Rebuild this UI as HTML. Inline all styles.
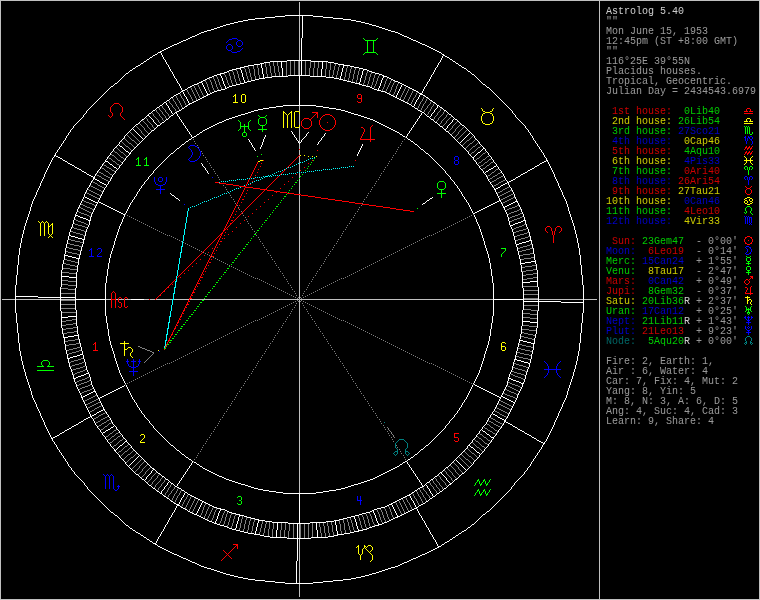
<!DOCTYPE html><html><head><meta charset="utf-8"><style>
html,body{margin:0;padding:0;background:#000;width:760px;height:600px;overflow:hidden}
svg{position:absolute;left:0;top:0}
.ln{position:absolute;left:606px;height:10px;line-height:10px;font-family:"Liberation Mono",monospace;font-size:10px;white-space:pre}
#side{position:absolute;left:0;top:0;width:760px;height:600px;opacity:0.8;will-change:transform}
</style></head><body>
<svg width="760" height="600" viewBox="0 0 760 600" shape-rendering="crispEdges">
<path fill="#c0c0c0" d="M0 0h760v1h-760zM0 1h1v1h-1zM599 1h1v1h-1zM759 1h1v1h-1zM0 2h1v1h-1zM299 2h1v1h-1zM599 2h1v1h-1zM759 2h1v1h-1zM0 3h1v1h-1zM299 3h1v1h-1zM599 3h1v1h-1zM759 3h1v1h-1zM0 4h1v1h-1zM299 4h1v1h-1zM599 4h1v1h-1zM759 4h1v1h-1zM0 5h1v1h-1zM299 5h1v1h-1zM599 5h1v1h-1zM759 5h1v1h-1zM0 6h1v1h-1zM299 6h1v1h-1zM599 6h1v1h-1zM759 6h1v1h-1zM0 7h1v1h-1zM299 7h1v1h-1zM599 7h1v1h-1zM759 7h1v1h-1zM0 8h1v1h-1zM299 8h1v1h-1zM599 8h1v1h-1zM759 8h1v1h-1zM0 9h1v1h-1zM299 9h1v1h-1zM599 9h1v1h-1zM759 9h1v1h-1zM0 10h1v1h-1zM299 10h1v1h-1zM599 10h1v1h-1zM759 10h1v1h-1zM0 11h1v1h-1zM299 11h1v1h-1zM599 11h1v1h-1zM759 11h1v1h-1zM0 12h1v1h-1zM299 12h1v1h-1zM599 12h1v1h-1zM759 12h1v1h-1zM0 13h1v1h-1zM299 13h1v1h-1zM599 13h1v1h-1zM759 13h1v1h-1zM0 14h1v1h-1zM299 14h1v1h-1zM599 14h1v1h-1zM759 14h1v1h-1zM0 15h1v1h-1zM599 15h1v1h-1zM759 15h1v1h-1zM0 16h1v1h-1zM299 16h1v1h-1zM599 16h1v1h-1zM759 16h1v1h-1zM0 17h1v1h-1zM299 17h1v1h-1zM599 17h1v1h-1zM759 17h1v1h-1zM0 18h1v1h-1zM299 18h1v1h-1zM599 18h1v1h-1zM759 18h1v1h-1zM0 19h1v1h-1zM299 19h1v1h-1zM599 19h1v1h-1zM759 19h1v1h-1zM0 20h1v1h-1zM299 20h1v1h-1zM599 20h1v1h-1zM759 20h1v1h-1zM0 21h1v1h-1zM299 21h1v1h-1zM599 21h1v1h-1zM759 21h1v1h-1zM0 22h1v1h-1zM299 22h1v1h-1zM599 22h1v1h-1zM759 22h1v1h-1zM0 23h1v1h-1zM299 23h1v1h-1zM599 23h1v1h-1zM759 23h1v1h-1zM0 24h1v1h-1zM299 24h1v1h-1zM599 24h1v1h-1zM759 24h1v1h-1zM0 25h1v1h-1zM299 25h1v1h-1zM599 25h1v1h-1zM759 25h1v1h-1zM0 26h1v1h-1zM299 26h1v1h-1zM599 26h1v1h-1zM759 26h1v1h-1zM0 27h1v1h-1zM299 27h1v1h-1zM599 27h1v1h-1zM759 27h1v1h-1zM0 28h1v1h-1zM299 28h1v1h-1zM599 28h1v1h-1zM759 28h1v1h-1zM0 29h1v1h-1zM299 29h1v1h-1zM599 29h1v1h-1zM759 29h1v1h-1zM0 30h1v1h-1zM299 30h1v1h-1zM599 30h1v1h-1zM759 30h1v1h-1zM0 31h1v1h-1zM299 31h1v1h-1zM599 31h1v1h-1zM759 31h1v1h-1zM0 32h1v1h-1zM299 32h1v1h-1zM599 32h1v1h-1zM759 32h1v1h-1zM0 33h1v1h-1zM299 33h1v1h-1zM599 33h1v1h-1zM759 33h1v1h-1zM0 34h1v1h-1zM299 34h1v1h-1zM599 34h1v1h-1zM759 34h1v1h-1zM0 35h1v1h-1zM299 35h1v1h-1zM599 35h1v1h-1zM759 35h1v1h-1zM0 36h1v1h-1zM299 36h1v1h-1zM599 36h1v1h-1zM759 36h1v1h-1zM0 37h1v1h-1zM299 37h1v1h-1zM599 37h1v1h-1zM759 37h1v1h-1zM0 38h1v1h-1zM299 38h1v1h-1zM599 38h1v1h-1zM759 38h1v1h-1zM0 39h1v1h-1zM299 39h1v1h-1zM599 39h1v1h-1zM759 39h1v1h-1zM0 40h1v1h-1zM299 40h1v1h-1zM599 40h1v1h-1zM759 40h1v1h-1zM0 41h1v1h-1zM299 41h1v1h-1zM599 41h1v1h-1zM759 41h1v1h-1zM0 42h1v1h-1zM299 42h1v1h-1zM599 42h1v1h-1zM759 42h1v1h-1zM0 43h1v1h-1zM299 43h1v1h-1zM599 43h1v1h-1zM759 43h1v1h-1zM0 44h1v1h-1zM299 44h1v1h-1zM599 44h1v1h-1zM759 44h1v1h-1zM0 45h1v1h-1zM299 45h1v1h-1zM599 45h1v1h-1zM759 45h1v1h-1zM0 46h1v1h-1zM299 46h1v1h-1zM599 46h1v1h-1zM759 46h1v1h-1zM0 47h1v1h-1zM299 47h1v1h-1zM599 47h1v1h-1zM759 47h1v1h-1zM0 48h1v1h-1zM299 48h1v1h-1zM599 48h1v1h-1zM759 48h1v1h-1zM0 49h1v1h-1zM299 49h1v1h-1zM599 49h1v1h-1zM759 49h1v1h-1zM0 50h1v1h-1zM299 50h1v1h-1zM599 50h1v1h-1zM759 50h1v1h-1zM0 51h1v1h-1zM299 51h1v1h-1zM599 51h1v1h-1zM759 51h1v1h-1zM0 52h1v1h-1zM299 52h1v1h-1zM599 52h1v1h-1zM759 52h1v1h-1zM0 53h1v1h-1zM299 53h1v1h-1zM599 53h1v1h-1zM759 53h1v1h-1zM0 54h1v1h-1zM299 54h1v1h-1zM599 54h1v1h-1zM759 54h1v1h-1zM0 55h1v1h-1zM299 55h1v1h-1zM599 55h1v1h-1zM759 55h1v1h-1zM0 56h1v1h-1zM299 56h1v1h-1zM599 56h1v1h-1zM759 56h1v1h-1zM0 57h1v1h-1zM299 57h1v1h-1zM599 57h1v1h-1zM759 57h1v1h-1zM0 58h1v1h-1zM299 58h1v1h-1zM599 58h1v1h-1zM759 58h1v1h-1zM0 59h1v1h-1zM299 59h1v1h-1zM599 59h1v1h-1zM759 59h1v1h-1zM0 60h1v1h-1zM599 60h1v1h-1zM759 60h1v1h-1zM0 61h1v1h-1zM299 61h1v1h-1zM599 61h1v1h-1zM759 61h1v1h-1zM0 62h1v1h-1zM299 62h1v1h-1zM599 62h1v1h-1zM759 62h1v1h-1zM0 63h1v1h-1zM299 63h1v1h-1zM599 63h1v1h-1zM759 63h1v1h-1zM0 64h1v1h-1zM299 64h1v1h-1zM599 64h1v1h-1zM759 64h1v1h-1zM0 65h1v1h-1zM299 65h1v1h-1zM599 65h1v1h-1zM759 65h1v1h-1zM0 66h1v1h-1zM299 66h1v1h-1zM599 66h1v1h-1zM759 66h1v1h-1zM0 67h1v1h-1zM299 67h1v1h-1zM599 67h1v1h-1zM759 67h1v1h-1zM0 68h1v1h-1zM299 68h1v1h-1zM599 68h1v1h-1zM759 68h1v1h-1zM0 69h1v1h-1zM299 69h1v1h-1zM599 69h1v1h-1zM759 69h1v1h-1zM0 70h1v1h-1zM299 70h1v1h-1zM599 70h1v1h-1zM759 70h1v1h-1zM0 71h1v1h-1zM299 71h1v1h-1zM599 71h1v1h-1zM759 71h1v1h-1zM0 72h1v1h-1zM299 72h1v1h-1zM599 72h1v1h-1zM759 72h1v1h-1zM0 73h1v1h-1zM299 73h1v1h-1zM599 73h1v1h-1zM759 73h1v1h-1zM0 74h1v1h-1zM299 74h1v1h-1zM599 74h1v1h-1zM759 74h1v1h-1zM0 75h1v1h-1zM599 75h1v1h-1zM759 75h1v1h-1zM0 76h1v1h-1zM599 76h1v1h-1zM759 76h1v1h-1zM0 77h1v1h-1zM599 77h1v1h-1zM759 77h1v1h-1zM0 78h1v1h-1zM599 78h1v1h-1zM759 78h1v1h-1zM0 79h1v1h-1zM599 79h1v1h-1zM759 79h1v1h-1zM0 80h1v1h-1zM599 80h1v1h-1zM759 80h1v1h-1zM0 81h1v1h-1zM599 81h1v1h-1zM759 81h1v1h-1zM0 82h1v1h-1zM599 82h1v1h-1zM759 82h1v1h-1zM0 83h1v1h-1zM599 83h1v1h-1zM759 83h1v1h-1zM0 84h1v1h-1zM599 84h1v1h-1zM759 84h1v1h-1zM0 85h1v1h-1zM599 85h1v1h-1zM759 85h1v1h-1zM0 86h1v1h-1zM599 86h1v1h-1zM759 86h1v1h-1zM0 87h1v1h-1zM599 87h1v1h-1zM759 87h1v1h-1zM0 88h1v1h-1zM599 88h1v1h-1zM759 88h1v1h-1zM0 89h1v1h-1zM599 89h1v1h-1zM759 89h1v1h-1zM0 90h1v1h-1zM599 90h1v1h-1zM759 90h1v1h-1zM0 91h1v1h-1zM599 91h1v1h-1zM759 91h1v1h-1zM0 92h1v1h-1zM599 92h1v1h-1zM759 92h1v1h-1zM0 93h1v1h-1zM599 93h1v1h-1zM759 93h1v1h-1zM0 94h1v1h-1zM599 94h1v1h-1zM759 94h1v1h-1zM0 95h1v1h-1zM599 95h1v1h-1zM759 95h1v1h-1zM0 96h1v1h-1zM599 96h1v1h-1zM759 96h1v1h-1zM0 97h1v1h-1zM599 97h1v1h-1zM759 97h1v1h-1zM0 98h1v1h-1zM599 98h1v1h-1zM759 98h1v1h-1zM0 99h1v1h-1zM599 99h1v1h-1zM759 99h1v1h-1zM0 100h1v1h-1zM599 100h1v1h-1zM759 100h1v1h-1zM0 101h1v1h-1zM599 101h1v1h-1zM759 101h1v1h-1zM0 102h1v1h-1zM599 102h1v1h-1zM759 102h1v1h-1zM0 103h1v1h-1zM599 103h1v1h-1zM759 103h1v1h-1zM0 104h1v1h-1zM599 104h1v1h-1zM759 104h1v1h-1zM0 105h1v1h-1zM599 105h1v1h-1zM759 105h1v1h-1zM0 106h1v1h-1zM299 106h1v1h-1zM599 106h1v1h-1zM759 106h1v1h-1zM0 107h1v1h-1zM299 107h1v1h-1zM599 107h1v1h-1zM759 107h1v1h-1zM0 108h1v1h-1zM299 108h1v1h-1zM599 108h1v1h-1zM759 108h1v1h-1zM0 109h1v1h-1zM299 109h1v1h-1zM599 109h1v1h-1zM759 109h1v1h-1zM0 110h1v1h-1zM299 110h1v1h-1zM599 110h1v1h-1zM759 110h1v1h-1zM0 111h1v1h-1zM299 111h1v1h-1zM599 111h1v1h-1zM759 111h1v1h-1zM0 112h1v1h-1zM599 112h1v1h-1zM759 112h1v1h-1zM0 113h1v1h-1zM599 113h1v1h-1zM759 113h1v1h-1zM0 114h1v1h-1zM299 114h1v1h-1zM599 114h1v1h-1zM759 114h1v1h-1zM0 115h1v1h-1zM299 115h1v1h-1zM599 115h1v1h-1zM759 115h1v1h-1zM0 116h1v1h-1zM299 116h1v1h-1zM599 116h1v1h-1zM759 116h1v1h-1zM0 117h1v1h-1zM299 117h1v1h-1zM599 117h1v1h-1zM759 117h1v1h-1zM0 118h1v1h-1zM299 118h1v1h-1zM599 118h1v1h-1zM759 118h1v1h-1zM0 119h1v1h-1zM299 119h1v1h-1zM599 119h1v1h-1zM759 119h1v1h-1zM0 120h1v1h-1zM299 120h1v1h-1zM599 120h1v1h-1zM759 120h1v1h-1zM0 121h1v1h-1zM299 121h1v1h-1zM599 121h1v1h-1zM759 121h1v1h-1zM0 122h1v1h-1zM299 122h1v1h-1zM599 122h1v1h-1zM759 122h1v1h-1zM0 123h1v1h-1zM299 123h1v1h-1zM599 123h1v1h-1zM759 123h1v1h-1zM0 124h1v1h-1zM299 124h1v1h-1zM599 124h1v1h-1zM759 124h1v1h-1zM0 125h1v1h-1zM599 125h1v1h-1zM759 125h1v1h-1zM0 126h1v1h-1zM599 126h1v1h-1zM759 126h1v1h-1zM0 127h1v1h-1zM299 127h1v1h-1zM599 127h1v1h-1zM759 127h1v1h-1zM0 128h1v1h-1zM299 128h1v1h-1zM599 128h1v1h-1zM759 128h1v1h-1zM0 129h1v1h-1zM299 129h1v1h-1zM599 129h1v1h-1zM759 129h1v1h-1zM0 130h1v1h-1zM299 130h1v1h-1zM599 130h1v1h-1zM759 130h1v1h-1zM0 131h1v1h-1zM299 131h1v1h-1zM599 131h1v1h-1zM759 131h1v1h-1zM0 132h1v1h-1zM299 132h1v1h-1zM599 132h1v1h-1zM759 132h1v1h-1zM0 133h1v1h-1zM299 133h1v1h-1zM599 133h1v1h-1zM759 133h1v1h-1zM0 134h1v1h-1zM299 134h1v1h-1zM599 134h1v1h-1zM759 134h1v1h-1zM0 135h1v1h-1zM299 135h1v1h-1zM599 135h1v1h-1zM759 135h1v1h-1zM0 136h1v1h-1zM299 136h1v1h-1zM599 136h1v1h-1zM759 136h1v1h-1zM0 137h1v1h-1zM299 137h1v1h-1zM599 137h1v1h-1zM759 137h1v1h-1zM0 138h1v1h-1zM299 138h1v1h-1zM599 138h1v1h-1zM759 138h1v1h-1zM0 139h1v1h-1zM299 139h1v1h-1zM599 139h1v1h-1zM759 139h1v1h-1zM0 140h1v1h-1zM299 140h1v1h-1zM599 140h1v1h-1zM759 140h1v1h-1zM0 141h1v1h-1zM299 141h1v1h-1zM599 141h1v1h-1zM759 141h1v1h-1zM0 142h1v1h-1zM299 142h1v1h-1zM599 142h1v1h-1zM759 142h1v1h-1zM0 143h1v1h-1zM599 143h1v1h-1zM759 143h1v1h-1zM0 144h1v1h-1zM299 144h1v1h-1zM599 144h1v1h-1zM759 144h1v1h-1zM0 145h1v1h-1zM299 145h1v1h-1zM599 145h1v1h-1zM759 145h1v1h-1zM0 146h1v1h-1zM299 146h1v1h-1zM599 146h1v1h-1zM759 146h1v1h-1zM0 147h1v1h-1zM299 147h1v1h-1zM599 147h1v1h-1zM759 147h1v1h-1zM0 148h1v1h-1zM299 148h1v1h-1zM599 148h1v1h-1zM759 148h1v1h-1zM0 149h1v1h-1zM599 149h1v1h-1zM759 149h1v1h-1zM0 150h1v1h-1zM299 150h1v1h-1zM599 150h1v1h-1zM759 150h1v1h-1zM0 151h1v1h-1zM299 151h1v1h-1zM599 151h1v1h-1zM759 151h1v1h-1zM0 152h1v1h-1zM299 152h1v1h-1zM599 152h1v1h-1zM759 152h1v1h-1zM0 153h1v1h-1zM299 153h1v1h-1zM599 153h1v1h-1zM759 153h1v1h-1zM0 154h1v1h-1zM299 154h1v1h-1zM599 154h1v1h-1zM759 154h1v1h-1zM0 155h1v1h-1zM599 155h1v1h-1zM759 155h1v1h-1zM0 156h1v1h-1zM299 156h1v1h-1zM599 156h1v1h-1zM759 156h1v1h-1zM0 157h1v1h-1zM299 157h1v1h-1zM599 157h1v1h-1zM759 157h1v1h-1zM0 158h1v1h-1zM299 158h1v1h-1zM599 158h1v1h-1zM759 158h1v1h-1zM0 159h1v1h-1zM299 159h1v1h-1zM599 159h1v1h-1zM759 159h1v1h-1zM0 160h1v1h-1zM299 160h1v1h-1zM599 160h1v1h-1zM759 160h1v1h-1zM0 161h1v1h-1zM299 161h1v1h-1zM599 161h1v1h-1zM759 161h1v1h-1zM0 162h1v1h-1zM299 162h1v1h-1zM599 162h1v1h-1zM759 162h1v1h-1zM0 163h1v1h-1zM299 163h1v1h-1zM599 163h1v1h-1zM759 163h1v1h-1zM0 164h1v1h-1zM299 164h1v1h-1zM599 164h1v1h-1zM759 164h1v1h-1zM0 165h1v1h-1zM299 165h1v1h-1zM599 165h1v1h-1zM759 165h1v1h-1zM0 166h1v1h-1zM299 166h1v1h-1zM599 166h1v1h-1zM759 166h1v1h-1zM0 167h1v1h-1zM299 167h1v1h-1zM599 167h1v1h-1zM759 167h1v1h-1zM0 168h1v1h-1zM299 168h1v1h-1zM599 168h1v1h-1zM759 168h1v1h-1zM0 169h1v1h-1zM299 169h1v1h-1zM599 169h1v1h-1zM759 169h1v1h-1zM0 170h1v1h-1zM299 170h1v1h-1zM599 170h1v1h-1zM759 170h1v1h-1zM0 171h1v1h-1zM299 171h1v1h-1zM599 171h1v1h-1zM759 171h1v1h-1zM0 172h1v1h-1zM599 172h1v1h-1zM759 172h1v1h-1zM0 173h1v1h-1zM299 173h1v1h-1zM599 173h1v1h-1zM759 173h1v1h-1zM0 174h1v1h-1zM299 174h1v1h-1zM599 174h1v1h-1zM759 174h1v1h-1zM0 175h1v1h-1zM299 175h1v1h-1zM599 175h1v1h-1zM759 175h1v1h-1zM0 176h1v1h-1zM299 176h1v1h-1zM599 176h1v1h-1zM759 176h1v1h-1zM0 177h1v1h-1zM299 177h1v1h-1zM599 177h1v1h-1zM759 177h1v1h-1zM0 178h1v1h-1zM599 178h1v1h-1zM759 178h1v1h-1zM0 179h1v1h-1zM299 179h1v1h-1zM599 179h1v1h-1zM759 179h1v1h-1zM0 180h1v1h-1zM299 180h1v1h-1zM599 180h1v1h-1zM759 180h1v1h-1zM0 181h1v1h-1zM299 181h1v1h-1zM599 181h1v1h-1zM759 181h1v1h-1zM0 182h1v1h-1zM299 182h1v1h-1zM599 182h1v1h-1zM759 182h1v1h-1zM0 183h1v1h-1zM299 183h1v1h-1zM599 183h1v1h-1zM759 183h1v1h-1zM0 184h1v1h-1zM299 184h1v1h-1zM599 184h1v1h-1zM759 184h1v1h-1zM0 185h1v1h-1zM299 185h1v1h-1zM599 185h1v1h-1zM759 185h1v1h-1zM0 186h1v1h-1zM299 186h1v1h-1zM599 186h1v1h-1zM759 186h1v1h-1zM0 187h1v1h-1zM299 187h1v1h-1zM599 187h1v1h-1zM759 187h1v1h-1zM0 188h1v1h-1zM299 188h1v1h-1zM599 188h1v1h-1zM759 188h1v1h-1zM0 189h1v1h-1zM299 189h1v1h-1zM599 189h1v1h-1zM759 189h1v1h-1zM0 190h1v1h-1zM299 190h1v1h-1zM599 190h1v1h-1zM759 190h1v1h-1zM0 191h1v1h-1zM299 191h1v1h-1zM599 191h1v1h-1zM759 191h1v1h-1zM0 192h1v1h-1zM299 192h1v1h-1zM599 192h1v1h-1zM759 192h1v1h-1zM0 193h1v1h-1zM299 193h1v1h-1zM599 193h1v1h-1zM759 193h1v1h-1zM0 194h1v1h-1zM599 194h1v1h-1zM759 194h1v1h-1zM0 195h1v1h-1zM299 195h1v1h-1zM599 195h1v1h-1zM759 195h1v1h-1zM0 196h1v1h-1zM299 196h1v1h-1zM599 196h1v1h-1zM759 196h1v1h-1zM0 197h1v1h-1zM299 197h1v1h-1zM599 197h1v1h-1zM759 197h1v1h-1zM0 198h1v1h-1zM299 198h1v1h-1zM599 198h1v1h-1zM759 198h1v1h-1zM0 199h1v1h-1zM299 199h1v1h-1zM599 199h1v1h-1zM759 199h1v1h-1zM0 200h1v1h-1zM299 200h1v1h-1zM599 200h1v1h-1zM759 200h1v1h-1zM0 201h1v1h-1zM299 201h1v1h-1zM599 201h1v1h-1zM759 201h1v1h-1zM0 202h1v1h-1zM299 202h1v1h-1zM599 202h1v1h-1zM759 202h1v1h-1zM0 203h1v1h-1zM299 203h1v1h-1zM599 203h1v1h-1zM759 203h1v1h-1zM0 204h1v1h-1zM299 204h1v1h-1zM599 204h1v1h-1zM759 204h1v1h-1zM0 205h1v1h-1zM299 205h1v1h-1zM599 205h1v1h-1zM759 205h1v1h-1zM0 206h1v1h-1zM299 206h1v1h-1zM599 206h1v1h-1zM759 206h1v1h-1zM0 207h1v1h-1zM299 207h1v1h-1zM599 207h1v1h-1zM759 207h1v1h-1zM0 208h1v1h-1zM299 208h1v1h-1zM599 208h1v1h-1zM759 208h1v1h-1zM0 209h1v1h-1zM299 209h1v1h-1zM599 209h1v1h-1zM759 209h1v1h-1zM0 210h1v1h-1zM299 210h1v1h-1zM599 210h1v1h-1zM759 210h1v1h-1zM0 211h1v1h-1zM299 211h1v1h-1zM599 211h1v1h-1zM759 211h1v1h-1zM0 212h1v1h-1zM299 212h1v1h-1zM599 212h1v1h-1zM759 212h1v1h-1zM0 213h1v1h-1zM299 213h1v1h-1zM599 213h1v1h-1zM759 213h1v1h-1zM0 214h1v1h-1zM299 214h1v1h-1zM599 214h1v1h-1zM759 214h1v1h-1zM0 215h1v1h-1zM299 215h1v1h-1zM599 215h1v1h-1zM759 215h1v1h-1zM0 216h1v1h-1zM299 216h1v1h-1zM599 216h1v1h-1zM759 216h1v1h-1zM0 217h1v1h-1zM299 217h1v1h-1zM599 217h1v1h-1zM759 217h1v1h-1zM0 218h1v1h-1zM299 218h1v1h-1zM599 218h1v1h-1zM759 218h1v1h-1zM0 219h1v1h-1zM299 219h1v1h-1zM599 219h1v1h-1zM759 219h1v1h-1zM0 220h1v1h-1zM299 220h1v1h-1zM599 220h1v1h-1zM759 220h1v1h-1zM0 221h1v1h-1zM299 221h1v1h-1zM599 221h1v1h-1zM759 221h1v1h-1zM0 222h1v1h-1zM299 222h1v1h-1zM599 222h1v1h-1zM759 222h1v1h-1zM0 223h1v1h-1zM299 223h1v1h-1zM599 223h1v1h-1zM759 223h1v1h-1zM0 224h1v1h-1zM299 224h1v1h-1zM599 224h1v1h-1zM759 224h1v1h-1zM0 225h1v1h-1zM299 225h1v1h-1zM599 225h1v1h-1zM759 225h1v1h-1zM0 226h1v1h-1zM299 226h1v1h-1zM599 226h1v1h-1zM759 226h1v1h-1zM0 227h1v1h-1zM299 227h1v1h-1zM599 227h1v1h-1zM759 227h1v1h-1zM0 228h1v1h-1zM299 228h1v1h-1zM599 228h1v1h-1zM759 228h1v1h-1zM0 229h1v1h-1zM299 229h1v1h-1zM599 229h1v1h-1zM759 229h1v1h-1zM0 230h1v1h-1zM299 230h1v1h-1zM599 230h1v1h-1zM759 230h1v1h-1zM0 231h1v1h-1zM299 231h1v1h-1zM599 231h1v1h-1zM759 231h1v1h-1zM0 232h1v1h-1zM299 232h1v1h-1zM599 232h1v1h-1zM759 232h1v1h-1zM0 233h1v1h-1zM299 233h1v1h-1zM599 233h1v1h-1zM759 233h1v1h-1zM0 234h1v1h-1zM299 234h1v1h-1zM599 234h1v1h-1zM759 234h1v1h-1zM0 235h1v1h-1zM299 235h1v1h-1zM599 235h1v1h-1zM759 235h1v1h-1zM0 236h1v1h-1zM299 236h1v1h-1zM599 236h1v1h-1zM759 236h1v1h-1zM0 237h1v1h-1zM299 237h1v1h-1zM599 237h1v1h-1zM759 237h1v1h-1zM0 238h1v1h-1zM299 238h1v1h-1zM599 238h1v1h-1zM759 238h1v1h-1zM0 239h1v1h-1zM299 239h1v1h-1zM599 239h1v1h-1zM759 239h1v1h-1zM0 240h1v1h-1zM299 240h1v1h-1zM599 240h1v1h-1zM759 240h1v1h-1zM0 241h1v1h-1zM299 241h1v1h-1zM599 241h1v1h-1zM759 241h1v1h-1zM0 242h1v1h-1zM299 242h1v1h-1zM599 242h1v1h-1zM759 242h1v1h-1zM0 243h1v1h-1zM299 243h1v1h-1zM599 243h1v1h-1zM759 243h1v1h-1zM0 244h1v1h-1zM299 244h1v1h-1zM599 244h1v1h-1zM759 244h1v1h-1zM0 245h1v1h-1zM299 245h1v1h-1zM599 245h1v1h-1zM759 245h1v1h-1zM0 246h1v1h-1zM299 246h1v1h-1zM599 246h1v1h-1zM759 246h1v1h-1zM0 247h1v1h-1zM299 247h1v1h-1zM599 247h1v1h-1zM759 247h1v1h-1zM0 248h1v1h-1zM299 248h1v1h-1zM599 248h1v1h-1zM759 248h1v1h-1zM0 249h1v1h-1zM299 249h1v1h-1zM599 249h1v1h-1zM759 249h1v1h-1zM0 250h1v1h-1zM299 250h1v1h-1zM599 250h1v1h-1zM759 250h1v1h-1zM0 251h1v1h-1zM299 251h1v1h-1zM599 251h1v1h-1zM759 251h1v1h-1zM0 252h1v1h-1zM299 252h1v1h-1zM599 252h1v1h-1zM759 252h1v1h-1zM0 253h1v1h-1zM299 253h1v1h-1zM599 253h1v1h-1zM759 253h1v1h-1zM0 254h1v1h-1zM299 254h1v1h-1zM599 254h1v1h-1zM759 254h1v1h-1zM0 255h1v1h-1zM299 255h1v1h-1zM599 255h1v1h-1zM759 255h1v1h-1zM0 256h1v1h-1zM299 256h1v1h-1zM599 256h1v1h-1zM759 256h1v1h-1zM0 257h1v1h-1zM299 257h1v1h-1zM599 257h1v1h-1zM759 257h1v1h-1zM0 258h1v1h-1zM299 258h1v1h-1zM599 258h1v1h-1zM759 258h1v1h-1zM0 259h1v1h-1zM299 259h1v1h-1zM599 259h1v1h-1zM759 259h1v1h-1zM0 260h1v1h-1zM299 260h1v1h-1zM599 260h1v1h-1zM759 260h1v1h-1zM0 261h1v1h-1zM299 261h1v1h-1zM599 261h1v1h-1zM759 261h1v1h-1zM0 262h1v1h-1zM299 262h1v1h-1zM599 262h1v1h-1zM759 262h1v1h-1zM0 263h1v1h-1zM299 263h1v1h-1zM599 263h1v1h-1zM759 263h1v1h-1zM0 264h1v1h-1zM299 264h1v1h-1zM599 264h1v1h-1zM759 264h1v1h-1zM0 265h1v1h-1zM299 265h1v1h-1zM599 265h1v1h-1zM759 265h1v1h-1zM0 266h1v1h-1zM299 266h1v1h-1zM599 266h1v1h-1zM759 266h1v1h-1zM0 267h1v1h-1zM299 267h1v1h-1zM599 267h1v1h-1zM759 267h1v1h-1zM0 268h1v1h-1zM299 268h1v1h-1zM599 268h1v1h-1zM759 268h1v1h-1zM0 269h1v1h-1zM299 269h1v1h-1zM599 269h1v1h-1zM759 269h1v1h-1zM0 270h1v1h-1zM299 270h1v1h-1zM599 270h1v1h-1zM759 270h1v1h-1zM0 271h1v1h-1zM299 271h1v1h-1zM599 271h1v1h-1zM759 271h1v1h-1zM0 272h1v1h-1zM299 272h1v1h-1zM599 272h1v1h-1zM759 272h1v1h-1zM0 273h1v1h-1zM299 273h1v1h-1zM599 273h1v1h-1zM759 273h1v1h-1zM0 274h1v1h-1zM299 274h1v1h-1zM599 274h1v1h-1zM759 274h1v1h-1zM0 275h1v1h-1zM299 275h1v1h-1zM599 275h1v1h-1zM759 275h1v1h-1zM0 276h1v1h-1zM299 276h1v1h-1zM599 276h1v1h-1zM759 276h1v1h-1zM0 277h1v1h-1zM299 277h1v1h-1zM599 277h1v1h-1zM759 277h1v1h-1zM0 278h1v1h-1zM299 278h1v1h-1zM599 278h1v1h-1zM759 278h1v1h-1zM0 279h1v1h-1zM299 279h1v1h-1zM599 279h1v1h-1zM759 279h1v1h-1zM0 280h1v1h-1zM299 280h1v1h-1zM599 280h1v1h-1zM759 280h1v1h-1zM0 281h1v1h-1zM299 281h1v1h-1zM599 281h1v1h-1zM759 281h1v1h-1zM0 282h1v1h-1zM299 282h1v1h-1zM599 282h1v1h-1zM759 282h1v1h-1zM0 283h1v1h-1zM299 283h1v1h-1zM599 283h1v1h-1zM759 283h1v1h-1zM0 284h1v1h-1zM299 284h1v1h-1zM599 284h1v1h-1zM759 284h1v1h-1zM0 285h1v1h-1zM299 285h1v1h-1zM599 285h1v1h-1zM759 285h1v1h-1zM0 286h1v1h-1zM299 286h1v1h-1zM599 286h1v1h-1zM759 286h1v1h-1zM0 287h1v1h-1zM299 287h1v1h-1zM599 287h1v1h-1zM759 287h1v1h-1zM0 288h1v1h-1zM299 288h1v1h-1zM599 288h1v1h-1zM759 288h1v1h-1zM0 289h1v1h-1zM299 289h1v1h-1zM599 289h1v1h-1zM759 289h1v1h-1zM0 290h1v1h-1zM299 290h1v1h-1zM599 290h1v1h-1zM759 290h1v1h-1zM0 291h1v1h-1zM299 291h1v1h-1zM599 291h1v1h-1zM759 291h1v1h-1zM0 292h1v1h-1zM299 292h1v1h-1zM599 292h1v1h-1zM759 292h1v1h-1zM0 293h1v1h-1zM299 293h1v1h-1zM599 293h1v1h-1zM759 293h1v1h-1zM0 294h1v1h-1zM299 294h1v1h-1zM599 294h1v1h-1zM759 294h1v1h-1zM0 295h1v1h-1zM299 295h1v1h-1zM599 295h1v1h-1zM759 295h1v1h-1zM0 296h1v1h-1zM299 296h1v1h-1zM599 296h1v1h-1zM759 296h1v1h-1zM0 297h1v1h-1zM299 297h1v1h-1zM599 297h1v1h-1zM759 297h1v1h-1zM0 298h1v1h-1zM299 298h1v1h-1zM599 298h1v1h-1zM759 298h1v1h-1zM0 299h1v1h-1zM2 299h13v1h-13zM16 299h44v1h-44zM61 299h14v1h-14zM106 299h5v1h-5zM116 299h2v1h-2zM119 299h5v1h-5zM125 299h6v1h-6zM144 299h5v1h-5zM150 299h5v1h-5zM156 299h16v1h-16zM174 299h15v1h-15zM190 299h109v1h-109zM300 299h193v1h-193zM524 299h14v1h-14zM539 299h44v1h-44zM584 299h13v1h-13zM599 299h1v1h-1zM759 299h1v1h-1zM0 300h1v1h-1zM299 300h1v1h-1zM599 300h1v1h-1zM759 300h1v1h-1zM0 301h1v1h-1zM299 301h1v1h-1zM599 301h1v1h-1zM759 301h1v1h-1zM0 302h1v1h-1zM299 302h1v1h-1zM599 302h1v1h-1zM759 302h1v1h-1zM0 303h1v1h-1zM299 303h1v1h-1zM599 303h1v1h-1zM759 303h1v1h-1zM0 304h1v1h-1zM299 304h1v1h-1zM599 304h1v1h-1zM759 304h1v1h-1zM0 305h1v1h-1zM299 305h1v1h-1zM599 305h1v1h-1zM759 305h1v1h-1zM0 306h1v1h-1zM299 306h1v1h-1zM599 306h1v1h-1zM759 306h1v1h-1zM0 307h1v1h-1zM299 307h1v1h-1zM599 307h1v1h-1zM759 307h1v1h-1zM0 308h1v1h-1zM299 308h1v1h-1zM599 308h1v1h-1zM759 308h1v1h-1zM0 309h1v1h-1zM299 309h1v1h-1zM599 309h1v1h-1zM759 309h1v1h-1zM0 310h1v1h-1zM299 310h1v1h-1zM599 310h1v1h-1zM759 310h1v1h-1zM0 311h1v1h-1zM299 311h1v1h-1zM599 311h1v1h-1zM759 311h1v1h-1zM0 312h1v1h-1zM299 312h1v1h-1zM599 312h1v1h-1zM759 312h1v1h-1zM0 313h1v1h-1zM299 313h1v1h-1zM599 313h1v1h-1zM759 313h1v1h-1zM0 314h1v1h-1zM299 314h1v1h-1zM599 314h1v1h-1zM759 314h1v1h-1zM0 315h1v1h-1zM299 315h1v1h-1zM599 315h1v1h-1zM759 315h1v1h-1zM0 316h1v1h-1zM299 316h1v1h-1zM599 316h1v1h-1zM759 316h1v1h-1zM0 317h1v1h-1zM299 317h1v1h-1zM599 317h1v1h-1zM759 317h1v1h-1zM0 318h1v1h-1zM299 318h1v1h-1zM599 318h1v1h-1zM759 318h1v1h-1zM0 319h1v1h-1zM299 319h1v1h-1zM599 319h1v1h-1zM759 319h1v1h-1zM0 320h1v1h-1zM299 320h1v1h-1zM599 320h1v1h-1zM759 320h1v1h-1zM0 321h1v1h-1zM299 321h1v1h-1zM599 321h1v1h-1zM759 321h1v1h-1zM0 322h1v1h-1zM299 322h1v1h-1zM599 322h1v1h-1zM759 322h1v1h-1zM0 323h1v1h-1zM299 323h1v1h-1zM599 323h1v1h-1zM759 323h1v1h-1zM0 324h1v1h-1zM299 324h1v1h-1zM599 324h1v1h-1zM759 324h1v1h-1zM0 325h1v1h-1zM299 325h1v1h-1zM599 325h1v1h-1zM759 325h1v1h-1zM0 326h1v1h-1zM299 326h1v1h-1zM599 326h1v1h-1zM759 326h1v1h-1zM0 327h1v1h-1zM299 327h1v1h-1zM599 327h1v1h-1zM759 327h1v1h-1zM0 328h1v1h-1zM299 328h1v1h-1zM599 328h1v1h-1zM759 328h1v1h-1zM0 329h1v1h-1zM299 329h1v1h-1zM599 329h1v1h-1zM759 329h1v1h-1zM0 330h1v1h-1zM299 330h1v1h-1zM599 330h1v1h-1zM759 330h1v1h-1zM0 331h1v1h-1zM299 331h1v1h-1zM599 331h1v1h-1zM759 331h1v1h-1zM0 332h1v1h-1zM299 332h1v1h-1zM599 332h1v1h-1zM759 332h1v1h-1zM0 333h1v1h-1zM299 333h1v1h-1zM599 333h1v1h-1zM759 333h1v1h-1zM0 334h1v1h-1zM299 334h1v1h-1zM599 334h1v1h-1zM759 334h1v1h-1zM0 335h1v1h-1zM299 335h1v1h-1zM599 335h1v1h-1zM759 335h1v1h-1zM0 336h1v1h-1zM299 336h1v1h-1zM599 336h1v1h-1zM759 336h1v1h-1zM0 337h1v1h-1zM299 337h1v1h-1zM599 337h1v1h-1zM759 337h1v1h-1zM0 338h1v1h-1zM299 338h1v1h-1zM599 338h1v1h-1zM759 338h1v1h-1zM0 339h1v1h-1zM299 339h1v1h-1zM599 339h1v1h-1zM759 339h1v1h-1zM0 340h1v1h-1zM299 340h1v1h-1zM599 340h1v1h-1zM759 340h1v1h-1zM0 341h1v1h-1zM299 341h1v1h-1zM599 341h1v1h-1zM759 341h1v1h-1zM0 342h1v1h-1zM299 342h1v1h-1zM599 342h1v1h-1zM759 342h1v1h-1zM0 343h1v1h-1zM299 343h1v1h-1zM599 343h1v1h-1zM759 343h1v1h-1zM0 344h1v1h-1zM299 344h1v1h-1zM599 344h1v1h-1zM759 344h1v1h-1zM0 345h1v1h-1zM299 345h1v1h-1zM599 345h1v1h-1zM759 345h1v1h-1zM0 346h1v1h-1zM299 346h1v1h-1zM599 346h1v1h-1zM759 346h1v1h-1zM0 347h1v1h-1zM299 347h1v1h-1zM599 347h1v1h-1zM759 347h1v1h-1zM0 348h1v1h-1zM299 348h1v1h-1zM599 348h1v1h-1zM759 348h1v1h-1zM0 349h1v1h-1zM299 349h1v1h-1zM599 349h1v1h-1zM759 349h1v1h-1zM0 350h1v1h-1zM299 350h1v1h-1zM599 350h1v1h-1zM759 350h1v1h-1zM0 351h1v1h-1zM299 351h1v1h-1zM599 351h1v1h-1zM759 351h1v1h-1zM0 352h1v1h-1zM299 352h1v1h-1zM599 352h1v1h-1zM759 352h1v1h-1zM0 353h1v1h-1zM299 353h1v1h-1zM599 353h1v1h-1zM759 353h1v1h-1zM0 354h1v1h-1zM299 354h1v1h-1zM599 354h1v1h-1zM759 354h1v1h-1zM0 355h1v1h-1zM299 355h1v1h-1zM599 355h1v1h-1zM759 355h1v1h-1zM0 356h1v1h-1zM299 356h1v1h-1zM599 356h1v1h-1zM759 356h1v1h-1zM0 357h1v1h-1zM299 357h1v1h-1zM599 357h1v1h-1zM759 357h1v1h-1zM0 358h1v1h-1zM299 358h1v1h-1zM599 358h1v1h-1zM759 358h1v1h-1zM0 359h1v1h-1zM299 359h1v1h-1zM599 359h1v1h-1zM759 359h1v1h-1zM0 360h1v1h-1zM299 360h1v1h-1zM599 360h1v1h-1zM759 360h1v1h-1zM0 361h1v1h-1zM299 361h1v1h-1zM599 361h1v1h-1zM759 361h1v1h-1zM0 362h1v1h-1zM299 362h1v1h-1zM599 362h1v1h-1zM759 362h1v1h-1zM0 363h1v1h-1zM299 363h1v1h-1zM599 363h1v1h-1zM759 363h1v1h-1zM0 364h1v1h-1zM299 364h1v1h-1zM599 364h1v1h-1zM759 364h1v1h-1zM0 365h1v1h-1zM299 365h1v1h-1zM599 365h1v1h-1zM759 365h1v1h-1zM0 366h1v1h-1zM299 366h1v1h-1zM599 366h1v1h-1zM759 366h1v1h-1zM0 367h1v1h-1zM299 367h1v1h-1zM599 367h1v1h-1zM759 367h1v1h-1zM0 368h1v1h-1zM299 368h1v1h-1zM599 368h1v1h-1zM759 368h1v1h-1zM0 369h1v1h-1zM299 369h1v1h-1zM599 369h1v1h-1zM759 369h1v1h-1zM0 370h1v1h-1zM299 370h1v1h-1zM599 370h1v1h-1zM759 370h1v1h-1zM0 371h1v1h-1zM299 371h1v1h-1zM599 371h1v1h-1zM759 371h1v1h-1zM0 372h1v1h-1zM299 372h1v1h-1zM599 372h1v1h-1zM759 372h1v1h-1zM0 373h1v1h-1zM299 373h1v1h-1zM599 373h1v1h-1zM759 373h1v1h-1zM0 374h1v1h-1zM299 374h1v1h-1zM599 374h1v1h-1zM759 374h1v1h-1zM0 375h1v1h-1zM299 375h1v1h-1zM599 375h1v1h-1zM759 375h1v1h-1zM0 376h1v1h-1zM299 376h1v1h-1zM599 376h1v1h-1zM759 376h1v1h-1zM0 377h1v1h-1zM299 377h1v1h-1zM599 377h1v1h-1zM759 377h1v1h-1zM0 378h1v1h-1zM299 378h1v1h-1zM599 378h1v1h-1zM759 378h1v1h-1zM0 379h1v1h-1zM299 379h1v1h-1zM599 379h1v1h-1zM759 379h1v1h-1zM0 380h1v1h-1zM299 380h1v1h-1zM599 380h1v1h-1zM759 380h1v1h-1zM0 381h1v1h-1zM299 381h1v1h-1zM599 381h1v1h-1zM759 381h1v1h-1zM0 382h1v1h-1zM299 382h1v1h-1zM599 382h1v1h-1zM759 382h1v1h-1zM0 383h1v1h-1zM299 383h1v1h-1zM599 383h1v1h-1zM759 383h1v1h-1zM0 384h1v1h-1zM299 384h1v1h-1zM599 384h1v1h-1zM759 384h1v1h-1zM0 385h1v1h-1zM299 385h1v1h-1zM599 385h1v1h-1zM759 385h1v1h-1zM0 386h1v1h-1zM299 386h1v1h-1zM599 386h1v1h-1zM759 386h1v1h-1zM0 387h1v1h-1zM299 387h1v1h-1zM599 387h1v1h-1zM759 387h1v1h-1zM0 388h1v1h-1zM299 388h1v1h-1zM599 388h1v1h-1zM759 388h1v1h-1zM0 389h1v1h-1zM299 389h1v1h-1zM599 389h1v1h-1zM759 389h1v1h-1zM0 390h1v1h-1zM299 390h1v1h-1zM599 390h1v1h-1zM759 390h1v1h-1zM0 391h1v1h-1zM299 391h1v1h-1zM599 391h1v1h-1zM759 391h1v1h-1zM0 392h1v1h-1zM299 392h1v1h-1zM599 392h1v1h-1zM759 392h1v1h-1zM0 393h1v1h-1zM299 393h1v1h-1zM599 393h1v1h-1zM759 393h1v1h-1zM0 394h1v1h-1zM299 394h1v1h-1zM599 394h1v1h-1zM759 394h1v1h-1zM0 395h1v1h-1zM299 395h1v1h-1zM599 395h1v1h-1zM759 395h1v1h-1zM0 396h1v1h-1zM299 396h1v1h-1zM599 396h1v1h-1zM759 396h1v1h-1zM0 397h1v1h-1zM299 397h1v1h-1zM599 397h1v1h-1zM759 397h1v1h-1zM0 398h1v1h-1zM299 398h1v1h-1zM599 398h1v1h-1zM759 398h1v1h-1zM0 399h1v1h-1zM299 399h1v1h-1zM599 399h1v1h-1zM759 399h1v1h-1zM0 400h1v1h-1zM299 400h1v1h-1zM599 400h1v1h-1zM759 400h1v1h-1zM0 401h1v1h-1zM299 401h1v1h-1zM599 401h1v1h-1zM759 401h1v1h-1zM0 402h1v1h-1zM299 402h1v1h-1zM599 402h1v1h-1zM759 402h1v1h-1zM0 403h1v1h-1zM299 403h1v1h-1zM599 403h1v1h-1zM759 403h1v1h-1zM0 404h1v1h-1zM299 404h1v1h-1zM599 404h1v1h-1zM759 404h1v1h-1zM0 405h1v1h-1zM299 405h1v1h-1zM599 405h1v1h-1zM759 405h1v1h-1zM0 406h1v1h-1zM299 406h1v1h-1zM599 406h1v1h-1zM759 406h1v1h-1zM0 407h1v1h-1zM299 407h1v1h-1zM599 407h1v1h-1zM759 407h1v1h-1zM0 408h1v1h-1zM299 408h1v1h-1zM599 408h1v1h-1zM759 408h1v1h-1zM0 409h1v1h-1zM299 409h1v1h-1zM599 409h1v1h-1zM759 409h1v1h-1zM0 410h1v1h-1zM299 410h1v1h-1zM599 410h1v1h-1zM759 410h1v1h-1zM0 411h1v1h-1zM299 411h1v1h-1zM599 411h1v1h-1zM759 411h1v1h-1zM0 412h1v1h-1zM299 412h1v1h-1zM599 412h1v1h-1zM759 412h1v1h-1zM0 413h1v1h-1zM299 413h1v1h-1zM599 413h1v1h-1zM759 413h1v1h-1zM0 414h1v1h-1zM299 414h1v1h-1zM599 414h1v1h-1zM759 414h1v1h-1zM0 415h1v1h-1zM299 415h1v1h-1zM599 415h1v1h-1zM759 415h1v1h-1zM0 416h1v1h-1zM299 416h1v1h-1zM599 416h1v1h-1zM759 416h1v1h-1zM0 417h1v1h-1zM299 417h1v1h-1zM599 417h1v1h-1zM759 417h1v1h-1zM0 418h1v1h-1zM299 418h1v1h-1zM599 418h1v1h-1zM759 418h1v1h-1zM0 419h1v1h-1zM299 419h1v1h-1zM599 419h1v1h-1zM759 419h1v1h-1zM0 420h1v1h-1zM299 420h1v1h-1zM599 420h1v1h-1zM759 420h1v1h-1zM0 421h1v1h-1zM299 421h1v1h-1zM599 421h1v1h-1zM759 421h1v1h-1zM0 422h1v1h-1zM299 422h1v1h-1zM599 422h1v1h-1zM759 422h1v1h-1zM0 423h1v1h-1zM299 423h1v1h-1zM599 423h1v1h-1zM759 423h1v1h-1zM0 424h1v1h-1zM299 424h1v1h-1zM599 424h1v1h-1zM759 424h1v1h-1zM0 425h1v1h-1zM299 425h1v1h-1zM599 425h1v1h-1zM759 425h1v1h-1zM0 426h1v1h-1zM299 426h1v1h-1zM599 426h1v1h-1zM759 426h1v1h-1zM0 427h1v1h-1zM299 427h1v1h-1zM599 427h1v1h-1zM759 427h1v1h-1zM0 428h1v1h-1zM299 428h1v1h-1zM599 428h1v1h-1zM759 428h1v1h-1zM0 429h1v1h-1zM299 429h1v1h-1zM599 429h1v1h-1zM759 429h1v1h-1zM0 430h1v1h-1zM299 430h1v1h-1zM599 430h1v1h-1zM759 430h1v1h-1zM0 431h1v1h-1zM299 431h1v1h-1zM599 431h1v1h-1zM759 431h1v1h-1zM0 432h1v1h-1zM299 432h1v1h-1zM599 432h1v1h-1zM759 432h1v1h-1zM0 433h1v1h-1zM299 433h1v1h-1zM599 433h1v1h-1zM759 433h1v1h-1zM0 434h1v1h-1zM299 434h1v1h-1zM599 434h1v1h-1zM759 434h1v1h-1zM0 435h1v1h-1zM299 435h1v1h-1zM599 435h1v1h-1zM759 435h1v1h-1zM0 436h1v1h-1zM299 436h1v1h-1zM599 436h1v1h-1zM759 436h1v1h-1zM0 437h1v1h-1zM299 437h1v1h-1zM599 437h1v1h-1zM759 437h1v1h-1zM0 438h1v1h-1zM299 438h1v1h-1zM599 438h1v1h-1zM759 438h1v1h-1zM0 439h1v1h-1zM299 439h1v1h-1zM599 439h1v1h-1zM759 439h1v1h-1zM0 440h1v1h-1zM299 440h1v1h-1zM599 440h1v1h-1zM759 440h1v1h-1zM0 441h1v1h-1zM299 441h1v1h-1zM599 441h1v1h-1zM759 441h1v1h-1zM0 442h1v1h-1zM299 442h1v1h-1zM599 442h1v1h-1zM759 442h1v1h-1zM0 443h1v1h-1zM299 443h1v1h-1zM599 443h1v1h-1zM759 443h1v1h-1zM0 444h1v1h-1zM299 444h1v1h-1zM599 444h1v1h-1zM759 444h1v1h-1zM0 445h1v1h-1zM299 445h1v1h-1zM599 445h1v1h-1zM759 445h1v1h-1zM0 446h1v1h-1zM299 446h1v1h-1zM599 446h1v1h-1zM759 446h1v1h-1zM0 447h1v1h-1zM299 447h1v1h-1zM599 447h1v1h-1zM759 447h1v1h-1zM0 448h1v1h-1zM299 448h1v1h-1zM599 448h1v1h-1zM759 448h1v1h-1zM0 449h1v1h-1zM299 449h1v1h-1zM599 449h1v1h-1zM759 449h1v1h-1zM0 450h1v1h-1zM299 450h1v1h-1zM599 450h1v1h-1zM759 450h1v1h-1zM0 451h1v1h-1zM299 451h1v1h-1zM599 451h1v1h-1zM759 451h1v1h-1zM0 452h1v1h-1zM299 452h1v1h-1zM599 452h1v1h-1zM759 452h1v1h-1zM0 453h1v1h-1zM299 453h1v1h-1zM599 453h1v1h-1zM759 453h1v1h-1zM0 454h1v1h-1zM299 454h1v1h-1zM599 454h1v1h-1zM759 454h1v1h-1zM0 455h1v1h-1zM299 455h1v1h-1zM599 455h1v1h-1zM759 455h1v1h-1zM0 456h1v1h-1zM299 456h1v1h-1zM599 456h1v1h-1zM759 456h1v1h-1zM0 457h1v1h-1zM299 457h1v1h-1zM599 457h1v1h-1zM759 457h1v1h-1zM0 458h1v1h-1zM299 458h1v1h-1zM599 458h1v1h-1zM759 458h1v1h-1zM0 459h1v1h-1zM299 459h1v1h-1zM599 459h1v1h-1zM759 459h1v1h-1zM0 460h1v1h-1zM299 460h1v1h-1zM599 460h1v1h-1zM759 460h1v1h-1zM0 461h1v1h-1zM299 461h1v1h-1zM599 461h1v1h-1zM759 461h1v1h-1zM0 462h1v1h-1zM299 462h1v1h-1zM599 462h1v1h-1zM759 462h1v1h-1zM0 463h1v1h-1zM299 463h1v1h-1zM599 463h1v1h-1zM759 463h1v1h-1zM0 464h1v1h-1zM299 464h1v1h-1zM599 464h1v1h-1zM759 464h1v1h-1zM0 465h1v1h-1zM299 465h1v1h-1zM599 465h1v1h-1zM759 465h1v1h-1zM0 466h1v1h-1zM299 466h1v1h-1zM599 466h1v1h-1zM759 466h1v1h-1zM0 467h1v1h-1zM299 467h1v1h-1zM599 467h1v1h-1zM759 467h1v1h-1zM0 468h1v1h-1zM299 468h1v1h-1zM599 468h1v1h-1zM759 468h1v1h-1zM0 469h1v1h-1zM299 469h1v1h-1zM599 469h1v1h-1zM759 469h1v1h-1zM0 470h1v1h-1zM299 470h1v1h-1zM599 470h1v1h-1zM759 470h1v1h-1zM0 471h1v1h-1zM299 471h1v1h-1zM599 471h1v1h-1zM759 471h1v1h-1zM0 472h1v1h-1zM299 472h1v1h-1zM599 472h1v1h-1zM759 472h1v1h-1zM0 473h1v1h-1zM299 473h1v1h-1zM599 473h1v1h-1zM759 473h1v1h-1zM0 474h1v1h-1zM299 474h1v1h-1zM599 474h1v1h-1zM759 474h1v1h-1zM0 475h1v1h-1zM299 475h1v1h-1zM599 475h1v1h-1zM759 475h1v1h-1zM0 476h1v1h-1zM299 476h1v1h-1zM599 476h1v1h-1zM759 476h1v1h-1zM0 477h1v1h-1zM299 477h1v1h-1zM599 477h1v1h-1zM759 477h1v1h-1zM0 478h1v1h-1zM299 478h1v1h-1zM599 478h1v1h-1zM759 478h1v1h-1zM0 479h1v1h-1zM299 479h1v1h-1zM599 479h1v1h-1zM759 479h1v1h-1zM0 480h1v1h-1zM299 480h1v1h-1zM599 480h1v1h-1zM759 480h1v1h-1zM0 481h1v1h-1zM299 481h1v1h-1zM599 481h1v1h-1zM759 481h1v1h-1zM0 482h1v1h-1zM299 482h1v1h-1zM599 482h1v1h-1zM759 482h1v1h-1zM0 483h1v1h-1zM299 483h1v1h-1zM599 483h1v1h-1zM759 483h1v1h-1zM0 484h1v1h-1zM299 484h1v1h-1zM599 484h1v1h-1zM759 484h1v1h-1zM0 485h1v1h-1zM299 485h1v1h-1zM599 485h1v1h-1zM759 485h1v1h-1zM0 486h1v1h-1zM299 486h1v1h-1zM599 486h1v1h-1zM759 486h1v1h-1zM0 487h1v1h-1zM299 487h1v1h-1zM599 487h1v1h-1zM759 487h1v1h-1zM0 488h1v1h-1zM299 488h1v1h-1zM599 488h1v1h-1zM759 488h1v1h-1zM0 489h1v1h-1zM299 489h1v1h-1zM599 489h1v1h-1zM759 489h1v1h-1zM0 490h1v1h-1zM299 490h1v1h-1zM599 490h1v1h-1zM759 490h1v1h-1zM0 491h1v1h-1zM299 491h1v1h-1zM599 491h1v1h-1zM759 491h1v1h-1zM0 492h1v1h-1zM299 492h1v1h-1zM599 492h1v1h-1zM759 492h1v1h-1zM0 493h1v1h-1zM599 493h1v1h-1zM759 493h1v1h-1zM0 494h1v1h-1zM599 494h1v1h-1zM759 494h1v1h-1zM0 495h1v1h-1zM599 495h1v1h-1zM759 495h1v1h-1zM0 496h1v1h-1zM599 496h1v1h-1zM759 496h1v1h-1zM0 497h1v1h-1zM599 497h1v1h-1zM759 497h1v1h-1zM0 498h1v1h-1zM599 498h1v1h-1zM759 498h1v1h-1zM0 499h1v1h-1zM599 499h1v1h-1zM759 499h1v1h-1zM0 500h1v1h-1zM599 500h1v1h-1zM759 500h1v1h-1zM0 501h1v1h-1zM599 501h1v1h-1zM759 501h1v1h-1zM0 502h1v1h-1zM599 502h1v1h-1zM759 502h1v1h-1zM0 503h1v1h-1zM599 503h1v1h-1zM759 503h1v1h-1zM0 504h1v1h-1zM599 504h1v1h-1zM759 504h1v1h-1zM0 505h1v1h-1zM599 505h1v1h-1zM759 505h1v1h-1zM0 506h1v1h-1zM599 506h1v1h-1zM759 506h1v1h-1zM0 507h1v1h-1zM599 507h1v1h-1zM759 507h1v1h-1zM0 508h1v1h-1zM599 508h1v1h-1zM759 508h1v1h-1zM0 509h1v1h-1zM599 509h1v1h-1zM759 509h1v1h-1zM0 510h1v1h-1zM599 510h1v1h-1zM759 510h1v1h-1zM0 511h1v1h-1zM599 511h1v1h-1zM759 511h1v1h-1zM0 512h1v1h-1zM599 512h1v1h-1zM759 512h1v1h-1zM0 513h1v1h-1zM599 513h1v1h-1zM759 513h1v1h-1zM0 514h1v1h-1zM599 514h1v1h-1zM759 514h1v1h-1zM0 515h1v1h-1zM599 515h1v1h-1zM759 515h1v1h-1zM0 516h1v1h-1zM599 516h1v1h-1zM759 516h1v1h-1zM0 517h1v1h-1zM599 517h1v1h-1zM759 517h1v1h-1zM0 518h1v1h-1zM599 518h1v1h-1zM759 518h1v1h-1zM0 519h1v1h-1zM599 519h1v1h-1zM759 519h1v1h-1zM0 520h1v1h-1zM599 520h1v1h-1zM759 520h1v1h-1zM0 521h1v1h-1zM599 521h1v1h-1zM759 521h1v1h-1zM0 522h1v1h-1zM599 522h1v1h-1zM759 522h1v1h-1zM0 523h1v1h-1zM599 523h1v1h-1zM759 523h1v1h-1zM0 524h1v1h-1zM299 524h1v1h-1zM599 524h1v1h-1zM759 524h1v1h-1zM0 525h1v1h-1zM299 525h1v1h-1zM599 525h1v1h-1zM759 525h1v1h-1zM0 526h1v1h-1zM299 526h1v1h-1zM599 526h1v1h-1zM759 526h1v1h-1zM0 527h1v1h-1zM299 527h1v1h-1zM599 527h1v1h-1zM759 527h1v1h-1zM0 528h1v1h-1zM299 528h1v1h-1zM599 528h1v1h-1zM759 528h1v1h-1zM0 529h1v1h-1zM299 529h1v1h-1zM599 529h1v1h-1zM759 529h1v1h-1zM0 530h1v1h-1zM299 530h1v1h-1zM599 530h1v1h-1zM759 530h1v1h-1zM0 531h1v1h-1zM299 531h1v1h-1zM599 531h1v1h-1zM759 531h1v1h-1zM0 532h1v1h-1zM299 532h1v1h-1zM599 532h1v1h-1zM759 532h1v1h-1zM0 533h1v1h-1zM299 533h1v1h-1zM599 533h1v1h-1zM759 533h1v1h-1zM0 534h1v1h-1zM299 534h1v1h-1zM599 534h1v1h-1zM759 534h1v1h-1zM0 535h1v1h-1zM299 535h1v1h-1zM599 535h1v1h-1zM759 535h1v1h-1zM0 536h1v1h-1zM299 536h1v1h-1zM599 536h1v1h-1zM759 536h1v1h-1zM0 537h1v1h-1zM299 537h1v1h-1zM599 537h1v1h-1zM759 537h1v1h-1zM0 538h1v1h-1zM599 538h1v1h-1zM759 538h1v1h-1zM0 539h1v1h-1zM299 539h1v1h-1zM599 539h1v1h-1zM759 539h1v1h-1zM0 540h1v1h-1zM299 540h1v1h-1zM599 540h1v1h-1zM759 540h1v1h-1zM0 541h1v1h-1zM299 541h1v1h-1zM599 541h1v1h-1zM759 541h1v1h-1zM0 542h1v1h-1zM299 542h1v1h-1zM599 542h1v1h-1zM759 542h1v1h-1zM0 543h1v1h-1zM299 543h1v1h-1zM599 543h1v1h-1zM759 543h1v1h-1zM0 544h1v1h-1zM299 544h1v1h-1zM599 544h1v1h-1zM759 544h1v1h-1zM0 545h1v1h-1zM299 545h1v1h-1zM599 545h1v1h-1zM759 545h1v1h-1zM0 546h1v1h-1zM299 546h1v1h-1zM599 546h1v1h-1zM759 546h1v1h-1zM0 547h1v1h-1zM299 547h1v1h-1zM599 547h1v1h-1zM759 547h1v1h-1zM0 548h1v1h-1zM299 548h1v1h-1zM599 548h1v1h-1zM759 548h1v1h-1zM0 549h1v1h-1zM299 549h1v1h-1zM599 549h1v1h-1zM759 549h1v1h-1zM0 550h1v1h-1zM299 550h1v1h-1zM599 550h1v1h-1zM759 550h1v1h-1zM0 551h1v1h-1zM299 551h1v1h-1zM599 551h1v1h-1zM759 551h1v1h-1zM0 552h1v1h-1zM299 552h1v1h-1zM599 552h1v1h-1zM759 552h1v1h-1zM0 553h1v1h-1zM299 553h1v1h-1zM599 553h1v1h-1zM759 553h1v1h-1zM0 554h1v1h-1zM299 554h1v1h-1zM599 554h1v1h-1zM759 554h1v1h-1zM0 555h1v1h-1zM299 555h1v1h-1zM599 555h1v1h-1zM759 555h1v1h-1zM0 556h1v1h-1zM299 556h1v1h-1zM599 556h1v1h-1zM759 556h1v1h-1zM0 557h1v1h-1zM299 557h1v1h-1zM599 557h1v1h-1zM759 557h1v1h-1zM0 558h1v1h-1zM299 558h1v1h-1zM599 558h1v1h-1zM759 558h1v1h-1zM0 559h1v1h-1zM299 559h1v1h-1zM599 559h1v1h-1zM759 559h1v1h-1zM0 560h1v1h-1zM299 560h1v1h-1zM599 560h1v1h-1zM759 560h1v1h-1zM0 561h1v1h-1zM299 561h1v1h-1zM599 561h1v1h-1zM759 561h1v1h-1zM0 562h1v1h-1zM299 562h1v1h-1zM599 562h1v1h-1zM759 562h1v1h-1zM0 563h1v1h-1zM299 563h1v1h-1zM599 563h1v1h-1zM759 563h1v1h-1zM0 564h1v1h-1zM299 564h1v1h-1zM599 564h1v1h-1zM759 564h1v1h-1zM0 565h1v1h-1zM299 565h1v1h-1zM599 565h1v1h-1zM759 565h1v1h-1zM0 566h1v1h-1zM299 566h1v1h-1zM599 566h1v1h-1zM759 566h1v1h-1zM0 567h1v1h-1zM299 567h1v1h-1zM599 567h1v1h-1zM759 567h1v1h-1zM0 568h1v1h-1zM299 568h1v1h-1zM599 568h1v1h-1zM759 568h1v1h-1zM0 569h1v1h-1zM299 569h1v1h-1zM599 569h1v1h-1zM759 569h1v1h-1zM0 570h1v1h-1zM299 570h1v1h-1zM599 570h1v1h-1zM759 570h1v1h-1zM0 571h1v1h-1zM299 571h1v1h-1zM599 571h1v1h-1zM759 571h1v1h-1zM0 572h1v1h-1zM299 572h1v1h-1zM599 572h1v1h-1zM759 572h1v1h-1zM0 573h1v1h-1zM299 573h1v1h-1zM599 573h1v1h-1zM759 573h1v1h-1zM0 574h1v1h-1zM299 574h1v1h-1zM599 574h1v1h-1zM759 574h1v1h-1zM0 575h1v1h-1zM299 575h1v1h-1zM599 575h1v1h-1zM759 575h1v1h-1zM0 576h1v1h-1zM299 576h1v1h-1zM599 576h1v1h-1zM759 576h1v1h-1zM0 577h1v1h-1zM299 577h1v1h-1zM599 577h1v1h-1zM759 577h1v1h-1zM0 578h1v1h-1zM299 578h1v1h-1zM599 578h1v1h-1zM759 578h1v1h-1zM0 579h1v1h-1zM299 579h1v1h-1zM599 579h1v1h-1zM759 579h1v1h-1zM0 580h1v1h-1zM299 580h1v1h-1zM599 580h1v1h-1zM759 580h1v1h-1zM0 581h1v1h-1zM299 581h1v1h-1zM599 581h1v1h-1zM759 581h1v1h-1zM0 582h1v1h-1zM299 582h1v1h-1zM599 582h1v1h-1zM759 582h1v1h-1zM0 583h1v1h-1zM599 583h1v1h-1zM759 583h1v1h-1zM0 584h1v1h-1zM299 584h1v1h-1zM599 584h1v1h-1zM759 584h1v1h-1zM0 585h1v1h-1zM299 585h1v1h-1zM599 585h1v1h-1zM759 585h1v1h-1zM0 586h1v1h-1zM299 586h1v1h-1zM599 586h1v1h-1zM759 586h1v1h-1zM0 587h1v1h-1zM299 587h1v1h-1zM599 587h1v1h-1zM759 587h1v1h-1zM0 588h1v1h-1zM299 588h1v1h-1zM599 588h1v1h-1zM759 588h1v1h-1zM0 589h1v1h-1zM299 589h1v1h-1zM599 589h1v1h-1zM759 589h1v1h-1zM0 590h1v1h-1zM299 590h1v1h-1zM599 590h1v1h-1zM759 590h1v1h-1zM0 591h1v1h-1zM299 591h1v1h-1zM599 591h1v1h-1zM759 591h1v1h-1zM0 592h1v1h-1zM299 592h1v1h-1zM599 592h1v1h-1zM759 592h1v1h-1zM0 593h1v1h-1zM299 593h1v1h-1zM599 593h1v1h-1zM759 593h1v1h-1zM0 594h1v1h-1zM299 594h1v1h-1zM599 594h1v1h-1zM759 594h1v1h-1zM0 595h1v1h-1zM299 595h1v1h-1zM599 595h1v1h-1zM759 595h1v1h-1zM0 596h1v1h-1zM299 596h1v1h-1zM599 596h1v1h-1zM759 596h1v1h-1zM0 597h1v1h-1zM599 597h1v1h-1zM759 597h1v1h-1zM0 598h1v1h-1zM599 598h1v1h-1zM759 598h1v1h-1zM0 599h760v1h-760z"/>
<path fill="#ffffff" d="M285 15h28v1h-28zM275 16h10v1h-10zM302 16h1v1h-1zM313 16h10v1h-10zM265 17h10v1h-10zM302 17h1v1h-1zM323 17h10v1h-10zM255 18h10v1h-10zM302 18h1v1h-1zM333 18h10v1h-10zM248 19h7v1h-7zM302 19h1v1h-1zM343 19h8v1h-8zM243 20h5v1h-5zM302 20h1v1h-1zM351 20h5v1h-5zM238 21h5v1h-5zM302 21h1v1h-1zM356 21h5v1h-5zM234 22h4v1h-4zM302 22h1v1h-1zM361 22h4v1h-4zM230 23h4v1h-4zM302 23h1v1h-1zM365 23h4v1h-4zM226 24h4v1h-4zM302 24h1v1h-1zM369 24h3v1h-3zM223 25h3v1h-3zM302 25h1v1h-1zM372 25h4v1h-4zM220 26h3v1h-3zM302 26h1v1h-1zM376 26h3v1h-3zM217 27h3v1h-3zM302 27h1v1h-1zM379 27h3v1h-3zM214 28h3v1h-3zM302 28h1v1h-1zM382 28h3v1h-3zM211 29h3v1h-3zM302 29h1v1h-1zM385 29h3v1h-3zM207 30h4v1h-4zM302 30h1v1h-1zM388 30h3v1h-3zM204 31h3v1h-3zM302 31h1v1h-1zM391 31h4v1h-4zM201 32h3v1h-3zM302 32h1v1h-1zM395 32h3v1h-3zM199 33h2v1h-2zM302 33h1v1h-1zM398 33h2v1h-2zM197 34h2v1h-2zM302 34h1v1h-1zM400 34h2v1h-2zM195 35h2v1h-2zM302 35h1v1h-1zM402 35h2v1h-2zM192 36h3v1h-3zM302 36h1v1h-1zM404 36h3v1h-3zM190 37h2v1h-2zM302 37h1v1h-1zM407 37h2v1h-2zM188 38h2v1h-2zM301 38h1v1h-1zM409 38h2v1h-2zM186 39h2v1h-2zM301 39h1v1h-1zM411 39h2v1h-2zM183 40h3v1h-3zM301 40h1v1h-1zM413 40h3v1h-3zM181 41h2v1h-2zM301 41h1v1h-1zM416 41h2v1h-2zM179 42h2v1h-2zM301 42h1v1h-1zM418 42h2v1h-2zM177 43h2v1h-2zM301 43h1v1h-1zM420 43h2v1h-2zM174 44h3v1h-3zM301 44h1v1h-1zM422 44h3v1h-3zM172 45h2v1h-2zM301 45h1v1h-1zM425 45h2v1h-2zM170 46h2v1h-2zM301 46h1v1h-1zM427 46h2v1h-2zM168 47h2v1h-2zM301 47h1v1h-1zM429 47h2v1h-2zM166 48h2v1h-2zM301 48h1v1h-1zM431 48h2v1h-2zM164 49h2v1h-2zM301 49h1v1h-1zM433 49h2v1h-2zM162 50h2v1h-2zM301 50h1v1h-1zM435 50h2v1h-2zM160 51h2v1h-2zM301 51h1v1h-1zM437 51h2v1h-2zM158 52h3v1h-3zM301 52h1v1h-1zM439 52h2v1h-2zM157 53h1v1h-1zM161 53h1v1h-1zM301 53h1v1h-1zM441 53h1v1h-1zM155 54h2v1h-2zM161 54h1v1h-1zM301 54h1v1h-1zM442 54h2v1h-2zM153 55h2v1h-2zM162 55h1v1h-1zM301 55h1v1h-1zM443 55h2v1h-2zM152 56h1v1h-1zM162 56h1v1h-1zM301 56h1v1h-1zM442 56h1v1h-1zM445 56h2v1h-2zM150 57h2v1h-2zM163 57h1v1h-1zM301 57h1v1h-1zM442 57h1v1h-1zM447 57h2v1h-2zM149 58h1v1h-1zM163 58h1v1h-1zM301 58h1v1h-1zM441 58h1v1h-1zM449 58h1v1h-1zM147 59h2v1h-2zM164 59h1v1h-1zM301 59h1v1h-1zM441 59h1v1h-1zM450 59h2v1h-2zM146 60h1v1h-1zM165 60h1v1h-1zM287 60h24v1h-24zM440 60h1v1h-1zM452 60h1v1h-1zM144 61h2v1h-2zM165 61h1v1h-1zM270 61h17v1h-17zM301 61h1v1h-1zM311 61h17v1h-17zM440 61h1v1h-1zM453 61h2v1h-2zM143 62h1v1h-1zM166 62h1v1h-1zM264 62h6v1h-6zM281 62h1v1h-1zM301 62h1v1h-1zM322 62h1v1h-1zM328 62h6v1h-6zM439 62h1v1h-1zM455 62h1v1h-1zM141 63h2v1h-2zM166 63h1v1h-1zM260 63h4v1h-4zM281 63h1v1h-1zM301 63h1v1h-1zM322 63h1v1h-1zM334 63h4v1h-4zM438 63h1v1h-1zM456 63h2v1h-2zM140 64h1v1h-1zM167 64h1v1h-1zM254 64h6v1h-6zM261 64h1v1h-1zM281 64h1v1h-1zM301 64h1v1h-1zM322 64h1v1h-1zM338 64h6v1h-6zM438 64h1v1h-1zM458 64h1v1h-1zM138 65h2v1h-2zM168 65h1v1h-1zM248 65h6v1h-6zM261 65h1v1h-1zM281 65h1v1h-1zM301 65h1v1h-1zM322 65h1v1h-1zM343 65h7v1h-7zM437 65h1v1h-1zM459 65h2v1h-2zM136 66h2v1h-2zM168 66h1v1h-1zM244 66h4v1h-4zM261 66h1v1h-1zM281 66h1v1h-1zM301 66h1v1h-1zM322 66h1v1h-1zM343 66h1v1h-1zM350 66h4v1h-4zM437 66h1v1h-1zM461 66h1v1h-1zM135 67h1v1h-1zM169 67h1v1h-1zM240 67h4v1h-4zM261 67h1v1h-1zM281 67h1v1h-1zM301 67h1v1h-1zM322 67h1v1h-1zM343 67h1v1h-1zM354 67h5v1h-5zM436 67h1v1h-1zM462 67h2v1h-2zM133 68h2v1h-2zM169 68h1v1h-1zM236 68h5v1h-5zM262 68h1v1h-1zM282 68h1v1h-1zM301 68h1v1h-1zM322 68h1v1h-1zM342 68h1v1h-1zM359 68h4v1h-4zM435 68h1v1h-1zM464 68h2v1h-2zM132 69h1v1h-1zM170 69h1v1h-1zM232 69h4v1h-4zM240 69h1v1h-1zM262 69h1v1h-1zM282 69h1v1h-1zM301 69h1v1h-1zM321 69h1v1h-1zM342 69h1v1h-1zM363 69h4v1h-4zM435 69h1v1h-1zM466 69h1v1h-1zM130 70h2v1h-2zM170 70h1v1h-1zM229 70h3v1h-3zM241 70h1v1h-1zM262 70h1v1h-1zM282 70h1v1h-1zM301 70h1v1h-1zM321 70h1v1h-1zM342 70h1v1h-1zM363 70h1v1h-1zM367 70h2v1h-2zM434 70h1v1h-1zM467 70h1v1h-1zM129 71h1v1h-1zM171 71h1v1h-1zM227 71h2v1h-2zM241 71h1v1h-1zM262 71h1v1h-1zM282 71h1v1h-1zM301 71h1v1h-1zM321 71h1v1h-1zM342 71h1v1h-1zM362 71h1v1h-1zM369 71h3v1h-3zM434 71h1v1h-1zM468 71h2v1h-2zM128 72h1v1h-1zM172 72h1v1h-1zM224 72h3v1h-3zM241 72h1v1h-1zM262 72h1v1h-1zM282 72h1v1h-1zM301 72h1v1h-1zM321 72h1v1h-1zM341 72h1v1h-1zM362 72h1v1h-1zM372 72h3v1h-3zM433 72h1v1h-1zM470 72h1v1h-1zM126 73h2v1h-2zM172 73h1v1h-1zM220 73h4v1h-4zM242 73h1v1h-1zM262 73h1v1h-1zM282 73h1v1h-1zM301 73h1v1h-1zM321 73h1v1h-1zM341 73h1v1h-1zM362 73h1v1h-1zM375 73h4v1h-4zM433 73h1v1h-1zM471 73h1v1h-1zM125 74h1v1h-1zM173 74h1v1h-1zM217 74h4v1h-4zM242 74h1v1h-1zM263 74h1v1h-1zM282 74h1v1h-1zM301 74h1v1h-1zM321 74h1v1h-1zM341 74h1v1h-1zM362 74h1v1h-1zM379 74h3v1h-3zM432 74h1v1h-1zM472 74h2v1h-2zM124 75h1v1h-1zM173 75h1v1h-1zM214 75h3v1h-3zM220 75h1v1h-1zM242 75h1v1h-1zM263 75h1v1h-1zM282 75h1v1h-1zM288 75h22v1h-22zM321 75h1v1h-1zM341 75h1v1h-1zM361 75h1v1h-1zM382 75h2v1h-2zM431 75h1v1h-1zM474 75h1v1h-1zM123 76h1v1h-1zM174 76h1v1h-1zM212 76h2v1h-2zM221 76h1v1h-1zM242 76h1v1h-1zM263 76h1v1h-1zM272 76h16v1h-16zM299 76h1v1h-1zM310 76h16v1h-16zM340 76h1v1h-1zM361 76h1v1h-1zM383 76h4v1h-4zM431 76h1v1h-1zM475 76h1v1h-1zM122 77h1v1h-1zM174 77h1v1h-1zM209 77h3v1h-3zM221 77h1v1h-1zM243 77h1v1h-1zM263 77h1v1h-1zM265 77h7v1h-7zM299 77h1v1h-1zM326 77h8v1h-8zM340 77h1v1h-1zM361 77h1v1h-1zM383 77h1v1h-1zM387 77h2v1h-2zM430 77h1v1h-1zM476 77h1v1h-1zM121 78h1v1h-1zM175 78h1v1h-1zM207 78h2v1h-2zM222 78h1v1h-1zM243 78h1v1h-1zM259 78h6v1h-6zM299 78h1v1h-1zM334 78h5v1h-5zM340 78h1v1h-1zM360 78h1v1h-1zM382 78h1v1h-1zM389 78h2v1h-2zM430 78h1v1h-1zM477 78h1v1h-1zM120 79h1v1h-1zM176 79h1v1h-1zM205 79h2v1h-2zM222 79h1v1h-1zM243 79h1v1h-1zM255 79h4v1h-4zM299 79h1v1h-1zM339 79h4v1h-4zM360 79h1v1h-1zM382 79h1v1h-1zM391 79h2v1h-2zM429 79h1v1h-1zM478 79h1v1h-1zM119 80h1v1h-1zM176 80h1v1h-1zM203 80h2v1h-2zM222 80h1v1h-1zM244 80h1v1h-1zM251 80h4v1h-4zM299 80h1v1h-1zM343 80h4v1h-4zM360 80h1v1h-1zM381 80h1v1h-1zM393 80h2v1h-2zM429 80h1v1h-1zM479 80h1v1h-1zM118 81h1v1h-1zM177 81h1v1h-1zM201 81h2v1h-2zM223 81h1v1h-1zM244 81h1v1h-1zM247 81h4v1h-4zM299 81h1v1h-1zM347 81h4v1h-4zM360 81h1v1h-1zM381 81h1v1h-1zM395 81h3v1h-3zM428 81h1v1h-1zM480 81h1v1h-1zM117 82h1v1h-1zM177 82h1v1h-1zM199 82h3v1h-3zM223 82h1v1h-1zM244 82h3v1h-3zM299 82h1v1h-1zM351 82h4v1h-4zM359 82h1v1h-1zM381 82h1v1h-1zM398 82h2v1h-2zM427 82h1v1h-1zM481 82h1v1h-1zM115 83h2v1h-2zM178 83h1v1h-1zM197 83h2v1h-2zM202 83h1v1h-1zM223 83h1v1h-1zM240 83h4v1h-4zM299 83h1v1h-1zM355 83h5v1h-5zM380 83h1v1h-1zM400 83h2v1h-2zM427 83h1v1h-1zM482 83h1v1h-1zM114 84h1v1h-1zM179 84h1v1h-1zM194 84h3v1h-3zM202 84h1v1h-1zM224 84h1v1h-1zM236 84h4v1h-4zM299 84h1v1h-1zM359 84h3v1h-3zM380 84h1v1h-1zM402 84h2v1h-2zM426 84h1v1h-1zM483 84h2v1h-2zM113 85h1v1h-1zM179 85h1v1h-1zM192 85h2v1h-2zM203 85h1v1h-1zM224 85h1v1h-1zM232 85h4v1h-4zM299 85h1v1h-1zM362 85h4v1h-4zM380 85h1v1h-1zM401 85h1v1h-1zM404 85h2v1h-2zM426 85h1v1h-1zM485 85h1v1h-1zM111 86h2v1h-2zM180 86h1v1h-1zM190 86h2v1h-2zM203 86h1v1h-1zM225 86h1v1h-1zM229 86h3v1h-3zM299 86h1v1h-1zM366 86h4v1h-4zM379 86h1v1h-1zM401 86h1v1h-1zM406 86h2v1h-2zM425 86h1v1h-1zM486 86h1v1h-1zM110 87h1v1h-1zM180 87h1v1h-1zM188 87h2v1h-2zM204 87h1v1h-1zM225 87h1v1h-1zM227 87h2v1h-2zM299 87h1v1h-1zM370 87h2v1h-2zM379 87h1v1h-1zM400 87h1v1h-1zM408 87h2v1h-2zM424 87h1v1h-1zM487 87h2v1h-2zM109 88h1v1h-1zM181 88h1v1h-1zM187 88h1v1h-1zM204 88h1v1h-1zM225 88h2v1h-2zM299 88h1v1h-1zM372 88h2v1h-2zM378 88h1v1h-1zM400 88h1v1h-1zM410 88h2v1h-2zM424 88h1v1h-1zM489 88h1v1h-1zM108 89h1v1h-1zM181 89h1v1h-1zM185 89h2v1h-2zM205 89h1v1h-1zM221 89h4v1h-4zM299 89h1v1h-1zM374 89h3v1h-3zM378 89h1v1h-1zM399 89h1v1h-1zM412 89h2v1h-2zM423 89h1v1h-1zM490 89h1v1h-1zM107 90h1v1h-1zM182 90h3v1h-3zM205 90h1v1h-1zM217 90h4v1h-4zM299 90h1v1h-1zM377 90h4v1h-4zM399 90h1v1h-1zM414 90h2v1h-2zM423 90h1v1h-1zM491 90h1v1h-1zM106 91h1v1h-1zM181 91h2v1h-2zM206 91h1v1h-1zM214 91h3v1h-3zM299 91h1v1h-1zM381 91h4v1h-4zM398 91h1v1h-1zM416 91h2v1h-2zM422 91h1v1h-1zM492 91h1v1h-1zM105 92h1v1h-1zM180 92h1v1h-1zM183 92h1v1h-1zM206 92h1v1h-1zM212 92h2v1h-2zM299 92h1v1h-1zM385 92h2v1h-2zM398 92h1v1h-1zM418 92h1v1h-1zM422 92h1v1h-1zM493 92h1v1h-1zM104 93h1v1h-1zM178 93h2v1h-2zM183 93h1v1h-1zM207 93h1v1h-1zM210 93h2v1h-2zM299 93h1v1h-1zM387 93h2v1h-2zM397 93h1v1h-1zM419 93h3v1h-3zM494 93h1v1h-1zM103 94h1v1h-1zM176 94h2v1h-2zM184 94h1v1h-1zM207 94h3v1h-3zM299 94h1v1h-1zM389 94h2v1h-2zM397 94h1v1h-1zM420 94h3v1h-3zM495 94h1v1h-1zM102 95h1v1h-1zM174 95h2v1h-2zM184 95h1v1h-1zM206 95h2v1h-2zM299 95h1v1h-1zM391 95h2v1h-2zM396 95h1v1h-1zM419 95h1v1h-1zM423 95h2v1h-2zM496 95h1v1h-1zM101 96h1v1h-1zM173 96h1v1h-1zM185 96h1v1h-1zM204 96h2v1h-2zM299 96h1v1h-1zM393 96h2v1h-2zM396 96h1v1h-1zM419 96h1v1h-1zM425 96h1v1h-1zM497 96h1v1h-1zM100 97h1v1h-1zM171 97h2v1h-2zM186 97h1v1h-1zM202 97h2v1h-2zM299 97h1v1h-1zM395 97h2v1h-2zM418 97h1v1h-1zM426 97h2v1h-2zM498 97h1v1h-1zM99 98h1v1h-1zM170 98h1v1h-1zM186 98h1v1h-1zM200 98h2v1h-2zM299 98h1v1h-1zM397 98h2v1h-2zM418 98h1v1h-1zM428 98h1v1h-1zM499 98h1v1h-1zM98 99h1v1h-1zM169 99h1v1h-1zM187 99h1v1h-1zM198 99h2v1h-2zM299 99h1v1h-1zM399 99h2v1h-2zM417 99h1v1h-1zM429 99h1v1h-1zM500 99h1v1h-1zM97 100h1v1h-1zM167 100h2v1h-2zM187 100h1v1h-1zM196 100h2v1h-2zM299 100h1v1h-1zM401 100h2v1h-2zM416 100h1v1h-1zM430 100h2v1h-2zM501 100h1v1h-1zM96 101h1v1h-1zM166 101h1v1h-1zM188 101h1v1h-1zM194 101h2v1h-2zM299 101h1v1h-1zM403 101h2v1h-2zM416 101h1v1h-1zM432 101h1v1h-1zM502 101h1v1h-1zM95 102h1v1h-1zM164 102h2v1h-2zM188 102h1v1h-1zM192 102h2v1h-2zM299 102h1v1h-1zM405 102h2v1h-2zM415 102h1v1h-1zM433 102h2v1h-2zM503 102h1v1h-1zM94 103h1v1h-1zM163 103h1v1h-1zM166 103h1v1h-1zM189 103h3v1h-3zM299 103h1v1h-1zM407 103h2v1h-2zM415 103h1v1h-1zM435 103h1v1h-1zM504 103h1v1h-1zM93 104h1v1h-1zM162 104h1v1h-1zM166 104h1v1h-1zM188 104h2v1h-2zM299 104h1v1h-1zM409 104h2v1h-2zM414 104h1v1h-1zM436 104h1v1h-1zM505 104h1v1h-1zM92 105h1v1h-1zM160 105h2v1h-2zM167 105h1v1h-1zM187 105h1v1h-1zM283 105h33v1h-33zM411 105h1v1h-1zM414 105h1v1h-1zM437 105h2v1h-2zM506 105h1v1h-1zM91 106h1v1h-1zM159 106h1v1h-1zM168 106h1v1h-1zM185 106h2v1h-2zM276 106h7v1h-7zM316 106h7v1h-7zM412 106h2v1h-2zM437 106h1v1h-1zM439 106h1v1h-1zM507 106h1v1h-1zM90 107h1v1h-1zM157 107h2v1h-2zM168 107h1v1h-1zM184 107h1v1h-1zM269 107h7v1h-7zM323 107h6v1h-6zM414 107h1v1h-1zM437 107h1v1h-1zM440 107h2v1h-2zM508 107h1v1h-1zM89 108h1v1h-1zM156 108h1v1h-1zM169 108h1v1h-1zM182 108h2v1h-2zM263 108h6v1h-6zM329 108h7v1h-7zM415 108h2v1h-2zM436 108h1v1h-1zM442 108h1v1h-1zM509 108h1v1h-1zM88 109h1v1h-1zM155 109h1v1h-1zM169 109h1v1h-1zM181 109h1v1h-1zM258 109h5v1h-5zM336 109h5v1h-5zM417 109h1v1h-1zM435 109h1v1h-1zM443 109h1v1h-1zM510 109h1v1h-1zM87 110h1v1h-1zM153 110h2v1h-2zM170 110h1v1h-1zM179 110h2v1h-2zM254 110h4v1h-4zM341 110h4v1h-4zM418 110h2v1h-2zM434 110h1v1h-1zM444 110h2v1h-2zM511 110h1v1h-1zM86 111h1v1h-1zM152 111h1v1h-1zM171 111h1v1h-1zM177 111h2v1h-2zM251 111h3v1h-3zM345 111h3v1h-3zM420 111h2v1h-2zM434 111h1v1h-1zM446 111h1v1h-1zM512 111h1v1h-1zM86 112h1v1h-1zM151 112h1v1h-1zM171 112h1v1h-1zM175 112h2v1h-2zM248 112h3v1h-3zM348 112h3v1h-3zM422 112h2v1h-2zM433 112h1v1h-1zM447 112h1v1h-1zM512 112h1v1h-1zM85 113h1v1h-1zM149 113h2v1h-2zM172 113h1v1h-1zM174 113h1v1h-1zM176 113h1v1h-1zM245 113h3v1h-3zM351 113h3v1h-3zM421 113h1v1h-1zM424 113h1v1h-1zM432 113h1v1h-1zM448 113h1v1h-1zM513 113h1v1h-1zM84 114h1v1h-1zM148 114h1v1h-1zM173 114h1v1h-1zM177 114h1v1h-1zM241 114h4v1h-4zM354 114h4v1h-4zM421 114h1v1h-1zM425 114h1v1h-1zM431 114h1v1h-1zM449 114h2v1h-2zM514 114h1v1h-1zM83 115h1v1h-1zM147 115h2v1h-2zM171 115h2v1h-2zM177 115h1v1h-1zM238 115h3v1h-3zM358 115h3v1h-3zM420 115h1v1h-1zM426 115h1v1h-1zM431 115h1v1h-1zM451 115h1v1h-1zM515 115h1v1h-1zM83 116h1v1h-1zM146 116h1v1h-1zM149 116h1v1h-1zM170 116h1v1h-1zM178 116h1v1h-1zM235 116h3v1h-3zM361 116h3v1h-3zM419 116h1v1h-1zM427 116h2v1h-2zM430 116h1v1h-1zM452 116h1v1h-1zM515 116h1v1h-1zM82 117h1v1h-1zM145 117h1v1h-1zM150 117h1v1h-1zM169 117h1v1h-1zM179 117h1v1h-1zM232 117h3v1h-3zM364 117h3v1h-3zM419 117h1v1h-1zM429 117h1v1h-1zM453 117h1v1h-1zM516 117h1v1h-1zM81 118h1v1h-1zM144 118h1v1h-1zM151 118h1v1h-1zM168 118h1v1h-1zM179 118h1v1h-1zM229 118h3v1h-3zM367 118h3v1h-3zM418 118h1v1h-1zM430 118h1v1h-1zM454 118h1v1h-1zM517 118h1v1h-1zM80 119h1v1h-1zM142 119h2v1h-2zM152 119h1v1h-1zM166 119h2v1h-2zM180 119h1v1h-1zM226 119h3v1h-3zM370 119h3v1h-3zM417 119h1v1h-1zM431 119h2v1h-2zM453 119h1v1h-1zM455 119h2v1h-2zM518 119h1v1h-1zM79 120h1v1h-1zM141 120h1v1h-1zM153 120h1v1h-1zM165 120h1v1h-1zM181 120h1v1h-1zM224 120h2v1h-2zM373 120h2v1h-2zM417 120h1v1h-1zM433 120h1v1h-1zM452 120h1v1h-1zM457 120h1v1h-1zM519 120h1v1h-1zM78 121h1v1h-1zM140 121h1v1h-1zM153 121h1v1h-1zM164 121h1v1h-1zM181 121h1v1h-1zM222 121h2v1h-2zM375 121h2v1h-2zM416 121h1v1h-1zM434 121h1v1h-1zM452 121h1v1h-1zM458 121h1v1h-1zM520 121h1v1h-1zM77 122h1v1h-1zM139 122h1v1h-1zM154 122h1v1h-1zM162 122h2v1h-2zM182 122h1v1h-1zM219 122h3v1h-3zM377 122h2v1h-2zM415 122h1v1h-1zM435 122h2v1h-2zM451 122h1v1h-1zM459 122h1v1h-1zM521 122h1v1h-1zM76 123h1v1h-1zM138 123h1v1h-1zM155 123h1v1h-1zM161 123h1v1h-1zM183 123h1v1h-1zM217 123h2v1h-2zM379 123h2v1h-2zM415 123h1v1h-1zM437 123h1v1h-1zM450 123h1v1h-1zM460 123h1v1h-1zM522 123h1v1h-1zM75 124h1v1h-1zM136 124h2v1h-2zM156 124h1v1h-1zM160 124h1v1h-1zM183 124h1v1h-1zM215 124h2v1h-2zM381 124h2v1h-2zM414 124h1v1h-1zM438 124h1v1h-1zM449 124h1v1h-1zM461 124h1v1h-1zM523 124h1v1h-1zM74 125h1v1h-1zM135 125h1v1h-1zM157 125h3v1h-3zM184 125h1v1h-1zM213 125h2v1h-2zM383 125h2v1h-2zM413 125h1v1h-1zM439 125h1v1h-1zM448 125h1v1h-1zM462 125h2v1h-2zM524 125h1v1h-1zM73 126h1v1h-1zM134 126h1v1h-1zM157 126h1v1h-1zM185 126h1v1h-1zM211 126h2v1h-2zM385 126h2v1h-2zM413 126h1v1h-1zM440 126h2v1h-2zM447 126h1v1h-1zM464 126h1v1h-1zM525 126h1v1h-1zM73 127h1v1h-1zM133 127h1v1h-1zM156 127h1v1h-1zM185 127h1v1h-1zM209 127h2v1h-2zM387 127h2v1h-2zM412 127h1v1h-1zM442 127h1v1h-1zM447 127h1v1h-1zM465 127h1v1h-1zM525 127h1v1h-1zM72 128h1v1h-1zM132 128h1v1h-1zM155 128h1v1h-1zM186 128h1v1h-1zM207 128h2v1h-2zM389 128h2v1h-2zM411 128h1v1h-1zM443 128h1v1h-1zM446 128h1v1h-1zM466 128h1v1h-1zM526 128h1v1h-1zM71 129h1v1h-1zM131 129h1v1h-1zM133 129h1v1h-1zM154 129h1v1h-1zM187 129h1v1h-1zM205 129h2v1h-2zM391 129h2v1h-2zM411 129h1v1h-1zM444 129h2v1h-2zM467 129h1v1h-1zM527 129h1v1h-1zM70 130h1v1h-1zM130 130h1v1h-1zM134 130h1v1h-1zM152 130h2v1h-2zM187 130h1v1h-1zM203 130h2v1h-2zM393 130h2v1h-2zM410 130h1v1h-1zM445 130h1v1h-1zM468 130h1v1h-1zM528 130h1v1h-1zM70 131h1v1h-1zM129 131h1v1h-1zM135 131h1v1h-1zM151 131h1v1h-1zM188 131h1v1h-1zM202 131h1v1h-1zM291 131h1v1h-1zM395 131h2v1h-2zM409 131h1v1h-1zM446 131h2v1h-2zM469 131h1v1h-1zM528 131h1v1h-1zM69 132h1v1h-1zM128 132h1v1h-1zM136 132h1v1h-1zM150 132h1v1h-1zM189 132h1v1h-1zM200 132h2v1h-2zM292 132h1v1h-1zM308 132h1v1h-1zM397 132h2v1h-2zM409 132h1v1h-1zM448 132h1v1h-1zM470 132h1v1h-1zM529 132h1v1h-1zM68 133h1v1h-1zM127 133h1v1h-1zM137 133h1v1h-1zM149 133h1v1h-1zM189 133h1v1h-1zM199 133h1v1h-1zM292 133h1v1h-1zM307 133h1v1h-1zM325 133h1v1h-1zM399 133h1v1h-1zM408 133h1v1h-1zM449 133h1v1h-1zM469 133h1v1h-1zM471 133h1v1h-1zM530 133h1v1h-1zM68 134h1v1h-1zM126 134h1v1h-1zM138 134h1v1h-1zM148 134h1v1h-1zM190 134h1v1h-1zM197 134h2v1h-2zM293 134h1v1h-1zM306 134h1v1h-1zM324 134h1v1h-1zM400 134h2v1h-2zM407 134h1v1h-1zM450 134h1v1h-1zM468 134h1v1h-1zM472 134h1v1h-1zM530 134h1v1h-1zM67 135h1v1h-1zM125 135h1v1h-1zM139 135h1v1h-1zM147 135h1v1h-1zM191 135h1v1h-1zM196 135h1v1h-1zM265 135h1v1h-1zM294 135h1v1h-1zM306 135h1v1h-1zM324 135h1v1h-1zM402 135h1v1h-1zM407 135h1v1h-1zM451 135h1v1h-1zM467 135h1v1h-1zM473 135h1v1h-1zM531 135h1v1h-1zM66 136h1v1h-1zM124 136h1v1h-1zM140 136h1v1h-1zM146 136h1v1h-1zM191 136h1v1h-1zM194 136h2v1h-2zM265 136h1v1h-1zM294 136h1v1h-1zM305 136h1v1h-1zM323 136h1v1h-1zM403 136h2v1h-2zM406 136h1v1h-1zM452 136h1v1h-1zM466 136h1v1h-1zM474 136h1v1h-1zM532 136h1v1h-1zM66 137h1v1h-1zM124 137h1v1h-1zM141 137h1v1h-1zM145 137h1v1h-1zM192 137h2v1h-2zM264 137h1v1h-1zM295 137h1v1h-1zM304 137h1v1h-1zM322 137h1v1h-1zM406 137h1v1h-1zM453 137h1v1h-1zM465 137h1v1h-1zM474 137h1v1h-1zM532 137h1v1h-1zM65 138h1v1h-1zM123 138h1v1h-1zM142 138h1v1h-1zM144 138h1v1h-1zM191 138h1v1h-1zM264 138h1v1h-1zM296 138h1v1h-1zM303 138h1v1h-1zM321 138h1v1h-1zM407 138h1v1h-1zM454 138h1v1h-1zM464 138h1v1h-1zM475 138h1v1h-1zM533 138h1v1h-1zM65 139h1v1h-1zM122 139h1v1h-1zM143 139h1v1h-1zM189 139h2v1h-2zM248 139h1v1h-1zM263 139h1v1h-1zM296 139h1v1h-1zM302 139h1v1h-1zM321 139h1v1h-1zM408 139h2v1h-2zM455 139h1v1h-1zM463 139h1v1h-1zM476 139h1v1h-1zM533 139h1v1h-1zM64 140h1v1h-1zM121 140h1v1h-1zM142 140h1v1h-1zM188 140h1v1h-1zM249 140h1v1h-1zM263 140h1v1h-1zM297 140h1v1h-1zM301 140h1v1h-1zM320 140h1v1h-1zM410 140h1v1h-1zM456 140h1v1h-1zM462 140h1v1h-1zM477 140h1v1h-1zM534 140h1v1h-1zM63 141h1v1h-1zM120 141h1v1h-1zM141 141h1v1h-1zM186 141h2v1h-2zM249 141h1v1h-1zM263 141h1v1h-1zM298 141h1v1h-1zM301 141h1v1h-1zM319 141h1v1h-1zM411 141h2v1h-2zM457 141h1v1h-1zM461 141h1v1h-1zM478 141h1v1h-1zM535 141h1v1h-1zM63 142h1v1h-1zM119 142h1v1h-1zM140 142h1v1h-1zM185 142h1v1h-1zM250 142h1v1h-1zM262 142h1v1h-1zM298 142h1v1h-1zM300 142h1v1h-1zM318 142h1v1h-1zM413 142h1v1h-1zM458 142h1v1h-1zM460 142h1v1h-1zM479 142h1v1h-1zM535 142h1v1h-1zM62 143h1v1h-1zM119 143h1v1h-1zM139 143h1v1h-1zM184 143h1v1h-1zM251 143h1v1h-1zM262 143h1v1h-1zM299 143h1v1h-1zM318 143h1v1h-1zM414 143h1v1h-1zM459 143h1v1h-1zM479 143h1v1h-1zM536 143h1v1h-1zM61 144h1v1h-1zM118 144h1v1h-1zM138 144h1v1h-1zM182 144h2v1h-2zM251 144h1v1h-1zM262 144h1v1h-1zM317 144h1v1h-1zM362 144h1v1h-1zM415 144h2v1h-2zM460 144h1v1h-1zM480 144h1v1h-1zM537 144h1v1h-1zM61 145h1v1h-1zM117 145h1v1h-1zM119 145h1v1h-1zM137 145h1v1h-1zM181 145h1v1h-1zM252 145h1v1h-1zM261 145h1v1h-1zM362 145h1v1h-1zM417 145h1v1h-1zM461 145h1v1h-1zM481 145h1v1h-1zM537 145h1v1h-1zM60 146h1v1h-1zM116 146h1v1h-1zM120 146h2v1h-2zM136 146h1v1h-1zM180 146h1v1h-1zM252 146h1v1h-1zM261 146h1v1h-1zM361 146h1v1h-1zM418 146h1v1h-1zM462 146h1v1h-1zM482 146h1v1h-1zM538 146h1v1h-1zM59 147h1v1h-1zM115 147h1v1h-1zM122 147h1v1h-1zM135 147h1v1h-1zM179 147h1v1h-1zM253 147h1v1h-1zM260 147h1v1h-1zM361 147h1v1h-1zM419 147h1v1h-1zM463 147h1v1h-1zM483 147h1v1h-1zM539 147h1v1h-1zM59 148h1v1h-1zM114 148h1v1h-1zM123 148h1v1h-1zM134 148h1v1h-1zM177 148h2v1h-2zM254 148h1v1h-1zM260 148h1v1h-1zM360 148h1v1h-1zM420 148h1v1h-1zM464 148h1v1h-1zM483 148h2v1h-2zM539 148h1v1h-1zM58 149h1v1h-1zM113 149h1v1h-1zM124 149h1v1h-1zM133 149h1v1h-1zM176 149h1v1h-1zM254 149h1v1h-1zM360 149h1v1h-1zM421 149h2v1h-2zM465 149h1v1h-1zM482 149h1v1h-1zM485 149h1v1h-1zM540 149h1v1h-1zM57 150h1v1h-1zM113 150h1v1h-1zM125 150h1v1h-1zM132 150h1v1h-1zM175 150h1v1h-1zM255 150h1v1h-1zM359 150h1v1h-1zM423 150h1v1h-1zM466 150h1v1h-1zM481 150h1v1h-1zM485 150h1v1h-1zM541 150h1v1h-1zM57 151h1v1h-1zM112 151h1v1h-1zM126 151h2v1h-2zM131 151h1v1h-1zM174 151h1v1h-1zM359 151h1v1h-1zM424 151h1v1h-1zM467 151h1v1h-1zM480 151h1v1h-1zM486 151h1v1h-1zM541 151h1v1h-1zM56 152h1v1h-1zM111 152h1v1h-1zM128 152h1v1h-1zM130 152h1v1h-1zM173 152h1v1h-1zM358 152h1v1h-1zM425 152h1v1h-1zM468 152h1v1h-1zM478 152h2v1h-2zM487 152h1v1h-1zM542 152h1v1h-1zM55 153h1v1h-1zM110 153h1v1h-1zM129 153h2v1h-2zM171 153h2v1h-2zM358 153h1v1h-1zM426 153h2v1h-2zM468 153h1v1h-1zM477 153h1v1h-1zM488 153h1v1h-1zM543 153h1v1h-1zM55 154h1v1h-1zM110 154h1v1h-1zM129 154h1v1h-1zM170 154h1v1h-1zM357 154h1v1h-1zM428 154h1v1h-1zM469 154h1v1h-1zM476 154h1v1h-1zM488 154h1v1h-1zM543 154h1v1h-1zM54 155h2v1h-2zM109 155h1v1h-1zM128 155h1v1h-1zM169 155h1v1h-1zM357 155h1v1h-1zM429 155h1v1h-1zM470 155h1v1h-1zM475 155h1v1h-1zM489 155h1v1h-1zM544 155h1v1h-1zM54 156h1v1h-1zM56 156h2v1h-2zM108 156h1v1h-1zM127 156h1v1h-1zM168 156h1v1h-1zM430 156h1v1h-1zM471 156h1v1h-1zM474 156h1v1h-1zM490 156h1v1h-1zM544 156h1v1h-1zM53 157h1v1h-1zM58 157h2v1h-2zM107 157h1v1h-1zM126 157h1v1h-1zM167 157h1v1h-1zM431 157h1v1h-1zM472 157h2v1h-2zM491 157h1v1h-1zM545 157h1v1h-1zM52 158h1v1h-1zM60 158h2v1h-2zM107 158h1v1h-1zM125 158h1v1h-1zM166 158h1v1h-1zM432 158h1v1h-1zM473 158h1v1h-1zM491 158h1v1h-1zM546 158h1v1h-1zM52 159h1v1h-1zM62 159h1v1h-1zM106 159h1v1h-1zM125 159h1v1h-1zM165 159h1v1h-1zM433 159h1v1h-1zM473 159h1v1h-1zM492 159h1v1h-1zM546 159h1v1h-1zM51 160h1v1h-1zM63 160h2v1h-2zM105 160h1v1h-1zM124 160h1v1h-1zM164 160h1v1h-1zM434 160h1v1h-1zM474 160h1v1h-1zM493 160h1v1h-1zM546 160h2v1h-2zM51 161h1v1h-1zM65 161h2v1h-2zM105 161h3v1h-3zM123 161h1v1h-1zM163 161h1v1h-1zM435 161h1v1h-1zM475 161h1v1h-1zM493 161h1v1h-1zM544 161h2v1h-2zM547 161h1v1h-1zM50 162h1v1h-1zM67 162h1v1h-1zM104 162h1v1h-1zM108 162h1v1h-1zM122 162h1v1h-1zM162 162h1v1h-1zM436 162h1v1h-1zM476 162h1v1h-1zM494 162h1v1h-1zM542 162h2v1h-2zM548 162h1v1h-1zM50 163h1v1h-1zM68 163h2v1h-2zM103 163h1v1h-1zM109 163h1v1h-1zM122 163h1v1h-1zM161 163h1v1h-1zM201 163h1v1h-1zM437 163h1v1h-1zM476 163h1v1h-1zM495 163h1v1h-1zM540 163h2v1h-2zM548 163h1v1h-1zM49 164h1v1h-1zM70 164h2v1h-2zM102 164h1v1h-1zM110 164h2v1h-2zM121 164h1v1h-1zM160 164h1v1h-1zM202 164h1v1h-1zM438 164h1v1h-1zM477 164h1v1h-1zM496 164h1v1h-1zM539 164h1v1h-1zM549 164h1v1h-1zM49 165h1v1h-1zM72 165h2v1h-2zM102 165h1v1h-1zM112 165h1v1h-1zM120 165h1v1h-1zM159 165h1v1h-1zM202 165h1v1h-1zM439 165h1v1h-1zM478 165h1v1h-1zM496 165h1v1h-1zM537 165h2v1h-2zM549 165h1v1h-1zM48 166h1v1h-1zM74 166h1v1h-1zM101 166h1v1h-1zM113 166h1v1h-1zM119 166h1v1h-1zM158 166h1v1h-1zM203 166h1v1h-1zM440 166h1v1h-1zM479 166h1v1h-1zM494 166h2v1h-2zM497 166h1v1h-1zM535 166h2v1h-2zM550 166h1v1h-1zM48 167h1v1h-1zM75 167h2v1h-2zM100 167h1v1h-1zM114 167h2v1h-2zM119 167h1v1h-1zM157 167h1v1h-1zM204 167h1v1h-1zM441 167h1v1h-1zM479 167h1v1h-1zM493 167h1v1h-1zM498 167h1v1h-1zM534 167h1v1h-1zM550 167h1v1h-1zM47 168h1v1h-1zM77 168h2v1h-2zM100 168h1v1h-1zM116 168h1v1h-1zM118 168h1v1h-1zM156 168h1v1h-1zM205 168h1v1h-1zM442 168h1v1h-1zM480 168h1v1h-1zM491 168h2v1h-2zM498 168h1v1h-1zM532 168h2v1h-2zM551 168h1v1h-1zM47 169h1v1h-1zM79 169h2v1h-2zM99 169h1v1h-1zM117 169h1v1h-1zM155 169h1v1h-1zM205 169h1v1h-1zM443 169h1v1h-1zM481 169h1v1h-1zM489 169h2v1h-2zM499 169h1v1h-1zM530 169h2v1h-2zM551 169h1v1h-1zM46 170h1v1h-1zM81 170h1v1h-1zM98 170h1v1h-1zM116 170h1v1h-1zM154 170h1v1h-1zM206 170h1v1h-1zM444 170h1v1h-1zM482 170h1v1h-1zM488 170h1v1h-1zM500 170h1v1h-1zM528 170h2v1h-2zM552 170h1v1h-1zM46 171h1v1h-1zM82 171h2v1h-2zM97 171h1v1h-1zM115 171h1v1h-1zM153 171h1v1h-1zM207 171h1v1h-1zM445 171h1v1h-1zM483 171h1v1h-1zM486 171h2v1h-2zM501 171h1v1h-1zM527 171h1v1h-1zM552 171h1v1h-1zM45 172h1v1h-1zM84 172h2v1h-2zM97 172h1v1h-1zM115 172h1v1h-1zM153 172h1v1h-1zM207 172h1v1h-1zM445 172h1v1h-1zM483 172h1v1h-1zM485 172h1v1h-1zM501 172h1v1h-1zM525 172h2v1h-2zM553 172h1v1h-1zM45 173h1v1h-1zM86 173h1v1h-1zM96 173h1v1h-1zM114 173h1v1h-1zM152 173h1v1h-1zM208 173h1v1h-1zM446 173h1v1h-1zM484 173h1v1h-1zM502 173h1v1h-1zM523 173h2v1h-2zM553 173h1v1h-1zM44 174h1v1h-1zM87 174h2v1h-2zM95 174h1v1h-1zM113 174h1v1h-1zM151 174h1v1h-1zM447 174h1v1h-1zM485 174h1v1h-1zM503 174h1v1h-1zM521 174h2v1h-2zM554 174h1v1h-1zM44 175h1v1h-1zM89 175h2v1h-2zM95 175h1v1h-1zM112 175h1v1h-1zM150 175h1v1h-1zM448 175h1v1h-1zM486 175h1v1h-1zM503 175h1v1h-1zM520 175h1v1h-1zM554 175h1v1h-1zM44 176h1v1h-1zM91 176h2v1h-2zM94 176h1v1h-1zM112 176h1v1h-1zM149 176h1v1h-1zM449 176h1v1h-1zM486 176h1v1h-1zM504 176h1v1h-1zM518 176h2v1h-2zM554 176h1v1h-1zM43 177h1v1h-1zM93 177h2v1h-2zM111 177h1v1h-1zM148 177h1v1h-1zM450 177h1v1h-1zM487 177h1v1h-1zM504 177h1v1h-1zM516 177h2v1h-2zM555 177h1v1h-1zM43 178h1v1h-1zM93 178h2v1h-2zM111 178h1v1h-1zM148 178h1v1h-1zM450 178h1v1h-1zM487 178h1v1h-1zM505 178h1v1h-1zM515 178h1v1h-1zM555 178h1v1h-1zM42 179h1v1h-1zM93 179h1v1h-1zM95 179h2v1h-2zM110 179h1v1h-1zM147 179h1v1h-1zM451 179h1v1h-1zM488 179h1v1h-1zM505 179h1v1h-1zM513 179h2v1h-2zM556 179h1v1h-1zM42 180h1v1h-1zM92 180h1v1h-1zM97 180h2v1h-2zM110 180h1v1h-1zM146 180h1v1h-1zM452 180h1v1h-1zM488 180h1v1h-1zM506 180h1v1h-1zM511 180h2v1h-2zM556 180h1v1h-1zM41 181h1v1h-1zM91 181h1v1h-1zM99 181h1v1h-1zM109 181h1v1h-1zM145 181h1v1h-1zM453 181h1v1h-1zM489 181h1v1h-1zM507 181h1v1h-1zM509 181h2v1h-2zM557 181h1v1h-1zM41 182h1v1h-1zM91 182h1v1h-1zM100 182h2v1h-2zM108 182h1v1h-1zM144 182h1v1h-1zM454 182h1v1h-1zM490 182h1v1h-1zM507 182h2v1h-2zM557 182h1v1h-1zM40 183h1v1h-1zM90 183h1v1h-1zM102 183h2v1h-2zM108 183h1v1h-1zM144 183h1v1h-1zM454 183h1v1h-1zM490 183h1v1h-1zM505 183h2v1h-2zM508 183h1v1h-1zM558 183h1v1h-1zM40 184h1v1h-1zM90 184h1v1h-1zM104 184h2v1h-2zM107 184h1v1h-1zM143 184h1v1h-1zM455 184h1v1h-1zM491 184h1v1h-1zM503 184h2v1h-2zM508 184h1v1h-1zM558 184h1v1h-1zM40 185h1v1h-1zM89 185h1v1h-1zM106 185h1v1h-1zM142 185h1v1h-1zM456 185h1v1h-1zM492 185h1v1h-1zM501 185h2v1h-2zM509 185h1v1h-1zM558 185h1v1h-1zM39 186h1v1h-1zM89 186h1v1h-1zM106 186h1v1h-1zM141 186h1v1h-1zM457 186h1v1h-1zM492 186h1v1h-1zM500 186h1v1h-1zM509 186h1v1h-1zM559 186h1v1h-1zM39 187h1v1h-1zM88 187h1v1h-1zM105 187h1v1h-1zM141 187h1v1h-1zM457 187h1v1h-1zM493 187h1v1h-1zM498 187h2v1h-2zM510 187h1v1h-1zM559 187h1v1h-1zM38 188h1v1h-1zM87 188h1v1h-1zM104 188h1v1h-1zM140 188h1v1h-1zM458 188h1v1h-1zM494 188h1v1h-1zM496 188h2v1h-2zM511 188h1v1h-1zM560 188h1v1h-1zM38 189h1v1h-1zM87 189h1v1h-1zM104 189h1v1h-1zM139 189h1v1h-1zM459 189h1v1h-1zM494 189h2v1h-2zM511 189h1v1h-1zM560 189h1v1h-1zM37 190h1v1h-1zM86 190h1v1h-1zM103 190h1v1h-1zM139 190h1v1h-1zM459 190h1v1h-1zM495 190h1v1h-1zM512 190h1v1h-1zM561 190h1v1h-1zM37 191h1v1h-1zM86 191h1v1h-1zM103 191h1v1h-1zM138 191h1v1h-1zM460 191h1v1h-1zM495 191h1v1h-1zM512 191h1v1h-1zM561 191h1v1h-1zM36 192h1v1h-1zM85 192h1v1h-1zM102 192h1v1h-1zM137 192h1v1h-1zM461 192h1v1h-1zM496 192h1v1h-1zM513 192h1v1h-1zM562 192h1v1h-1zM36 193h1v1h-1zM85 193h1v1h-1zM102 193h1v1h-1zM137 193h1v1h-1zM170 193h1v1h-1zM461 193h1v1h-1zM496 193h1v1h-1zM513 193h1v1h-1zM562 193h1v1h-1zM36 194h1v1h-1zM84 194h1v1h-1zM101 194h1v1h-1zM136 194h1v1h-1zM171 194h1v1h-1zM462 194h1v1h-1zM497 194h1v1h-1zM514 194h1v1h-1zM562 194h1v1h-1zM35 195h1v1h-1zM84 195h1v1h-1zM101 195h1v1h-1zM136 195h1v1h-1zM172 195h2v1h-2zM462 195h1v1h-1zM497 195h1v1h-1zM514 195h1v1h-1zM563 195h1v1h-1zM35 196h1v1h-1zM84 196h1v1h-1zM100 196h1v1h-1zM135 196h1v1h-1zM174 196h1v1h-1zM463 196h1v1h-1zM498 196h1v1h-1zM514 196h1v1h-1zM563 196h1v1h-1zM34 197h1v1h-1zM83 197h1v1h-1zM85 197h2v1h-2zM100 197h1v1h-1zM134 197h1v1h-1zM175 197h1v1h-1zM432 197h1v1h-1zM464 197h1v1h-1zM498 197h1v1h-1zM515 197h1v1h-1zM564 197h1v1h-1zM34 198h1v1h-1zM83 198h1v1h-1zM87 198h2v1h-2zM99 198h1v1h-1zM134 198h1v1h-1zM176 198h2v1h-2zM430 198h2v1h-2zM464 198h1v1h-1zM499 198h1v1h-1zM515 198h1v1h-1zM564 198h1v1h-1zM33 199h1v1h-1zM82 199h1v1h-1zM89 199h2v1h-2zM99 199h1v1h-1zM133 199h1v1h-1zM178 199h1v1h-1zM429 199h1v1h-1zM465 199h1v1h-1zM499 199h1v1h-1zM516 199h1v1h-1zM565 199h1v1h-1zM33 200h1v1h-1zM82 200h1v1h-1zM91 200h2v1h-2zM98 200h1v1h-1zM132 200h1v1h-1zM179 200h1v1h-1zM427 200h2v1h-2zM466 200h1v1h-1zM499 200h2v1h-2zM516 200h1v1h-1zM565 200h1v1h-1zM32 201h1v1h-1zM81 201h1v1h-1zM93 201h2v1h-2zM98 201h1v1h-1zM132 201h1v1h-1zM426 201h1v1h-1zM466 201h1v1h-1zM497 201h2v1h-2zM500 201h1v1h-1zM515 201h3v1h-3zM566 201h1v1h-1zM32 202h1v1h-1zM81 202h1v1h-1zM95 202h3v1h-3zM99 202h2v1h-2zM131 202h1v1h-1zM425 202h1v1h-1zM467 202h1v1h-1zM495 202h2v1h-2zM501 202h1v1h-1zM513 202h2v1h-2zM517 202h1v1h-1zM566 202h1v1h-1zM32 203h1v1h-1zM80 203h1v1h-1zM97 203h1v1h-1zM101 203h2v1h-2zM130 203h1v1h-1zM423 203h2v1h-2zM468 203h1v1h-1zM493 203h2v1h-2zM501 203h1v1h-1zM511 203h2v1h-2zM518 203h1v1h-1zM566 203h1v1h-1zM31 204h1v1h-1zM80 204h1v1h-1zM96 204h1v1h-1zM103 204h2v1h-2zM130 204h1v1h-1zM422 204h1v1h-1zM468 204h1v1h-1zM491 204h2v1h-2zM502 204h1v1h-1zM509 204h2v1h-2zM518 204h1v1h-1zM567 204h1v1h-1zM31 205h1v1h-1zM79 205h1v1h-1zM96 205h1v1h-1zM105 205h2v1h-2zM129 205h1v1h-1zM469 205h1v1h-1zM489 205h2v1h-2zM502 205h1v1h-1zM507 205h2v1h-2zM519 205h1v1h-1zM567 205h1v1h-1zM31 206h1v1h-1zM79 206h1v1h-1zM95 206h1v1h-1zM107 206h2v1h-2zM129 206h1v1h-1zM469 206h1v1h-1zM487 206h2v1h-2zM503 206h1v1h-1zM505 206h2v1h-2zM519 206h1v1h-1zM567 206h1v1h-1zM30 207h1v1h-1zM78 207h1v1h-1zM95 207h1v1h-1zM109 207h2v1h-2zM128 207h1v1h-1zM470 207h1v1h-1zM485 207h2v1h-2zM503 207h2v1h-2zM520 207h1v1h-1zM568 207h1v1h-1zM30 208h1v1h-1zM78 208h1v1h-1zM94 208h1v1h-1zM111 208h2v1h-2zM128 208h1v1h-1zM470 208h1v1h-1zM483 208h2v1h-2zM504 208h1v1h-1zM520 208h1v1h-1zM568 208h1v1h-1zM30 209h1v1h-1zM77 209h1v1h-1zM94 209h1v1h-1zM113 209h2v1h-2zM127 209h1v1h-1zM471 209h1v1h-1zM481 209h2v1h-2zM504 209h1v1h-1zM521 209h1v1h-1zM568 209h1v1h-1zM30 210h1v1h-1zM77 210h1v1h-1zM93 210h1v1h-1zM115 210h2v1h-2zM127 210h1v1h-1zM471 210h1v1h-1zM479 210h2v1h-2zM505 210h1v1h-1zM521 210h1v1h-1zM568 210h1v1h-1zM29 211h1v1h-1zM77 211h1v1h-1zM93 211h1v1h-1zM117 211h2v1h-2zM126 211h1v1h-1zM472 211h1v1h-1zM477 211h2v1h-2zM505 211h1v1h-1zM521 211h1v1h-1zM569 211h1v1h-1zM29 212h1v1h-1zM76 212h1v1h-1zM92 212h1v1h-1zM119 212h2v1h-2zM126 212h1v1h-1zM472 212h1v1h-1zM475 212h2v1h-2zM506 212h1v1h-1zM522 212h1v1h-1zM569 212h1v1h-1zM29 213h1v1h-1zM76 213h1v1h-1zM92 213h1v1h-1zM121 213h2v1h-2zM125 213h1v1h-1zM473 213h2v1h-2zM506 213h1v1h-1zM522 213h1v1h-1zM569 213h1v1h-1zM28 214h1v1h-1zM75 214h1v1h-1zM91 214h1v1h-1zM123 214h2v1h-2zM507 214h1v1h-1zM523 214h1v1h-1zM570 214h1v1h-1zM28 215h1v1h-1zM75 215h3v1h-3zM91 215h1v1h-1zM124 215h1v1h-1zM474 215h1v1h-1zM507 215h1v1h-1zM523 215h1v1h-1zM570 215h1v1h-1zM28 216h1v1h-1zM75 216h1v1h-1zM78 216h2v1h-2zM91 216h1v1h-1zM124 216h1v1h-1zM474 216h1v1h-1zM507 216h1v1h-1zM523 216h1v1h-1zM570 216h1v1h-1zM27 217h1v1h-1zM74 217h1v1h-1zM80 217h3v1h-3zM90 217h1v1h-1zM123 217h1v1h-1zM475 217h1v1h-1zM508 217h1v1h-1zM524 217h1v1h-1zM571 217h1v1h-1zM27 218h1v1h-1zM74 218h1v1h-1zM83 218h3v1h-3zM90 218h1v1h-1zM123 218h1v1h-1zM475 218h1v1h-1zM508 218h1v1h-1zM524 218h1v1h-1zM571 218h1v1h-1zM27 219h1v1h-1zM74 219h1v1h-1zM86 219h2v1h-2zM90 219h1v1h-1zM122 219h1v1h-1zM476 219h1v1h-1zM508 219h1v1h-1zM524 219h1v1h-1zM571 219h1v1h-1zM26 220h1v1h-1zM73 220h1v1h-1zM88 220h3v1h-3zM122 220h1v1h-1zM476 220h1v1h-1zM508 220h1v1h-1zM523 220h3v1h-3zM572 220h1v1h-1zM26 221h1v1h-1zM73 221h1v1h-1zM89 221h1v1h-1zM122 221h1v1h-1zM476 221h1v1h-1zM509 221h1v1h-1zM521 221h2v1h-2zM525 221h1v1h-1zM572 221h1v1h-1zM26 222h1v1h-1zM73 222h1v1h-1zM89 222h1v1h-1zM121 222h1v1h-1zM477 222h1v1h-1zM509 222h1v1h-1zM518 222h3v1h-3zM525 222h1v1h-1zM572 222h1v1h-1zM25 223h1v1h-1zM73 223h1v1h-1zM89 223h1v1h-1zM121 223h1v1h-1zM477 223h1v1h-1zM509 223h1v1h-1zM515 223h3v1h-3zM525 223h1v1h-1zM573 223h1v1h-1zM25 224h1v1h-1zM72 224h1v1h-1zM89 224h1v1h-1zM120 224h1v1h-1zM478 224h1v1h-1zM509 224h1v1h-1zM513 224h2v1h-2zM526 224h1v1h-1zM573 224h1v1h-1zM25 225h1v1h-1zM72 225h1v1h-1zM88 225h1v1h-1zM120 225h1v1h-1zM478 225h1v1h-1zM510 225h3v1h-3zM526 225h1v1h-1zM573 225h1v1h-1zM24 226h1v1h-1zM72 226h1v1h-1zM88 226h1v1h-1zM119 226h1v1h-1zM479 226h1v1h-1zM510 226h1v1h-1zM526 226h1v1h-1zM574 226h1v1h-1zM24 227h1v1h-1zM71 227h1v1h-1zM87 227h1v1h-1zM119 227h1v1h-1zM479 227h1v1h-1zM511 227h1v1h-1zM527 227h1v1h-1zM574 227h1v1h-1zM24 228h1v1h-1zM71 228h1v1h-1zM87 228h1v1h-1zM119 228h1v1h-1zM479 228h1v1h-1zM511 228h1v1h-1zM527 228h1v1h-1zM574 228h1v1h-1zM24 229h1v1h-1zM70 229h1v1h-1zM86 229h1v1h-1zM118 229h1v1h-1zM480 229h1v1h-1zM512 229h1v1h-1zM528 229h1v1h-1zM574 229h1v1h-1zM23 230h1v1h-1zM70 230h1v1h-1zM86 230h1v1h-1zM118 230h1v1h-1zM480 230h1v1h-1zM512 230h1v1h-1zM528 230h1v1h-1zM575 230h1v1h-1zM23 231h1v1h-1zM70 231h1v1h-1zM86 231h1v1h-1zM118 231h1v1h-1zM480 231h1v1h-1zM512 231h1v1h-1zM528 231h1v1h-1zM575 231h1v1h-1zM23 232h1v1h-1zM69 232h1v1h-1zM85 232h1v1h-1zM117 232h1v1h-1zM481 232h1v1h-1zM513 232h1v1h-1zM529 232h1v1h-1zM575 232h1v1h-1zM23 233h1v1h-1zM69 233h1v1h-1zM85 233h1v1h-1zM117 233h1v1h-1zM481 233h1v1h-1zM513 233h1v1h-1zM529 233h1v1h-1zM575 233h1v1h-1zM22 234h1v1h-1zM69 234h1v1h-1zM85 234h1v1h-1zM117 234h1v1h-1zM481 234h1v1h-1zM513 234h1v1h-1zM529 234h1v1h-1zM576 234h1v1h-1zM22 235h1v1h-1zM69 235h2v1h-2zM85 235h1v1h-1zM116 235h1v1h-1zM482 235h1v1h-1zM513 235h1v1h-1zM529 235h1v1h-1zM576 235h1v1h-1zM22 236h1v1h-1zM68 236h1v1h-1zM71 236h4v1h-4zM84 236h1v1h-1zM116 236h1v1h-1zM482 236h1v1h-1zM514 236h1v1h-1zM530 236h1v1h-1zM576 236h1v1h-1zM22 237h1v1h-1zM68 237h1v1h-1zM75 237h3v1h-3zM84 237h1v1h-1zM116 237h1v1h-1zM482 237h1v1h-1zM514 237h1v1h-1zM530 237h1v1h-1zM576 237h1v1h-1zM21 238h1v1h-1zM68 238h1v1h-1zM78 238h4v1h-4zM84 238h1v1h-1zM115 238h1v1h-1zM483 238h1v1h-1zM514 238h1v1h-1zM530 238h1v1h-1zM577 238h1v1h-1zM21 239h1v1h-1zM68 239h1v1h-1zM82 239h3v1h-3zM115 239h1v1h-1zM483 239h1v1h-1zM514 239h1v1h-1zM530 239h1v1h-1zM577 239h1v1h-1zM21 240h1v1h-1zM67 240h1v1h-1zM83 240h1v1h-1zM115 240h1v1h-1zM483 240h1v1h-1zM515 240h1v1h-1zM529 240h3v1h-3zM577 240h1v1h-1zM21 241h1v1h-1zM67 241h1v1h-1zM83 241h1v1h-1zM114 241h1v1h-1zM484 241h1v1h-1zM515 241h1v1h-1zM526 241h3v1h-3zM531 241h1v1h-1zM577 241h1v1h-1zM21 242h1v1h-1zM67 242h1v1h-1zM83 242h1v1h-1zM114 242h1v1h-1zM484 242h1v1h-1zM515 242h1v1h-1zM522 242h4v1h-4zM531 242h1v1h-1zM577 242h1v1h-1zM20 243h1v1h-1zM67 243h1v1h-1zM83 243h1v1h-1zM114 243h1v1h-1zM484 243h1v1h-1zM515 243h1v1h-1zM519 243h3v1h-3zM531 243h1v1h-1zM578 243h1v1h-1zM20 244h1v1h-1zM66 244h1v1h-1zM82 244h1v1h-1zM114 244h1v1h-1zM484 244h1v1h-1zM516 244h3v1h-3zM532 244h1v1h-1zM578 244h1v1h-1zM20 245h1v1h-1zM66 245h1v1h-1zM82 245h1v1h-1zM113 245h1v1h-1zM485 245h1v1h-1zM516 245h1v1h-1zM532 245h1v1h-1zM578 245h1v1h-1zM20 246h1v1h-1zM66 246h1v1h-1zM82 246h1v1h-1zM113 246h1v1h-1zM485 246h1v1h-1zM516 246h1v1h-1zM532 246h1v1h-1zM578 246h1v1h-1zM20 247h1v1h-1zM66 247h1v1h-1zM81 247h1v1h-1zM113 247h1v1h-1zM485 247h1v1h-1zM517 247h1v1h-1zM532 247h1v1h-1zM578 247h1v1h-1zM19 248h1v1h-1zM65 248h1v1h-1zM81 248h1v1h-1zM112 248h1v1h-1zM486 248h1v1h-1zM517 248h1v1h-1zM533 248h1v1h-1zM579 248h1v1h-1zM19 249h1v1h-1zM65 249h1v1h-1zM81 249h1v1h-1zM112 249h1v1h-1zM486 249h1v1h-1zM517 249h1v1h-1zM533 249h1v1h-1zM579 249h1v1h-1zM19 250h1v1h-1zM65 250h1v1h-1zM81 250h1v1h-1zM112 250h1v1h-1zM486 250h1v1h-1zM517 250h1v1h-1zM533 250h1v1h-1zM579 250h1v1h-1zM19 251h1v1h-1zM65 251h1v1h-1zM80 251h1v1h-1zM111 251h1v1h-1zM487 251h1v1h-1zM518 251h1v1h-1zM533 251h1v1h-1zM579 251h1v1h-1zM19 252h1v1h-1zM65 252h1v1h-1zM80 252h1v1h-1zM111 252h1v1h-1zM487 252h1v1h-1zM518 252h1v1h-1zM533 252h1v1h-1zM579 252h1v1h-1zM19 253h1v1h-1zM65 253h1v1h-1zM80 253h1v1h-1zM111 253h1v1h-1zM487 253h1v1h-1zM518 253h1v1h-1zM533 253h1v1h-1zM579 253h1v1h-1zM19 254h1v1h-1zM64 254h1v1h-1zM80 254h1v1h-1zM110 254h1v1h-1zM488 254h1v1h-1zM518 254h1v1h-1zM534 254h1v1h-1zM579 254h1v1h-1zM18 255h1v1h-1zM64 255h4v1h-4zM79 255h1v1h-1zM110 255h1v1h-1zM488 255h1v1h-1zM519 255h1v1h-1zM534 255h1v1h-1zM580 255h1v1h-1zM18 256h1v1h-1zM64 256h1v1h-1zM68 256h4v1h-4zM79 256h1v1h-1zM110 256h1v1h-1zM488 256h1v1h-1zM519 256h1v1h-1zM534 256h1v1h-1zM580 256h1v1h-1zM18 257h1v1h-1zM64 257h1v1h-1zM72 257h4v1h-4zM79 257h1v1h-1zM110 257h1v1h-1zM488 257h1v1h-1zM519 257h1v1h-1zM534 257h1v1h-1zM580 257h1v1h-1zM18 258h1v1h-1zM64 258h1v1h-1zM76 258h4v1h-4zM109 258h1v1h-1zM489 258h1v1h-1zM519 258h1v1h-1zM534 258h1v1h-1zM580 258h1v1h-1zM18 259h1v1h-1zM64 259h1v1h-1zM78 259h1v1h-1zM109 259h1v1h-1zM489 259h1v1h-1zM520 259h1v1h-1zM534 259h1v1h-1zM580 259h1v1h-1zM18 260h1v1h-1zM63 260h1v1h-1zM78 260h1v1h-1zM109 260h1v1h-1zM489 260h1v1h-1zM520 260h1v1h-1zM535 260h1v1h-1zM580 260h1v1h-1zM18 261h1v1h-1zM63 261h1v1h-1zM78 261h1v1h-1zM109 261h1v1h-1zM489 261h1v1h-1zM520 261h1v1h-1zM531 261h5v1h-5zM580 261h1v1h-1zM18 262h1v1h-1zM63 262h1v1h-1zM78 262h1v1h-1zM109 262h1v1h-1zM489 262h1v1h-1zM520 262h1v1h-1zM525 262h6v1h-6zM535 262h1v1h-1zM580 262h1v1h-1zM18 263h1v1h-1zM63 263h1v1h-1zM78 263h1v1h-1zM108 263h1v1h-1zM490 263h1v1h-1zM520 263h5v1h-5zM535 263h1v1h-1zM580 263h1v1h-1zM18 264h1v1h-1zM62 264h1v1h-1zM78 264h1v1h-1zM108 264h1v1h-1zM490 264h1v1h-1zM520 264h1v1h-1zM536 264h1v1h-1zM580 264h1v1h-1zM17 265h1v1h-1zM62 265h1v1h-1zM77 265h1v1h-1zM108 265h1v1h-1zM490 265h1v1h-1zM521 265h1v1h-1zM536 265h1v1h-1zM581 265h1v1h-1zM17 266h1v1h-1zM62 266h1v1h-1zM77 266h1v1h-1zM108 266h1v1h-1zM490 266h1v1h-1zM521 266h1v1h-1zM536 266h1v1h-1zM581 266h1v1h-1zM17 267h1v1h-1zM62 267h1v1h-1zM77 267h1v1h-1zM108 267h1v1h-1zM490 267h1v1h-1zM521 267h1v1h-1zM536 267h1v1h-1zM581 267h1v1h-1zM17 268h1v1h-1zM62 268h1v1h-1zM77 268h1v1h-1zM108 268h1v1h-1zM490 268h1v1h-1zM521 268h1v1h-1zM536 268h1v1h-1zM581 268h1v1h-1zM17 269h1v1h-1zM62 269h1v1h-1zM77 269h1v1h-1zM107 269h1v1h-1zM491 269h1v1h-1zM521 269h1v1h-1zM536 269h1v1h-1zM581 269h1v1h-1zM17 270h1v1h-1zM61 270h1v1h-1zM77 270h1v1h-1zM107 270h1v1h-1zM491 270h1v1h-1zM521 270h1v1h-1zM537 270h1v1h-1zM581 270h1v1h-1zM17 271h1v1h-1zM61 271h1v1h-1zM77 271h1v1h-1zM107 271h1v1h-1zM491 271h1v1h-1zM521 271h1v1h-1zM537 271h1v1h-1zM581 271h1v1h-1zM17 272h1v1h-1zM61 272h1v1h-1zM76 272h1v1h-1zM107 272h1v1h-1zM491 272h1v1h-1zM522 272h1v1h-1zM537 272h1v1h-1zM581 272h1v1h-1zM17 273h1v1h-1zM61 273h1v1h-1zM76 273h1v1h-1zM107 273h1v1h-1zM491 273h1v1h-1zM522 273h1v1h-1zM537 273h1v1h-1zM581 273h1v1h-1zM17 274h1v1h-1zM61 274h1v1h-1zM76 274h1v1h-1zM107 274h1v1h-1zM491 274h1v1h-1zM522 274h1v1h-1zM537 274h1v1h-1zM581 274h1v1h-1zM16 275h1v1h-1zM61 275h1v1h-1zM76 275h1v1h-1zM107 275h1v1h-1zM491 275h1v1h-1zM522 275h1v1h-1zM537 275h1v1h-1zM582 275h1v1h-1zM16 276h1v1h-1zM61 276h8v1h-8zM76 276h1v1h-1zM106 276h1v1h-1zM492 276h1v1h-1zM522 276h1v1h-1zM537 276h1v1h-1zM582 276h1v1h-1zM16 277h1v1h-1zM61 277h1v1h-1zM69 277h8v1h-8zM106 277h1v1h-1zM492 277h1v1h-1zM522 277h1v1h-1zM537 277h1v1h-1zM582 277h1v1h-1zM16 278h1v1h-1zM61 278h1v1h-1zM76 278h1v1h-1zM106 278h1v1h-1zM492 278h1v1h-1zM522 278h1v1h-1zM537 278h1v1h-1zM582 278h1v1h-1zM16 279h1v1h-1zM61 279h1v1h-1zM76 279h1v1h-1zM106 279h1v1h-1zM492 279h1v1h-1zM522 279h1v1h-1zM537 279h1v1h-1zM582 279h1v1h-1zM16 280h1v1h-1zM61 280h1v1h-1zM76 280h1v1h-1zM106 280h1v1h-1zM492 280h1v1h-1zM522 280h1v1h-1zM537 280h1v1h-1zM582 280h1v1h-1zM16 281h1v1h-1zM61 281h1v1h-1zM76 281h1v1h-1zM106 281h1v1h-1zM492 281h1v1h-1zM522 281h1v1h-1zM530 281h8v1h-8zM582 281h1v1h-1zM16 282h1v1h-1zM61 282h1v1h-1zM76 282h1v1h-1zM106 282h1v1h-1zM492 282h1v1h-1zM522 282h8v1h-8zM537 282h1v1h-1zM582 282h1v1h-1zM16 283h1v1h-1zM61 283h1v1h-1zM76 283h1v1h-1zM105 283h1v1h-1zM493 283h1v1h-1zM522 283h1v1h-1zM537 283h1v1h-1zM582 283h1v1h-1zM16 284h1v1h-1zM61 284h1v1h-1zM76 284h1v1h-1zM105 284h1v1h-1zM493 284h1v1h-1zM522 284h1v1h-1zM537 284h1v1h-1zM582 284h1v1h-1zM15 285h1v1h-1zM61 285h1v1h-1zM76 285h1v1h-1zM105 285h1v1h-1zM493 285h1v1h-1zM522 285h1v1h-1zM537 285h1v1h-1zM583 285h1v1h-1zM15 286h1v1h-1zM61 286h1v1h-1zM76 286h1v1h-1zM105 286h1v1h-1zM493 286h1v1h-1zM522 286h1v1h-1zM537 286h1v1h-1zM583 286h1v1h-1zM15 287h1v1h-1zM60 287h1v1h-1zM76 287h1v1h-1zM105 287h1v1h-1zM493 287h1v1h-1zM522 287h1v1h-1zM538 287h1v1h-1zM583 287h1v1h-1zM15 288h1v1h-1zM60 288h1v1h-1zM75 288h1v1h-1zM105 288h1v1h-1zM493 288h1v1h-1zM523 288h1v1h-1zM538 288h1v1h-1zM583 288h1v1h-1zM15 289h1v1h-1zM60 289h1v1h-1zM75 289h1v1h-1zM105 289h1v1h-1zM493 289h1v1h-1zM523 289h1v1h-1zM538 289h1v1h-1zM583 289h1v1h-1zM15 290h1v1h-1zM60 290h1v1h-1zM75 290h1v1h-1zM105 290h1v1h-1zM493 290h1v1h-1zM523 290h1v1h-1zM538 290h1v1h-1zM583 290h1v1h-1zM15 291h1v1h-1zM60 291h1v1h-1zM75 291h1v1h-1zM105 291h1v1h-1zM493 291h1v1h-1zM523 291h1v1h-1zM538 291h1v1h-1zM583 291h1v1h-1zM15 292h1v1h-1zM60 292h1v1h-1zM75 292h1v1h-1zM105 292h1v1h-1zM493 292h1v1h-1zM523 292h1v1h-1zM538 292h1v1h-1zM583 292h1v1h-1zM15 293h1v1h-1zM60 293h1v1h-1zM75 293h1v1h-1zM105 293h1v1h-1zM493 293h1v1h-1zM523 293h1v1h-1zM538 293h1v1h-1zM583 293h1v1h-1zM15 294h1v1h-1zM60 294h1v1h-1zM75 294h1v1h-1zM105 294h1v1h-1zM493 294h1v1h-1zM523 294h1v1h-1zM538 294h1v1h-1zM583 294h1v1h-1zM15 295h1v1h-1zM60 295h1v1h-1zM75 295h1v1h-1zM105 295h1v1h-1zM493 295h1v1h-1zM523 295h1v1h-1zM538 295h1v1h-1zM583 295h1v1h-1zM15 296h23v1h-23zM60 296h1v1h-1zM75 296h1v1h-1zM105 296h1v1h-1zM493 296h1v1h-1zM523 296h1v1h-1zM538 296h1v1h-1zM583 296h1v1h-1zM15 297h1v1h-1zM38 297h38v1h-38zM105 297h1v1h-1zM493 297h1v1h-1zM523 297h1v1h-1zM538 297h1v1h-1zM583 297h1v1h-1zM15 298h1v1h-1zM60 298h1v1h-1zM75 298h1v1h-1zM105 298h1v1h-1zM493 298h1v1h-1zM523 298h1v1h-1zM538 298h1v1h-1zM583 298h1v1h-1zM15 299h1v1h-1zM60 299h1v1h-1zM75 299h31v1h-31zM131 299h13v1h-13zM493 299h31v1h-31zM538 299h1v1h-1zM583 299h1v1h-1zM15 300h1v1h-1zM60 300h1v1h-1zM75 300h1v1h-1zM105 300h1v1h-1zM493 300h1v1h-1zM523 300h1v1h-1zM538 300h1v1h-1zM583 300h1v1h-1zM15 301h1v1h-1zM60 301h1v1h-1zM75 301h1v1h-1zM105 301h1v1h-1zM493 301h1v1h-1zM523 301h38v1h-38zM583 301h1v1h-1zM15 302h1v1h-1zM60 302h1v1h-1zM75 302h1v1h-1zM105 302h1v1h-1zM493 302h1v1h-1zM523 302h1v1h-1zM538 302h1v1h-1zM561 302h23v1h-23zM15 303h1v1h-1zM60 303h1v1h-1zM75 303h1v1h-1zM105 303h1v1h-1zM493 303h1v1h-1zM523 303h1v1h-1zM538 303h1v1h-1zM583 303h1v1h-1zM15 304h1v1h-1zM60 304h1v1h-1zM75 304h1v1h-1zM105 304h1v1h-1zM493 304h1v1h-1zM523 304h1v1h-1zM538 304h1v1h-1zM583 304h1v1h-1zM15 305h1v1h-1zM60 305h1v1h-1zM75 305h1v1h-1zM105 305h1v1h-1zM493 305h1v1h-1zM523 305h1v1h-1zM538 305h1v1h-1zM583 305h1v1h-1zM15 306h1v1h-1zM60 306h1v1h-1zM75 306h1v1h-1zM105 306h1v1h-1zM493 306h1v1h-1zM523 306h1v1h-1zM538 306h1v1h-1zM583 306h1v1h-1zM15 307h1v1h-1zM60 307h1v1h-1zM75 307h1v1h-1zM105 307h1v1h-1zM493 307h1v1h-1zM523 307h1v1h-1zM538 307h1v1h-1zM583 307h1v1h-1zM15 308h1v1h-1zM60 308h1v1h-1zM75 308h1v1h-1zM105 308h1v1h-1zM493 308h1v1h-1zM523 308h1v1h-1zM538 308h1v1h-1zM583 308h1v1h-1zM15 309h1v1h-1zM60 309h1v1h-1zM75 309h1v1h-1zM105 309h1v1h-1zM493 309h1v1h-1zM523 309h1v1h-1zM538 309h1v1h-1zM583 309h1v1h-1zM15 310h1v1h-1zM60 310h1v1h-1zM76 310h1v1h-1zM105 310h1v1h-1zM493 310h1v1h-1zM522 310h1v1h-1zM538 310h1v1h-1zM583 310h1v1h-1zM15 311h1v1h-1zM61 311h1v1h-1zM76 311h1v1h-1zM105 311h1v1h-1zM493 311h1v1h-1zM522 311h1v1h-1zM537 311h1v1h-1zM583 311h1v1h-1zM15 312h1v1h-1zM61 312h1v1h-1zM76 312h1v1h-1zM105 312h1v1h-1zM493 312h1v1h-1zM522 312h1v1h-1zM537 312h1v1h-1zM583 312h1v1h-1zM16 313h1v1h-1zM61 313h1v1h-1zM76 313h1v1h-1zM105 313h1v1h-1zM493 313h1v1h-1zM522 313h1v1h-1zM537 313h1v1h-1zM582 313h1v1h-1zM16 314h1v1h-1zM61 314h1v1h-1zM76 314h1v1h-1zM105 314h1v1h-1zM493 314h1v1h-1zM522 314h1v1h-1zM537 314h1v1h-1zM582 314h1v1h-1zM16 315h1v1h-1zM61 315h1v1h-1zM76 315h1v1h-1zM105 315h1v1h-1zM493 315h1v1h-1zM522 315h1v1h-1zM537 315h1v1h-1zM582 315h1v1h-1zM16 316h1v1h-1zM61 316h1v1h-1zM68 316h9v1h-9zM106 316h1v1h-1zM492 316h1v1h-1zM522 316h1v1h-1zM537 316h1v1h-1zM582 316h1v1h-1zM16 317h1v1h-1zM61 317h7v1h-7zM76 317h1v1h-1zM106 317h1v1h-1zM492 317h1v1h-1zM522 317h1v1h-1zM537 317h1v1h-1zM582 317h1v1h-1zM16 318h1v1h-1zM61 318h1v1h-1zM76 318h1v1h-1zM106 318h1v1h-1zM492 318h1v1h-1zM522 318h1v1h-1zM537 318h1v1h-1zM582 318h1v1h-1zM16 319h1v1h-1zM61 319h1v1h-1zM76 319h1v1h-1zM106 319h1v1h-1zM492 319h1v1h-1zM522 319h1v1h-1zM537 319h1v1h-1zM582 319h1v1h-1zM16 320h1v1h-1zM61 320h1v1h-1zM76 320h1v1h-1zM106 320h1v1h-1zM492 320h1v1h-1zM522 320h1v1h-1zM537 320h1v1h-1zM582 320h1v1h-1zM16 321h1v1h-1zM61 321h1v1h-1zM76 321h1v1h-1zM106 321h1v1h-1zM492 321h1v1h-1zM522 321h8v1h-8zM537 321h1v1h-1zM582 321h1v1h-1zM16 322h1v1h-1zM61 322h1v1h-1zM76 322h1v1h-1zM106 322h1v1h-1zM492 322h1v1h-1zM522 322h1v1h-1zM530 322h8v1h-8zM582 322h1v1h-1zM17 323h1v1h-1zM61 323h1v1h-1zM76 323h1v1h-1zM107 323h1v1h-1zM491 323h1v1h-1zM522 323h1v1h-1zM537 323h1v1h-1zM581 323h1v1h-1zM17 324h1v1h-1zM61 324h1v1h-1zM76 324h1v1h-1zM107 324h1v1h-1zM491 324h1v1h-1zM522 324h1v1h-1zM537 324h1v1h-1zM581 324h1v1h-1zM17 325h1v1h-1zM61 325h1v1h-1zM76 325h1v1h-1zM107 325h1v1h-1zM491 325h1v1h-1zM522 325h1v1h-1zM537 325h1v1h-1zM581 325h1v1h-1zM17 326h1v1h-1zM61 326h1v1h-1zM77 326h1v1h-1zM107 326h1v1h-1zM491 326h1v1h-1zM521 326h1v1h-1zM537 326h1v1h-1zM581 326h1v1h-1zM17 327h1v1h-1zM61 327h1v1h-1zM77 327h1v1h-1zM107 327h1v1h-1zM491 327h1v1h-1zM521 327h1v1h-1zM537 327h1v1h-1zM581 327h1v1h-1zM17 328h1v1h-1zM62 328h1v1h-1zM77 328h1v1h-1zM107 328h1v1h-1zM491 328h1v1h-1zM521 328h1v1h-1zM536 328h1v1h-1zM581 328h1v1h-1zM17 329h1v1h-1zM62 329h1v1h-1zM77 329h1v1h-1zM108 329h1v1h-1zM490 329h1v1h-1zM521 329h1v1h-1zM536 329h1v1h-1zM581 329h1v1h-1zM17 330h1v1h-1zM62 330h1v1h-1zM77 330h1v1h-1zM108 330h1v1h-1zM490 330h1v1h-1zM521 330h1v1h-1zM536 330h1v1h-1zM581 330h1v1h-1zM17 331h1v1h-1zM62 331h1v1h-1zM77 331h1v1h-1zM108 331h1v1h-1zM490 331h1v1h-1zM521 331h1v1h-1zM536 331h1v1h-1zM581 331h1v1h-1zM17 332h1v1h-1zM62 332h1v1h-1zM77 332h1v1h-1zM108 332h1v1h-1zM490 332h1v1h-1zM521 332h1v1h-1zM536 332h1v1h-1zM581 332h1v1h-1zM18 333h1v1h-1zM62 333h1v1h-1zM77 333h1v1h-1zM108 333h1v1h-1zM490 333h1v1h-1zM521 333h1v1h-1zM536 333h1v1h-1zM580 333h1v1h-1zM18 334h1v1h-1zM63 334h1v1h-1zM78 334h1v1h-1zM108 334h1v1h-1zM490 334h1v1h-1zM520 334h1v1h-1zM535 334h1v1h-1zM580 334h1v1h-1zM18 335h1v1h-1zM63 335h1v1h-1zM74 335h5v1h-5zM108 335h1v1h-1zM490 335h1v1h-1zM520 335h1v1h-1zM535 335h1v1h-1zM580 335h1v1h-1zM18 336h1v1h-1zM63 336h1v1h-1zM68 336h6v1h-6zM78 336h1v1h-1zM109 336h1v1h-1zM489 336h1v1h-1zM520 336h1v1h-1zM535 336h1v1h-1zM580 336h1v1h-1zM18 337h1v1h-1zM63 337h5v1h-5zM78 337h1v1h-1zM109 337h1v1h-1zM489 337h1v1h-1zM520 337h1v1h-1zM535 337h1v1h-1zM580 337h1v1h-1zM18 338h1v1h-1zM64 338h1v1h-1zM78 338h1v1h-1zM109 338h1v1h-1zM489 338h1v1h-1zM520 338h1v1h-1zM534 338h1v1h-1zM580 338h1v1h-1zM18 339h1v1h-1zM64 339h1v1h-1zM79 339h1v1h-1zM109 339h1v1h-1zM489 339h1v1h-1zM519 339h1v1h-1zM534 339h1v1h-1zM580 339h1v1h-1zM18 340h1v1h-1zM64 340h1v1h-1zM79 340h1v1h-1zM109 340h1v1h-1zM489 340h1v1h-1zM519 340h4v1h-4zM534 340h1v1h-1zM580 340h1v1h-1zM18 341h1v1h-1zM64 341h1v1h-1zM79 341h1v1h-1zM110 341h1v1h-1zM488 341h1v1h-1zM519 341h1v1h-1zM523 341h4v1h-4zM534 341h1v1h-1zM580 341h1v1h-1zM18 342h1v1h-1zM64 342h1v1h-1zM79 342h1v1h-1zM110 342h1v1h-1zM488 342h1v1h-1zM519 342h1v1h-1zM527 342h4v1h-4zM534 342h1v1h-1zM580 342h1v1h-1zM19 343h1v1h-1zM64 343h1v1h-1zM80 343h1v1h-1zM110 343h1v1h-1zM488 343h1v1h-1zM518 343h1v1h-1zM531 343h4v1h-4zM579 343h1v1h-1zM19 344h1v1h-1zM65 344h1v1h-1zM80 344h1v1h-1zM110 344h1v1h-1zM488 344h1v1h-1zM518 344h1v1h-1zM533 344h1v1h-1zM579 344h1v1h-1zM19 345h1v1h-1zM65 345h1v1h-1zM80 345h1v1h-1zM111 345h1v1h-1zM487 345h1v1h-1zM518 345h1v1h-1zM533 345h1v1h-1zM579 345h1v1h-1zM19 346h1v1h-1zM65 346h1v1h-1zM80 346h1v1h-1zM111 346h1v1h-1zM487 346h1v1h-1zM518 346h1v1h-1zM533 346h1v1h-1zM579 346h1v1h-1zM19 347h1v1h-1zM65 347h1v1h-1zM81 347h1v1h-1zM111 347h1v1h-1zM487 347h1v1h-1zM517 347h1v1h-1zM533 347h1v1h-1zM579 347h1v1h-1zM19 348h1v1h-1zM65 348h1v1h-1zM81 348h1v1h-1zM112 348h1v1h-1zM486 348h1v1h-1zM517 348h1v1h-1zM533 348h1v1h-1zM579 348h1v1h-1zM19 349h1v1h-1zM65 349h1v1h-1zM81 349h1v1h-1zM112 349h1v1h-1zM486 349h1v1h-1zM517 349h1v1h-1zM533 349h1v1h-1zM579 349h1v1h-1zM19 350h1v1h-1zM66 350h1v1h-1zM81 350h1v1h-1zM112 350h1v1h-1zM486 350h1v1h-1zM517 350h1v1h-1zM532 350h1v1h-1zM579 350h1v1h-1zM20 351h1v1h-1zM66 351h1v1h-1zM82 351h1v1h-1zM113 351h1v1h-1zM485 351h1v1h-1zM516 351h1v1h-1zM532 351h1v1h-1zM578 351h1v1h-1zM20 352h1v1h-1zM66 352h1v1h-1zM82 352h1v1h-1zM113 352h1v1h-1zM485 352h1v1h-1zM516 352h1v1h-1zM532 352h1v1h-1zM578 352h1v1h-1zM20 353h1v1h-1zM66 353h1v1h-1zM82 353h1v1h-1zM113 353h1v1h-1zM485 353h1v1h-1zM516 353h1v1h-1zM532 353h1v1h-1zM578 353h1v1h-1zM20 354h1v1h-1zM67 354h1v1h-1zM80 354h3v1h-3zM114 354h1v1h-1zM484 354h1v1h-1zM516 354h1v1h-1zM531 354h1v1h-1zM578 354h1v1h-1zM20 355h1v1h-1zM67 355h1v1h-1zM77 355h3v1h-3zM83 355h1v1h-1zM114 355h1v1h-1zM484 355h1v1h-1zM515 355h1v1h-1zM531 355h1v1h-1zM578 355h1v1h-1zM21 356h1v1h-1zM67 356h1v1h-1zM73 356h4v1h-4zM83 356h1v1h-1zM114 356h1v1h-1zM484 356h1v1h-1zM515 356h1v1h-1zM531 356h1v1h-1zM577 356h1v1h-1zM21 357h1v1h-1zM67 357h1v1h-1zM70 357h3v1h-3zM83 357h1v1h-1zM114 357h1v1h-1zM484 357h1v1h-1zM515 357h1v1h-1zM531 357h1v1h-1zM577 357h1v1h-1zM21 358h1v1h-1zM67 358h3v1h-3zM83 358h1v1h-1zM115 358h1v1h-1zM483 358h1v1h-1zM515 358h1v1h-1zM531 358h1v1h-1zM577 358h1v1h-1zM21 359h1v1h-1zM68 359h1v1h-1zM84 359h1v1h-1zM115 359h1v1h-1zM483 359h1v1h-1zM514 359h3v1h-3zM530 359h1v1h-1zM577 359h1v1h-1zM21 360h1v1h-1zM68 360h1v1h-1zM84 360h1v1h-1zM115 360h1v1h-1zM483 360h1v1h-1zM514 360h1v1h-1zM517 360h4v1h-4zM530 360h1v1h-1zM577 360h1v1h-1zM22 361h1v1h-1zM68 361h1v1h-1zM84 361h1v1h-1zM116 361h1v1h-1zM482 361h1v1h-1zM514 361h1v1h-1zM521 361h3v1h-3zM530 361h1v1h-1zM576 361h1v1h-1zM22 362h1v1h-1zM68 362h1v1h-1zM85 362h1v1h-1zM116 362h1v1h-1zM482 362h1v1h-1zM513 362h1v1h-1zM524 362h4v1h-4zM530 362h1v1h-1zM576 362h1v1h-1zM22 363h1v1h-1zM69 363h1v1h-1zM85 363h1v1h-1zM116 363h1v1h-1zM482 363h1v1h-1zM513 363h1v1h-1zM528 363h2v1h-2zM576 363h1v1h-1zM22 364h1v1h-1zM69 364h1v1h-1zM85 364h1v1h-1zM117 364h1v1h-1zM481 364h1v1h-1zM513 364h1v1h-1zM529 364h1v1h-1zM576 364h1v1h-1zM23 365h1v1h-1zM69 365h1v1h-1zM85 365h1v1h-1zM117 365h1v1h-1zM481 365h1v1h-1zM513 365h1v1h-1zM529 365h1v1h-1zM575 365h1v1h-1zM23 366h1v1h-1zM69 366h1v1h-1zM86 366h1v1h-1zM117 366h1v1h-1zM481 366h1v1h-1zM512 366h1v1h-1zM529 366h1v1h-1zM575 366h1v1h-1zM23 367h1v1h-1zM70 367h1v1h-1zM86 367h1v1h-1zM118 367h1v1h-1zM480 367h1v1h-1zM512 367h1v1h-1zM528 367h1v1h-1zM575 367h1v1h-1zM23 368h1v1h-1zM70 368h1v1h-1zM86 368h1v1h-1zM118 368h1v1h-1zM480 368h1v1h-1zM512 368h1v1h-1zM528 368h1v1h-1zM575 368h1v1h-1zM24 369h1v1h-1zM71 369h1v1h-1zM86 369h1v1h-1zM118 369h1v1h-1zM480 369h1v1h-1zM512 369h1v1h-1zM527 369h1v1h-1zM574 369h1v1h-1zM24 370h1v1h-1zM71 370h1v1h-1zM87 370h1v1h-1zM119 370h1v1h-1zM479 370h1v1h-1zM511 370h1v1h-1zM527 370h1v1h-1zM574 370h1v1h-1zM24 371h1v1h-1zM71 371h1v1h-1zM87 371h1v1h-1zM119 371h1v1h-1zM479 371h1v1h-1zM511 371h1v1h-1zM527 371h1v1h-1zM574 371h1v1h-1zM25 372h1v1h-1zM72 372h1v1h-1zM88 372h1v1h-1zM119 372h1v1h-1zM479 372h1v1h-1zM510 372h1v1h-1zM526 372h1v1h-1zM573 372h1v1h-1zM25 373h1v1h-1zM72 373h1v1h-1zM86 373h3v1h-3zM120 373h1v1h-1zM478 373h1v1h-1zM510 373h1v1h-1zM526 373h1v1h-1zM573 373h1v1h-1zM25 374h1v1h-1zM72 374h1v1h-1zM84 374h2v1h-2zM89 374h1v1h-1zM120 374h1v1h-1zM478 374h1v1h-1zM509 374h1v1h-1zM526 374h1v1h-1zM573 374h1v1h-1zM25 375h1v1h-1zM73 375h1v1h-1zM81 375h3v1h-3zM89 375h1v1h-1zM121 375h1v1h-1zM477 375h1v1h-1zM509 375h1v1h-1zM525 375h1v1h-1zM573 375h1v1h-1zM26 376h1v1h-1zM73 376h1v1h-1zM78 376h3v1h-3zM89 376h1v1h-1zM121 376h1v1h-1zM477 376h1v1h-1zM509 376h1v1h-1zM525 376h1v1h-1zM572 376h1v1h-1zM26 377h1v1h-1zM73 377h1v1h-1zM76 377h2v1h-2zM90 377h1v1h-1zM122 377h1v1h-1zM476 377h1v1h-1zM508 377h1v1h-1zM525 377h1v1h-1zM572 377h1v1h-1zM26 378h1v1h-1zM73 378h3v1h-3zM90 378h1v1h-1zM122 378h1v1h-1zM476 378h1v1h-1zM508 378h3v1h-3zM525 378h1v1h-1zM572 378h1v1h-1zM27 379h1v1h-1zM74 379h1v1h-1zM90 379h1v1h-1zM123 379h1v1h-1zM475 379h1v1h-1zM508 379h1v1h-1zM511 379h2v1h-2zM524 379h1v1h-1zM571 379h1v1h-1zM27 380h1v1h-1zM74 380h1v1h-1zM90 380h1v1h-1zM123 380h1v1h-1zM475 380h1v1h-1zM508 380h1v1h-1zM513 380h3v1h-3zM524 380h1v1h-1zM571 380h1v1h-1zM27 381h1v1h-1zM74 381h1v1h-1zM91 381h1v1h-1zM124 381h1v1h-1zM474 381h1v1h-1zM507 381h1v1h-1zM516 381h3v1h-3zM524 381h1v1h-1zM571 381h1v1h-1zM28 382h1v1h-1zM75 382h1v1h-1zM91 382h1v1h-1zM124 382h1v1h-1zM474 382h1v1h-1zM507 382h1v1h-1zM519 382h2v1h-2zM523 382h1v1h-1zM570 382h1v1h-1zM28 383h1v1h-1zM75 383h1v1h-1zM91 383h1v1h-1zM125 383h1v1h-1zM473 383h1v1h-1zM507 383h1v1h-1zM521 383h3v1h-3zM570 383h1v1h-1zM28 384h1v1h-1zM76 384h1v1h-1zM91 384h1v1h-1zM474 384h1v1h-1zM507 384h1v1h-1zM522 384h1v1h-1zM570 384h1v1h-1zM29 385h1v1h-1zM76 385h1v1h-1zM92 385h1v1h-1zM124 385h1v1h-1zM126 385h1v1h-1zM472 385h1v1h-1zM475 385h2v1h-2zM506 385h1v1h-1zM522 385h1v1h-1zM569 385h1v1h-1zM29 386h1v1h-1zM76 386h1v1h-1zM92 386h1v1h-1zM122 386h2v1h-2zM126 386h1v1h-1zM472 386h1v1h-1zM477 386h2v1h-2zM506 386h1v1h-1zM522 386h1v1h-1zM569 386h1v1h-1zM29 387h1v1h-1zM77 387h1v1h-1zM93 387h1v1h-1zM120 387h2v1h-2zM127 387h1v1h-1zM471 387h1v1h-1zM479 387h2v1h-2zM505 387h1v1h-1zM521 387h1v1h-1zM569 387h1v1h-1zM30 388h1v1h-1zM77 388h1v1h-1zM93 388h1v1h-1zM118 388h2v1h-2zM127 388h1v1h-1zM471 388h1v1h-1zM481 388h2v1h-2zM505 388h1v1h-1zM521 388h1v1h-1zM568 388h1v1h-1zM30 389h1v1h-1zM78 389h1v1h-1zM94 389h1v1h-1zM116 389h2v1h-2zM128 389h1v1h-1zM470 389h1v1h-1zM483 389h2v1h-2zM504 389h1v1h-1zM520 389h1v1h-1zM568 389h1v1h-1zM30 390h1v1h-1zM78 390h1v1h-1zM94 390h1v1h-1zM114 390h2v1h-2zM128 390h1v1h-1zM470 390h1v1h-1zM485 390h2v1h-2zM504 390h1v1h-1zM520 390h1v1h-1zM568 390h1v1h-1zM31 391h1v1h-1zM79 391h1v1h-1zM93 391h3v1h-3zM112 391h2v1h-2zM129 391h1v1h-1zM469 391h1v1h-1zM487 391h2v1h-2zM503 391h1v1h-1zM519 391h1v1h-1zM567 391h1v1h-1zM31 392h1v1h-1zM79 392h1v1h-1zM91 392h2v1h-2zM95 392h1v1h-1zM110 392h2v1h-2zM129 392h1v1h-1zM469 392h1v1h-1zM489 392h2v1h-2zM503 392h1v1h-1zM519 392h1v1h-1zM567 392h1v1h-1zM31 393h1v1h-1zM80 393h1v1h-1zM89 393h2v1h-2zM96 393h1v1h-1zM108 393h2v1h-2zM130 393h1v1h-1zM468 393h1v1h-1zM491 393h2v1h-2zM502 393h1v1h-1zM518 393h1v1h-1zM567 393h1v1h-1zM31 394h1v1h-1zM80 394h1v1h-1zM87 394h2v1h-2zM96 394h1v1h-1zM106 394h2v1h-2zM130 394h1v1h-1zM468 394h1v1h-1zM493 394h2v1h-2zM502 394h1v1h-1zM518 394h1v1h-1zM567 394h1v1h-1zM32 395h1v1h-1zM81 395h1v1h-1zM85 395h2v1h-2zM97 395h1v1h-1zM104 395h2v1h-2zM131 395h1v1h-1zM467 395h1v1h-1zM495 395h2v1h-2zM501 395h1v1h-1zM517 395h1v1h-1zM566 395h1v1h-1zM32 396h1v1h-1zM81 396h1v1h-1zM83 396h2v1h-2zM97 396h1v1h-1zM102 396h2v1h-2zM131 396h1v1h-1zM467 396h1v1h-1zM497 396h2v1h-2zM501 396h2v1h-2zM517 396h1v1h-1zM566 396h1v1h-1zM32 397h1v1h-1zM81 397h2v1h-2zM98 397h1v1h-1zM100 397h2v1h-2zM132 397h1v1h-1zM466 397h1v1h-1zM499 397h2v1h-2zM503 397h2v1h-2zM517 397h1v1h-1zM566 397h1v1h-1zM33 398h1v1h-1zM82 398h1v1h-1zM98 398h2v1h-2zM132 398h1v1h-1zM466 398h1v1h-1zM500 398h1v1h-1zM505 398h2v1h-2zM516 398h1v1h-1zM565 398h1v1h-1zM33 399h1v1h-1zM82 399h1v1h-1zM99 399h1v1h-1zM133 399h1v1h-1zM465 399h1v1h-1zM499 399h1v1h-1zM507 399h2v1h-2zM516 399h1v1h-1zM565 399h1v1h-1zM34 400h1v1h-1zM83 400h1v1h-1zM99 400h1v1h-1zM134 400h1v1h-1zM464 400h1v1h-1zM499 400h1v1h-1zM509 400h2v1h-2zM515 400h1v1h-1zM564 400h1v1h-1zM34 401h1v1h-1zM83 401h1v1h-1zM100 401h1v1h-1zM134 401h1v1h-1zM464 401h1v1h-1zM498 401h1v1h-1zM511 401h2v1h-2zM515 401h1v1h-1zM564 401h1v1h-1zM35 402h1v1h-1zM84 402h1v1h-1zM100 402h1v1h-1zM135 402h1v1h-1zM463 402h1v1h-1zM498 402h1v1h-1zM513 402h2v1h-2zM563 402h1v1h-1zM35 403h1v1h-1zM84 403h1v1h-1zM101 403h1v1h-1zM136 403h1v1h-1zM462 403h1v1h-1zM497 403h1v1h-1zM514 403h1v1h-1zM563 403h1v1h-1zM36 404h1v1h-1zM85 404h1v1h-1zM101 404h1v1h-1zM136 404h1v1h-1zM462 404h1v1h-1zM497 404h1v1h-1zM513 404h1v1h-1zM562 404h1v1h-1zM36 405h1v1h-1zM85 405h1v1h-1zM102 405h1v1h-1zM137 405h1v1h-1zM461 405h1v1h-1zM496 405h1v1h-1zM513 405h1v1h-1zM562 405h1v1h-1zM36 406h1v1h-1zM86 406h1v1h-1zM102 406h1v1h-1zM137 406h1v1h-1zM461 406h1v1h-1zM496 406h1v1h-1zM512 406h1v1h-1zM562 406h1v1h-1zM37 407h1v1h-1zM86 407h1v1h-1zM103 407h1v1h-1zM138 407h1v1h-1zM460 407h1v1h-1zM495 407h1v1h-1zM512 407h1v1h-1zM561 407h1v1h-1zM37 408h1v1h-1zM87 408h1v1h-1zM103 408h1v1h-1zM139 408h1v1h-1zM459 408h1v1h-1zM495 408h1v1h-1zM511 408h1v1h-1zM561 408h1v1h-1zM38 409h1v1h-1zM87 409h1v1h-1zM103 409h2v1h-2zM139 409h1v1h-1zM459 409h1v1h-1zM494 409h1v1h-1zM511 409h1v1h-1zM560 409h1v1h-1zM38 410h1v1h-1zM88 410h1v1h-1zM101 410h2v1h-2zM104 410h1v1h-1zM140 410h1v1h-1zM458 410h1v1h-1zM494 410h1v1h-1zM510 410h1v1h-1zM560 410h1v1h-1zM39 411h1v1h-1zM88 411h1v1h-1zM99 411h2v1h-2zM105 411h1v1h-1zM141 411h1v1h-1zM457 411h1v1h-1zM493 411h1v1h-1zM510 411h1v1h-1zM559 411h1v1h-1zM39 412h1v1h-1zM89 412h1v1h-1zM97 412h2v1h-2zM106 412h1v1h-1zM141 412h1v1h-1zM457 412h1v1h-1zM492 412h1v1h-1zM509 412h1v1h-1zM559 412h1v1h-1zM40 413h1v1h-1zM89 413h1v1h-1zM96 413h1v1h-1zM106 413h1v1h-1zM142 413h1v1h-1zM456 413h1v1h-1zM492 413h1v1h-1zM509 413h1v1h-1zM558 413h1v1h-1zM40 414h1v1h-1zM90 414h1v1h-1zM94 414h2v1h-2zM107 414h1v1h-1zM143 414h1v1h-1zM455 414h1v1h-1zM491 414h1v1h-1zM493 414h2v1h-2zM508 414h1v1h-1zM558 414h1v1h-1zM40 415h1v1h-1zM90 415h1v1h-1zM92 415h2v1h-2zM108 415h1v1h-1zM144 415h1v1h-1zM454 415h1v1h-1zM490 415h1v1h-1zM495 415h2v1h-2zM508 415h1v1h-1zM558 415h1v1h-1zM41 416h1v1h-1zM90 416h2v1h-2zM108 416h1v1h-1zM144 416h1v1h-1zM454 416h1v1h-1zM490 416h1v1h-1zM497 416h1v1h-1zM507 416h1v1h-1zM557 416h1v1h-1zM41 417h1v1h-1zM88 417h2v1h-2zM91 417h1v1h-1zM109 417h1v1h-1zM145 417h1v1h-1zM453 417h1v1h-1zM489 417h1v1h-1zM498 417h2v1h-2zM507 417h1v1h-1zM557 417h1v1h-1zM42 418h1v1h-1zM86 418h2v1h-2zM92 418h1v1h-1zM110 418h1v1h-1zM146 418h1v1h-1zM452 418h1v1h-1zM488 418h1v1h-1zM500 418h2v1h-2zM506 418h1v1h-1zM556 418h1v1h-1zM42 419h1v1h-1zM84 419h2v1h-2zM93 419h1v1h-1zM110 419h1v1h-1zM147 419h1v1h-1zM451 419h1v1h-1zM488 419h1v1h-1zM502 419h2v1h-2zM505 419h1v1h-1zM556 419h1v1h-1zM43 420h1v1h-1zM83 420h1v1h-1zM93 420h1v1h-1zM111 420h1v1h-1zM148 420h1v1h-1zM450 420h1v1h-1zM487 420h1v1h-1zM504 420h2v1h-2zM555 420h1v1h-1zM43 421h1v1h-1zM81 421h2v1h-2zM94 421h1v1h-1zM111 421h1v1h-1zM149 421h1v1h-1zM449 421h1v1h-1zM487 421h1v1h-1zM504 421h2v1h-2zM555 421h1v1h-1zM44 422h1v1h-1zM79 422h2v1h-2zM94 422h1v1h-1zM112 422h1v1h-1zM149 422h1v1h-1zM449 422h1v1h-1zM486 422h1v1h-1zM504 422h1v1h-1zM506 422h2v1h-2zM554 422h1v1h-1zM44 423h1v1h-1zM78 423h1v1h-1zM95 423h1v1h-1zM112 423h1v1h-1zM150 423h1v1h-1zM448 423h1v1h-1zM486 423h1v1h-1zM503 423h1v1h-1zM508 423h2v1h-2zM554 423h1v1h-1zM44 424h1v1h-1zM76 424h2v1h-2zM95 424h1v1h-1zM113 424h1v1h-1zM151 424h1v1h-1zM447 424h1v1h-1zM485 424h1v1h-1zM503 424h1v1h-1zM510 424h2v1h-2zM554 424h1v1h-1zM45 425h1v1h-1zM74 425h2v1h-2zM96 425h1v1h-1zM114 425h1v1h-1zM152 425h1v1h-1zM446 425h1v1h-1zM484 425h1v1h-1zM502 425h1v1h-1zM512 425h1v1h-1zM553 425h1v1h-1zM45 426h1v1h-1zM72 426h2v1h-2zM97 426h1v1h-1zM113 426h1v1h-1zM115 426h1v1h-1zM153 426h1v1h-1zM445 426h1v1h-1zM483 426h1v1h-1zM501 426h1v1h-1zM513 426h2v1h-2zM553 426h1v1h-1zM46 427h1v1h-1zM71 427h1v1h-1zM97 427h1v1h-1zM111 427h2v1h-2zM116 427h1v1h-1zM153 427h1v1h-1zM445 427h1v1h-1zM482 427h1v1h-1zM501 427h1v1h-1zM515 427h2v1h-2zM552 427h1v1h-1zM46 428h1v1h-1zM69 428h2v1h-2zM98 428h1v1h-1zM110 428h1v1h-1zM116 428h1v1h-1zM154 428h1v1h-1zM444 428h1v1h-1zM482 428h1v1h-1zM500 428h1v1h-1zM517 428h1v1h-1zM552 428h1v1h-1zM47 429h1v1h-1zM67 429h2v1h-2zM99 429h1v1h-1zM108 429h2v1h-2zM117 429h1v1h-1zM155 429h1v1h-1zM443 429h1v1h-1zM481 429h1v1h-1zM499 429h1v1h-1zM518 429h2v1h-2zM551 429h1v1h-1zM47 430h1v1h-1zM65 430h2v1h-2zM100 430h1v1h-1zM106 430h2v1h-2zM118 430h1v1h-1zM156 430h1v1h-1zM442 430h1v1h-1zM480 430h1v1h-1zM482 430h1v1h-1zM498 430h1v1h-1zM520 430h2v1h-2zM551 430h1v1h-1zM48 431h1v1h-1zM64 431h1v1h-1zM100 431h1v1h-1zM105 431h1v1h-1zM119 431h1v1h-1zM157 431h1v1h-1zM441 431h1v1h-1zM479 431h1v1h-1zM483 431h2v1h-2zM498 431h1v1h-1zM522 431h2v1h-2zM550 431h1v1h-1zM48 432h1v1h-1zM62 432h2v1h-2zM101 432h1v1h-1zM103 432h2v1h-2zM119 432h1v1h-1zM158 432h1v1h-1zM440 432h1v1h-1zM479 432h1v1h-1zM485 432h1v1h-1zM497 432h1v1h-1zM524 432h1v1h-1zM550 432h1v1h-1zM49 433h1v1h-1zM60 433h2v1h-2zM102 433h1v1h-1zM120 433h1v1h-1zM159 433h1v1h-1zM439 433h1v1h-1zM478 433h1v1h-1zM486 433h1v1h-1zM496 433h1v1h-1zM525 433h2v1h-2zM549 433h1v1h-1zM49 434h1v1h-1zM59 434h1v1h-1zM102 434h1v1h-1zM121 434h1v1h-1zM160 434h1v1h-1zM438 434h1v1h-1zM477 434h1v1h-1zM487 434h2v1h-2zM496 434h1v1h-1zM527 434h2v1h-2zM549 434h1v1h-1zM50 435h1v1h-1zM57 435h2v1h-2zM103 435h1v1h-1zM122 435h1v1h-1zM161 435h1v1h-1zM437 435h1v1h-1zM476 435h1v1h-1zM489 435h1v1h-1zM495 435h1v1h-1zM529 435h2v1h-2zM548 435h1v1h-1zM50 436h1v1h-1zM55 436h2v1h-2zM104 436h1v1h-1zM122 436h1v1h-1zM162 436h1v1h-1zM436 436h1v1h-1zM476 436h1v1h-1zM490 436h1v1h-1zM494 436h1v1h-1zM531 436h1v1h-1zM548 436h1v1h-1zM51 437h1v1h-1zM53 437h2v1h-2zM105 437h1v1h-1zM123 437h1v1h-1zM163 437h1v1h-1zM435 437h1v1h-1zM475 437h1v1h-1zM491 437h3v1h-3zM532 437h2v1h-2zM547 437h1v1h-1zM51 438h2v1h-2zM105 438h1v1h-1zM124 438h1v1h-1zM164 438h1v1h-1zM434 438h1v1h-1zM474 438h1v1h-1zM493 438h1v1h-1zM534 438h2v1h-2zM547 438h1v1h-1zM52 439h1v1h-1zM106 439h1v1h-1zM125 439h1v1h-1zM165 439h1v1h-1zM433 439h1v1h-1zM473 439h1v1h-1zM492 439h1v1h-1zM536 439h1v1h-1zM546 439h1v1h-1zM52 440h1v1h-1zM107 440h1v1h-1zM126 440h1v1h-1zM166 440h1v1h-1zM432 440h1v1h-1zM472 440h1v1h-1zM491 440h1v1h-1zM537 440h2v1h-2zM546 440h1v1h-1zM53 441h1v1h-1zM107 441h1v1h-1zM125 441h2v1h-2zM167 441h1v1h-1zM431 441h1v1h-1zM472 441h1v1h-1zM491 441h1v1h-1zM539 441h2v1h-2zM545 441h1v1h-1zM54 442h1v1h-1zM108 442h1v1h-1zM124 442h1v1h-1zM127 442h1v1h-1zM168 442h1v1h-1zM430 442h1v1h-1zM471 442h1v1h-1zM490 442h1v1h-1zM541 442h2v1h-2zM544 442h1v1h-1zM54 443h1v1h-1zM109 443h1v1h-1zM123 443h1v1h-1zM128 443h1v1h-1zM169 443h1v1h-1zM429 443h1v1h-1zM470 443h1v1h-1zM489 443h1v1h-1zM543 443h2v1h-2zM55 444h1v1h-1zM110 444h1v1h-1zM122 444h1v1h-1zM129 444h1v1h-1zM170 444h1v1h-1zM428 444h1v1h-1zM469 444h1v1h-1zM488 444h1v1h-1zM543 444h1v1h-1zM56 445h1v1h-1zM110 445h1v1h-1zM120 445h2v1h-2zM130 445h1v1h-1zM171 445h2v1h-2zM426 445h2v1h-2zM468 445h2v1h-2zM488 445h1v1h-1zM542 445h1v1h-1zM56 446h1v1h-1zM111 446h1v1h-1zM119 446h1v1h-1zM131 446h1v1h-1zM173 446h1v1h-1zM425 446h1v1h-1zM467 446h1v1h-1zM470 446h1v1h-1zM487 446h1v1h-1zM542 446h1v1h-1zM57 447h1v1h-1zM112 447h1v1h-1zM118 447h1v1h-1zM131 447h1v1h-1zM174 447h1v1h-1zM424 447h1v1h-1zM467 447h1v1h-1zM471 447h2v1h-2zM486 447h1v1h-1zM541 447h1v1h-1zM57 448h1v1h-1zM113 448h1v1h-1zM117 448h1v1h-1zM132 448h1v1h-1zM175 448h1v1h-1zM423 448h1v1h-1zM466 448h1v1h-1zM473 448h1v1h-1zM485 448h1v1h-1zM541 448h1v1h-1zM58 449h1v1h-1zM114 449h1v1h-1zM116 449h1v1h-1zM133 449h1v1h-1zM176 449h1v1h-1zM421 449h2v1h-2zM465 449h1v1h-1zM474 449h1v1h-1zM484 449h1v1h-1zM540 449h1v1h-1zM59 450h1v1h-1zM114 450h2v1h-2zM134 450h1v1h-1zM177 450h2v1h-2zM420 450h1v1h-1zM464 450h1v1h-1zM475 450h1v1h-1zM484 450h1v1h-1zM539 450h1v1h-1zM59 451h1v1h-1zM115 451h1v1h-1zM135 451h1v1h-1zM179 451h1v1h-1zM419 451h1v1h-1zM463 451h1v1h-1zM476 451h1v1h-1zM483 451h1v1h-1zM539 451h1v1h-1zM60 452h1v1h-1zM116 452h1v1h-1zM136 452h1v1h-1zM180 452h1v1h-1zM418 452h1v1h-1zM462 452h1v1h-1zM477 452h2v1h-2zM482 452h1v1h-1zM538 452h1v1h-1zM61 453h1v1h-1zM117 453h1v1h-1zM137 453h1v1h-1zM181 453h1v1h-1zM417 453h1v1h-1zM461 453h1v1h-1zM479 453h1v1h-1zM481 453h1v1h-1zM537 453h1v1h-1zM61 454h1v1h-1zM118 454h1v1h-1zM138 454h1v1h-1zM182 454h2v1h-2zM415 454h2v1h-2zM460 454h1v1h-1zM480 454h1v1h-1zM537 454h1v1h-1zM62 455h1v1h-1zM119 455h1v1h-1zM139 455h1v1h-1zM184 455h1v1h-1zM414 455h1v1h-1zM459 455h1v1h-1zM479 455h1v1h-1zM536 455h1v1h-1zM63 456h1v1h-1zM119 456h1v1h-1zM138 456h1v1h-1zM140 456h1v1h-1zM185 456h1v1h-1zM413 456h1v1h-1zM458 456h1v1h-1zM479 456h1v1h-1zM535 456h1v1h-1zM63 457h1v1h-1zM120 457h1v1h-1zM137 457h1v1h-1zM141 457h1v1h-1zM186 457h2v1h-2zM411 457h2v1h-2zM457 457h1v1h-1zM478 457h1v1h-1zM535 457h1v1h-1zM64 458h1v1h-1zM121 458h1v1h-1zM136 458h1v1h-1zM142 458h1v1h-1zM188 458h1v1h-1zM410 458h1v1h-1zM456 458h1v1h-1zM477 458h1v1h-1zM534 458h1v1h-1zM65 459h1v1h-1zM122 459h1v1h-1zM135 459h1v1h-1zM143 459h1v1h-1zM189 459h2v1h-2zM408 459h2v1h-2zM455 459h1v1h-1zM476 459h1v1h-1zM533 459h1v1h-1zM65 460h1v1h-1zM123 460h1v1h-1zM134 460h1v1h-1zM144 460h1v1h-1zM191 460h1v1h-1zM407 460h1v1h-1zM454 460h1v1h-1zM456 460h1v1h-1zM475 460h1v1h-1zM533 460h1v1h-1zM66 461h1v1h-1zM124 461h1v1h-1zM133 461h1v1h-1zM145 461h1v1h-1zM192 461h1v1h-1zM405 461h2v1h-2zM453 461h1v1h-1zM457 461h1v1h-1zM474 461h1v1h-1zM532 461h1v1h-1zM67 462h1v1h-1zM125 462h1v1h-1zM132 462h1v1h-1zM146 462h1v1h-1zM192 462h1v1h-1zM194 462h2v1h-2zM403 462h2v1h-2zM407 462h1v1h-1zM452 462h1v1h-1zM458 462h1v1h-1zM473 462h1v1h-1zM531 462h1v1h-1zM67 463h1v1h-1zM125 463h1v1h-1zM131 463h1v1h-1zM147 463h1v1h-1zM191 463h1v1h-1zM196 463h1v1h-1zM402 463h1v1h-1zM407 463h1v1h-1zM451 463h1v1h-1zM459 463h1v1h-1zM473 463h1v1h-1zM531 463h1v1h-1zM68 464h1v1h-1zM126 464h1v1h-1zM130 464h1v1h-1zM148 464h1v1h-1zM191 464h1v1h-1zM197 464h2v1h-2zM400 464h2v1h-2zM408 464h1v1h-1zM450 464h1v1h-1zM460 464h1v1h-1zM472 464h1v1h-1zM530 464h1v1h-1zM68 465h1v1h-1zM127 465h1v1h-1zM129 465h1v1h-1zM149 465h1v1h-1zM190 465h1v1h-1zM199 465h1v1h-1zM399 465h1v1h-1zM409 465h1v1h-1zM449 465h1v1h-1zM461 465h1v1h-1zM471 465h1v1h-1zM530 465h1v1h-1zM69 466h1v1h-1zM128 466h1v1h-1zM150 466h1v1h-1zM189 466h1v1h-1zM200 466h2v1h-2zM397 466h2v1h-2zM409 466h1v1h-1zM448 466h1v1h-1zM462 466h1v1h-1zM470 466h1v1h-1zM529 466h1v1h-1zM70 467h1v1h-1zM129 467h1v1h-1zM151 467h1v1h-1zM189 467h1v1h-1zM202 467h1v1h-1zM395 467h2v1h-2zM410 467h1v1h-1zM446 467h2v1h-2zM463 467h1v1h-1zM469 467h1v1h-1zM528 467h1v1h-1zM71 468h1v1h-1zM130 468h1v1h-1zM152 468h2v1h-2zM188 468h1v1h-1zM203 468h2v1h-2zM393 468h2v1h-2zM411 468h1v1h-1zM445 468h1v1h-1zM464 468h1v1h-1zM468 468h1v1h-1zM527 468h1v1h-1zM71 469h1v1h-1zM131 469h1v1h-1zM153 469h2v1h-2zM187 469h1v1h-1zM205 469h2v1h-2zM391 469h2v1h-2zM411 469h1v1h-1zM444 469h1v1h-1zM465 469h1v1h-1zM467 469h1v1h-1zM527 469h1v1h-1zM72 470h1v1h-1zM132 470h1v1h-1zM152 470h1v1h-1zM155 470h1v1h-1zM187 470h1v1h-1zM207 470h2v1h-2zM389 470h2v1h-2zM412 470h1v1h-1zM443 470h1v1h-1zM466 470h1v1h-1zM526 470h1v1h-1zM73 471h1v1h-1zM133 471h1v1h-1zM151 471h1v1h-1zM156 471h1v1h-1zM186 471h1v1h-1zM209 471h2v1h-2zM387 471h2v1h-2zM413 471h1v1h-1zM442 471h1v1h-1zM465 471h1v1h-1zM525 471h1v1h-1zM74 472h1v1h-1zM134 472h1v1h-1zM151 472h1v1h-1zM157 472h1v1h-1zM185 472h1v1h-1zM211 472h2v1h-2zM385 472h2v1h-2zM413 472h1v1h-1zM440 472h2v1h-2zM464 472h1v1h-1zM524 472h1v1h-1zM74 473h1v1h-1zM135 473h1v1h-1zM150 473h1v1h-1zM158 473h2v1h-2zM185 473h1v1h-1zM213 473h2v1h-2zM383 473h2v1h-2zM414 473h1v1h-1zM439 473h1v1h-1zM441 473h1v1h-1zM462 473h2v1h-2zM524 473h1v1h-1zM75 474h1v1h-1zM136 474h2v1h-2zM149 474h1v1h-1zM160 474h1v1h-1zM184 474h1v1h-1zM215 474h2v1h-2zM381 474h2v1h-2zM415 474h1v1h-1zM438 474h1v1h-1zM442 474h1v1h-1zM461 474h1v1h-1zM523 474h1v1h-1zM76 475h1v1h-1zM138 475h1v1h-1zM148 475h1v1h-1zM161 475h1v1h-1zM183 475h1v1h-1zM217 475h2v1h-2zM379 475h2v1h-2zM415 475h1v1h-1zM437 475h1v1h-1zM443 475h1v1h-1zM460 475h1v1h-1zM522 475h1v1h-1zM77 476h1v1h-1zM139 476h1v1h-1zM147 476h1v1h-1zM162 476h2v1h-2zM183 476h1v1h-1zM219 476h3v1h-3zM377 476h2v1h-2zM416 476h1v1h-1zM435 476h2v1h-2zM444 476h1v1h-1zM459 476h1v1h-1zM521 476h1v1h-1zM78 477h1v1h-1zM140 477h1v1h-1zM146 477h1v1h-1zM164 477h1v1h-1zM182 477h1v1h-1zM222 477h2v1h-2zM375 477h2v1h-2zM417 477h1v1h-1zM434 477h1v1h-1zM445 477h1v1h-1zM458 477h1v1h-1zM520 477h1v1h-1zM79 478h1v1h-1zM141 478h1v1h-1zM146 478h1v1h-1zM165 478h1v1h-1zM181 478h1v1h-1zM224 478h2v1h-2zM373 478h2v1h-2zM417 478h1v1h-1zM433 478h1v1h-1zM446 478h1v1h-1zM457 478h1v1h-1zM519 478h1v1h-1zM80 479h1v1h-1zM142 479h2v1h-2zM145 479h1v1h-1zM166 479h2v1h-2zM181 479h1v1h-1zM226 479h3v1h-3zM370 479h3v1h-3zM418 479h1v1h-1zM431 479h2v1h-2zM446 479h1v1h-1zM455 479h2v1h-2zM518 479h1v1h-1zM81 480h1v1h-1zM144 480h1v1h-1zM168 480h1v1h-1zM180 480h1v1h-1zM229 480h3v1h-3zM367 480h3v1h-3zM419 480h1v1h-1zM430 480h1v1h-1zM447 480h1v1h-1zM454 480h1v1h-1zM517 480h1v1h-1zM82 481h1v1h-1zM145 481h1v1h-1zM169 481h1v1h-1zM179 481h1v1h-1zM232 481h3v1h-3zM364 481h3v1h-3zM419 481h1v1h-1zM429 481h1v1h-1zM448 481h1v1h-1zM453 481h1v1h-1zM516 481h1v1h-1zM83 482h1v1h-1zM146 482h1v1h-1zM168 482h1v1h-1zM170 482h1v1h-1zM179 482h1v1h-1zM235 482h3v1h-3zM361 482h3v1h-3zM420 482h1v1h-1zM427 482h2v1h-2zM449 482h1v1h-1zM452 482h1v1h-1zM515 482h1v1h-1zM84 483h1v1h-1zM147 483h1v1h-1zM167 483h1v1h-1zM171 483h2v1h-2zM178 483h1v1h-1zM238 483h3v1h-3zM358 483h3v1h-3zM421 483h1v1h-1zM426 483h1v1h-1zM450 483h2v1h-2zM514 483h1v1h-1zM84 484h1v1h-1zM148 484h1v1h-1zM167 484h1v1h-1zM173 484h1v1h-1zM177 484h1v1h-1zM241 484h4v1h-4zM354 484h4v1h-4zM421 484h1v1h-1zM425 484h1v1h-1zM449 484h2v1h-2zM514 484h1v1h-1zM85 485h1v1h-1zM149 485h2v1h-2zM166 485h1v1h-1zM174 485h1v1h-1zM177 485h1v1h-1zM245 485h3v1h-3zM351 485h3v1h-3zM422 485h1v1h-1zM424 485h1v1h-1zM426 485h1v1h-1zM448 485h1v1h-1zM513 485h1v1h-1zM86 486h1v1h-1zM151 486h1v1h-1zM165 486h1v1h-1zM175 486h2v1h-2zM248 486h3v1h-3zM348 486h3v1h-3zM422 486h2v1h-2zM427 486h1v1h-1zM447 486h1v1h-1zM512 486h1v1h-1zM87 487h1v1h-1zM152 487h1v1h-1zM164 487h1v1h-1zM177 487h2v1h-2zM251 487h3v1h-3zM345 487h3v1h-3zM420 487h2v1h-2zM427 487h1v1h-1zM446 487h1v1h-1zM511 487h1v1h-1zM87 488h1v1h-1zM153 488h2v1h-2zM164 488h1v1h-1zM179 488h2v1h-2zM254 488h4v1h-4zM341 488h4v1h-4zM418 488h2v1h-2zM428 488h1v1h-1zM444 488h2v1h-2zM511 488h1v1h-1zM88 489h1v1h-1zM155 489h1v1h-1zM163 489h1v1h-1zM181 489h1v1h-1zM258 489h5v1h-5zM336 489h5v1h-5zM417 489h1v1h-1zM429 489h1v1h-1zM443 489h1v1h-1zM510 489h1v1h-1zM89 490h1v1h-1zM156 490h1v1h-1zM162 490h1v1h-1zM182 490h2v1h-2zM263 490h6v1h-6zM329 490h7v1h-7zM415 490h2v1h-2zM429 490h1v1h-1zM442 490h1v1h-1zM509 490h1v1h-1zM90 491h1v1h-1zM157 491h2v1h-2zM161 491h1v1h-1zM184 491h1v1h-1zM269 491h7v1h-7zM323 491h6v1h-6zM414 491h1v1h-1zM430 491h1v1h-1zM440 491h2v1h-2zM508 491h1v1h-1zM91 492h1v1h-1zM159 492h1v1h-1zM161 492h1v1h-1zM185 492h2v1h-2zM276 492h7v1h-7zM316 492h7v1h-7zM412 492h2v1h-2zM430 492h1v1h-1zM439 492h1v1h-1zM507 492h1v1h-1zM92 493h1v1h-1zM160 493h2v1h-2zM184 493h1v1h-1zM187 493h1v1h-1zM283 493h33v1h-33zM411 493h1v1h-1zM431 493h1v1h-1zM437 493h2v1h-2zM506 493h1v1h-1zM93 494h1v1h-1zM162 494h1v1h-1zM184 494h1v1h-1zM188 494h2v1h-2zM299 494h1v1h-1zM409 494h2v1h-2zM432 494h1v1h-1zM436 494h1v1h-1zM505 494h1v1h-1zM94 495h1v1h-1zM163 495h1v1h-1zM183 495h1v1h-1zM190 495h2v1h-2zM299 495h1v1h-1zM407 495h3v1h-3zM432 495h1v1h-1zM435 495h1v1h-1zM504 495h1v1h-1zM95 496h1v1h-1zM164 496h2v1h-2zM183 496h1v1h-1zM192 496h2v1h-2zM299 496h1v1h-1zM405 496h2v1h-2zM410 496h1v1h-1zM433 496h2v1h-2zM503 496h1v1h-1zM96 497h1v1h-1zM166 497h1v1h-1zM182 497h1v1h-1zM194 497h2v1h-2zM299 497h1v1h-1zM403 497h2v1h-2zM410 497h1v1h-1zM432 497h1v1h-1zM502 497h1v1h-1zM97 498h1v1h-1zM167 498h2v1h-2zM181 498h1v1h-1zM196 498h2v1h-2zM299 498h1v1h-1zM401 498h2v1h-2zM411 498h1v1h-1zM430 498h2v1h-2zM501 498h1v1h-1zM98 499h1v1h-1zM169 499h1v1h-1zM181 499h1v1h-1zM198 499h2v1h-2zM299 499h1v1h-1zM399 499h2v1h-2zM411 499h1v1h-1zM429 499h1v1h-1zM500 499h1v1h-1zM99 500h1v1h-1zM170 500h1v1h-1zM180 500h1v1h-1zM200 500h2v1h-2zM299 500h1v1h-1zM397 500h2v1h-2zM412 500h1v1h-1zM428 500h1v1h-1zM499 500h1v1h-1zM100 501h1v1h-1zM171 501h2v1h-2zM180 501h1v1h-1zM202 501h2v1h-2zM299 501h1v1h-1zM395 501h2v1h-2zM413 501h1v1h-1zM426 501h2v1h-2zM498 501h1v1h-1zM101 502h1v1h-1zM173 502h1v1h-1zM179 502h1v1h-1zM202 502h1v1h-1zM204 502h2v1h-2zM299 502h1v1h-1zM393 502h2v1h-2zM413 502h1v1h-1zM425 502h1v1h-1zM497 502h1v1h-1zM102 503h1v1h-1zM174 503h2v1h-2zM179 503h1v1h-1zM201 503h1v1h-1zM206 503h2v1h-2zM299 503h1v1h-1zM391 503h2v1h-2zM414 503h1v1h-1zM423 503h2v1h-2zM496 503h1v1h-1zM103 504h1v1h-1zM176 504h3v1h-3zM201 504h1v1h-1zM208 504h2v1h-2zM299 504h1v1h-1zM389 504h3v1h-3zM414 504h1v1h-1zM421 504h2v1h-2zM495 504h1v1h-1zM104 505h1v1h-1zM177 505h3v1h-3zM200 505h1v1h-1zM210 505h2v1h-2zM299 505h1v1h-1zM387 505h2v1h-2zM392 505h1v1h-1zM415 505h1v1h-1zM419 505h2v1h-2zM494 505h1v1h-1zM105 506h1v1h-1zM176 506h1v1h-1zM180 506h1v1h-1zM200 506h1v1h-1zM212 506h2v1h-2zM299 506h1v1h-1zM385 506h2v1h-2zM392 506h1v1h-1zM415 506h1v1h-1zM418 506h1v1h-1zM493 506h1v1h-1zM106 507h1v1h-1zM176 507h1v1h-1zM181 507h2v1h-2zM199 507h1v1h-1zM214 507h3v1h-3zM299 507h1v1h-1zM381 507h4v1h-4zM393 507h1v1h-1zM416 507h2v1h-2zM492 507h1v1h-1zM107 508h1v1h-1zM175 508h1v1h-1zM183 508h2v1h-2zM199 508h1v1h-1zM217 508h4v1h-4zM299 508h1v1h-1zM377 508h4v1h-4zM393 508h1v1h-1zM414 508h3v1h-3zM491 508h1v1h-1zM108 509h1v1h-1zM175 509h1v1h-1zM185 509h2v1h-2zM198 509h1v1h-1zM220 509h5v1h-5zM299 509h1v1h-1zM374 509h3v1h-3zM394 509h1v1h-1zM412 509h2v1h-2zM417 509h1v1h-1zM490 509h1v1h-1zM109 510h1v1h-1zM174 510h1v1h-1zM187 510h1v1h-1zM198 510h1v1h-1zM220 510h1v1h-1zM225 510h2v1h-2zM299 510h1v1h-1zM372 510h2v1h-2zM394 510h1v1h-1zM410 510h2v1h-2zM417 510h1v1h-1zM489 510h1v1h-1zM110 511h1v1h-1zM174 511h1v1h-1zM188 511h2v1h-2zM197 511h1v1h-1zM219 511h1v1h-1zM227 511h2v1h-2zM299 511h1v1h-1zM370 511h2v1h-2zM373 511h1v1h-1zM395 511h1v1h-1zM408 511h2v1h-2zM418 511h1v1h-1zM487 511h2v1h-2zM111 512h2v1h-2zM173 512h1v1h-1zM190 512h2v1h-2zM197 512h1v1h-1zM219 512h1v1h-1zM229 512h3v1h-3zM299 512h1v1h-1zM366 512h4v1h-4zM373 512h1v1h-1zM395 512h1v1h-1zM406 512h2v1h-2zM418 512h1v1h-1zM486 512h1v1h-1zM113 513h1v1h-1zM172 513h1v1h-1zM192 513h2v1h-2zM196 513h1v1h-1zM218 513h1v1h-1zM232 513h4v1h-4zM299 513h1v1h-1zM362 513h4v1h-4zM374 513h1v1h-1zM396 513h1v1h-1zM404 513h2v1h-2zM419 513h1v1h-1zM485 513h1v1h-1zM114 514h1v1h-1zM172 514h1v1h-1zM194 514h3v1h-3zM218 514h1v1h-1zM236 514h4v1h-4zM299 514h1v1h-1zM359 514h3v1h-3zM374 514h1v1h-1zM396 514h1v1h-1zM402 514h2v1h-2zM419 514h1v1h-1zM483 514h2v1h-2zM115 515h2v1h-2zM171 515h1v1h-1zM197 515h2v1h-2zM218 515h1v1h-1zM239 515h5v1h-5zM299 515h1v1h-1zM355 515h4v1h-4zM375 515h1v1h-1zM397 515h1v1h-1zM400 515h2v1h-2zM420 515h1v1h-1zM482 515h1v1h-1zM117 516h1v1h-1zM171 516h1v1h-1zM199 516h2v1h-2zM217 516h1v1h-1zM239 516h1v1h-1zM244 516h3v1h-3zM299 516h1v1h-1zM351 516h4v1h-4zM375 516h1v1h-1zM397 516h3v1h-3zM421 516h1v1h-1zM481 516h1v1h-1zM118 517h1v1h-1zM170 517h1v1h-1zM201 517h2v1h-2zM217 517h1v1h-1zM238 517h1v1h-1zM247 517h4v1h-4zM299 517h1v1h-1zM347 517h4v1h-4zM354 517h1v1h-1zM375 517h1v1h-1zM395 517h3v1h-3zM421 517h1v1h-1zM480 517h1v1h-1zM119 518h1v1h-1zM169 518h1v1h-1zM203 518h2v1h-2zM217 518h1v1h-1zM238 518h1v1h-1zM251 518h4v1h-4zM299 518h1v1h-1zM343 518h4v1h-4zM354 518h1v1h-1zM376 518h1v1h-1zM393 518h2v1h-2zM422 518h1v1h-1zM479 518h1v1h-1zM120 519h1v1h-1zM169 519h1v1h-1zM205 519h2v1h-2zM216 519h1v1h-1zM238 519h1v1h-1zM255 519h4v1h-4zM299 519h1v1h-1zM339 519h4v1h-4zM355 519h1v1h-1zM376 519h1v1h-1zM391 519h2v1h-2zM422 519h1v1h-1zM478 519h1v1h-1zM121 520h1v1h-1zM168 520h1v1h-1zM207 520h2v1h-2zM216 520h1v1h-1zM238 520h1v1h-1zM258 520h7v1h-7zM299 520h1v1h-1zM334 520h5v1h-5zM355 520h1v1h-1zM376 520h1v1h-1zM389 520h2v1h-2zM423 520h1v1h-1zM477 520h1v1h-1zM122 521h1v1h-1zM168 521h1v1h-1zM209 521h3v1h-3zM215 521h1v1h-1zM237 521h1v1h-1zM258 521h1v1h-1zM265 521h7v1h-7zM299 521h1v1h-1zM326 521h8v1h-8zM335 521h1v1h-1zM355 521h1v1h-1zM377 521h1v1h-1zM387 521h2v1h-2zM424 521h1v1h-1zM476 521h1v1h-1zM123 522h1v1h-1zM167 522h1v1h-1zM212 522h2v1h-2zM215 522h1v1h-1zM237 522h1v1h-1zM258 522h1v1h-1zM272 522h16v1h-16zM299 522h1v1h-1zM310 522h16v1h-16zM335 522h1v1h-1zM356 522h1v1h-1zM377 522h1v1h-1zM384 522h3v1h-3zM424 522h1v1h-1zM475 522h1v1h-1zM124 523h1v1h-1zM167 523h1v1h-1zM214 523h3v1h-3zM237 523h1v1h-1zM257 523h1v1h-1zM277 523h1v1h-1zM288 523h22v1h-22zM316 523h1v1h-1zM335 523h1v1h-1zM356 523h1v1h-1zM378 523h1v1h-1zM382 523h2v1h-2zM425 523h1v1h-1zM474 523h1v1h-1zM125 524h1v1h-1zM166 524h1v1h-1zM217 524h3v1h-3zM236 524h1v1h-1zM257 524h1v1h-1zM277 524h1v1h-1zM297 524h1v1h-1zM316 524h1v1h-1zM335 524h1v1h-1zM356 524h1v1h-1zM378 524h4v1h-4zM425 524h1v1h-1zM472 524h2v1h-2zM126 525h2v1h-2zM165 525h1v1h-1zM220 525h4v1h-4zM236 525h1v1h-1zM257 525h1v1h-1zM277 525h1v1h-1zM297 525h1v1h-1zM316 525h1v1h-1zM336 525h1v1h-1zM356 525h1v1h-1zM375 525h4v1h-4zM426 525h1v1h-1zM471 525h1v1h-1zM128 526h1v1h-1zM165 526h1v1h-1zM224 526h3v1h-3zM236 526h1v1h-1zM257 526h1v1h-1zM277 526h1v1h-1zM297 526h1v1h-1zM316 526h1v1h-1zM336 526h1v1h-1zM357 526h1v1h-1zM372 526h3v1h-3zM426 526h1v1h-1zM470 526h1v1h-1zM129 527h1v1h-1zM164 527h1v1h-1zM227 527h2v1h-2zM236 527h1v1h-1zM256 527h1v1h-1zM277 527h1v1h-1zM297 527h1v1h-1zM316 527h1v1h-1zM336 527h1v1h-1zM357 527h1v1h-1zM369 527h3v1h-3zM427 527h1v1h-1zM468 527h2v1h-2zM130 528h2v1h-2zM164 528h1v1h-1zM229 528h3v1h-3zM235 528h1v1h-1zM256 528h1v1h-1zM277 528h1v1h-1zM297 528h1v1h-1zM316 528h1v1h-1zM336 528h1v1h-1zM357 528h1v1h-1zM367 528h2v1h-2zM428 528h1v1h-1zM467 528h1v1h-1zM132 529h1v1h-1zM163 529h1v1h-1zM232 529h4v1h-4zM256 529h1v1h-1zM277 529h1v1h-1zM297 529h1v1h-1zM316 529h1v1h-1zM336 529h1v1h-1zM358 529h1v1h-1zM363 529h4v1h-4zM428 529h1v1h-1zM466 529h1v1h-1zM133 530h2v1h-2zM163 530h1v1h-1zM236 530h4v1h-4zM256 530h1v1h-1zM276 530h1v1h-1zM297 530h1v1h-1zM317 530h1v1h-1zM336 530h1v1h-1zM358 530h5v1h-5zM429 530h1v1h-1zM464 530h2v1h-2zM135 531h1v1h-1zM162 531h1v1h-1zM240 531h4v1h-4zM255 531h1v1h-1zM276 531h1v1h-1zM297 531h1v1h-1zM317 531h1v1h-1zM337 531h1v1h-1zM354 531h5v1h-5zM429 531h1v1h-1zM462 531h2v1h-2zM136 532h2v1h-2zM161 532h1v1h-1zM244 532h4v1h-4zM255 532h1v1h-1zM276 532h1v1h-1zM297 532h1v1h-1zM317 532h1v1h-1zM337 532h1v1h-1zM350 532h4v1h-4zM430 532h1v1h-1zM461 532h1v1h-1zM138 533h2v1h-2zM161 533h1v1h-1zM248 533h6v1h-6zM255 533h1v1h-1zM276 533h1v1h-1zM297 533h1v1h-1zM317 533h1v1h-1zM337 533h1v1h-1zM344 533h6v1h-6zM430 533h1v1h-1zM459 533h2v1h-2zM140 534h1v1h-1zM160 534h1v1h-1zM254 534h6v1h-6zM276 534h1v1h-1zM297 534h1v1h-1zM317 534h1v1h-1zM337 534h7v1h-7zM431 534h1v1h-1zM458 534h1v1h-1zM141 535h2v1h-2zM160 535h1v1h-1zM260 535h4v1h-4zM276 535h1v1h-1zM297 535h1v1h-1zM317 535h1v1h-1zM334 535h4v1h-4zM432 535h1v1h-1zM456 535h2v1h-2zM143 536h1v1h-1zM159 536h1v1h-1zM264 536h6v1h-6zM276 536h1v1h-1zM297 536h1v1h-1zM317 536h1v1h-1zM328 536h6v1h-6zM432 536h1v1h-1zM455 536h1v1h-1zM144 537h2v1h-2zM158 537h1v1h-1zM270 537h17v1h-17zM297 537h1v1h-1zM311 537h17v1h-17zM433 537h1v1h-1zM453 537h2v1h-2zM146 538h1v1h-1zM158 538h1v1h-1zM287 538h24v1h-24zM433 538h1v1h-1zM452 538h1v1h-1zM147 539h2v1h-2zM157 539h1v1h-1zM297 539h1v1h-1zM434 539h1v1h-1zM450 539h2v1h-2zM149 540h1v1h-1zM157 540h1v1h-1zM297 540h1v1h-1zM435 540h1v1h-1zM449 540h1v1h-1zM150 541h2v1h-2zM156 541h1v1h-1zM297 541h1v1h-1zM435 541h1v1h-1zM447 541h2v1h-2zM152 542h1v1h-1zM156 542h1v1h-1zM297 542h1v1h-1zM436 542h1v1h-1zM445 542h2v1h-2zM153 543h3v1h-3zM297 543h1v1h-1zM436 543h1v1h-1zM444 543h1v1h-1zM155 544h2v1h-2zM297 544h1v1h-1zM437 544h1v1h-1zM442 544h2v1h-2zM157 545h1v1h-1zM297 545h1v1h-1zM437 545h1v1h-1zM441 545h1v1h-1zM158 546h2v1h-2zM297 546h1v1h-1zM438 546h3v1h-3zM160 547h2v1h-2zM297 547h1v1h-1zM437 547h2v1h-2zM162 548h2v1h-2zM297 548h1v1h-1zM435 548h2v1h-2zM164 549h2v1h-2zM297 549h1v1h-1zM433 549h2v1h-2zM166 550h2v1h-2zM297 550h1v1h-1zM431 550h2v1h-2zM168 551h2v1h-2zM297 551h1v1h-1zM429 551h2v1h-2zM170 552h2v1h-2zM297 552h1v1h-1zM427 552h2v1h-2zM172 553h2v1h-2zM297 553h1v1h-1zM425 553h2v1h-2zM174 554h3v1h-3zM297 554h1v1h-1zM422 554h3v1h-3zM177 555h2v1h-2zM297 555h1v1h-1zM420 555h2v1h-2zM179 556h2v1h-2zM297 556h1v1h-1zM418 556h2v1h-2zM181 557h2v1h-2zM297 557h1v1h-1zM416 557h2v1h-2zM183 558h3v1h-3zM297 558h1v1h-1zM413 558h3v1h-3zM186 559h2v1h-2zM297 559h1v1h-1zM411 559h2v1h-2zM188 560h2v1h-2zM297 560h1v1h-1zM409 560h2v1h-2zM190 561h2v1h-2zM296 561h1v1h-1zM407 561h2v1h-2zM192 562h3v1h-3zM296 562h1v1h-1zM404 562h3v1h-3zM195 563h2v1h-2zM296 563h1v1h-1zM402 563h2v1h-2zM197 564h2v1h-2zM296 564h1v1h-1zM400 564h2v1h-2zM199 565h2v1h-2zM296 565h1v1h-1zM398 565h2v1h-2zM201 566h3v1h-3zM296 566h1v1h-1zM395 566h3v1h-3zM204 567h3v1h-3zM296 567h1v1h-1zM391 567h4v1h-4zM207 568h4v1h-4zM296 568h1v1h-1zM388 568h3v1h-3zM211 569h3v1h-3zM296 569h1v1h-1zM385 569h3v1h-3zM214 570h3v1h-3zM296 570h1v1h-1zM382 570h3v1h-3zM217 571h3v1h-3zM296 571h1v1h-1zM379 571h3v1h-3zM220 572h3v1h-3zM296 572h1v1h-1zM376 572h3v1h-3zM223 573h3v1h-3zM296 573h1v1h-1zM372 573h4v1h-4zM226 574h4v1h-4zM296 574h1v1h-1zM369 574h3v1h-3zM230 575h4v1h-4zM296 575h1v1h-1zM365 575h4v1h-4zM234 576h4v1h-4zM296 576h1v1h-1zM361 576h4v1h-4zM238 577h5v1h-5zM296 577h1v1h-1zM356 577h5v1h-5zM243 578h5v1h-5zM296 578h1v1h-1zM351 578h5v1h-5zM248 579h7v1h-7zM296 579h1v1h-1zM343 579h8v1h-8zM255 580h10v1h-10zM296 580h1v1h-1zM333 580h10v1h-10zM265 581h10v1h-10zM296 581h1v1h-1zM323 581h10v1h-10zM275 582h10v1h-10zM296 582h1v1h-1zM313 582h10v1h-10zM285 583h28v1h-28z"/>
<path fill="#ff0000" d="M358 94h3v1h-3zM357 95h1v1h-1zM361 95h1v1h-1zM357 96h1v1h-1zM361 96h1v1h-1zM357 97h1v1h-1zM361 97h1v1h-1zM358 98h4v1h-4zM361 99h1v1h-1zM361 100h1v1h-1zM357 101h1v1h-1zM361 101h1v1h-1zM358 102h3v1h-3zM114 103h5v1h-5zM113 104h1v1h-1zM119 104h1v1h-1zM112 105h1v1h-1zM120 105h1v1h-1zM111 106h1v1h-1zM121 106h1v1h-1zM110 107h1v1h-1zM122 107h1v1h-1zM110 108h1v1h-1zM122 108h1v1h-1zM747 108h3v1h-3zM110 109h1v1h-1zM122 109h1v1h-1zM746 109h1v1h-1zM750 109h1v1h-1zM110 110h1v1h-1zM122 110h1v1h-1zM746 110h1v1h-1zM750 110h1v1h-1zM110 111h1v1h-1zM122 111h1v1h-1zM744 111h4v1h-4zM749 111h4v1h-4zM111 112h1v1h-1zM121 112h1v1h-1zM312 112h6v1h-6zM112 113h1v1h-1zM120 113h1v1h-1zM316 113h2v1h-2zM744 113h9v1h-9zM112 114h1v1h-1zM120 114h1v1h-1zM315 114h1v1h-1zM317 114h1v1h-1zM325 114h5v1h-5zM108 115h1v1h-1zM112 115h1v1h-1zM120 115h1v1h-1zM314 115h1v1h-1zM317 115h1v1h-1zM323 115h2v1h-2zM330 115h2v1h-2zM109 116h1v1h-1zM111 116h1v1h-1zM121 116h1v1h-1zM313 116h1v1h-1zM317 116h1v1h-1zM322 116h1v1h-1zM332 116h1v1h-1zM110 117h1v1h-1zM122 117h1v1h-1zM312 117h1v1h-1zM317 117h1v1h-1zM321 117h1v1h-1zM333 117h1v1h-1zM123 118h1v1h-1zM304 118h5v1h-5zM311 118h1v1h-1zM320 118h1v1h-1zM334 118h1v1h-1zM124 119h1v1h-1zM303 119h1v1h-1zM309 119h2v1h-2zM320 119h1v1h-1zM334 119h1v1h-1zM302 120h1v1h-1zM310 120h1v1h-1zM319 120h1v1h-1zM335 120h1v1h-1zM301 121h1v1h-1zM311 121h1v1h-1zM319 121h1v1h-1zM335 121h1v1h-1zM301 122h1v1h-1zM311 122h1v1h-1zM319 122h1v1h-1zM327 122h1v1h-1zM335 122h1v1h-1zM301 123h1v1h-1zM311 123h1v1h-1zM319 123h1v1h-1zM335 123h1v1h-1zM301 124h1v1h-1zM311 124h1v1h-1zM319 124h1v1h-1zM335 124h1v1h-1zM301 125h1v1h-1zM311 125h1v1h-1zM320 125h1v1h-1zM334 125h1v1h-1zM372 125h1v1h-1zM302 126h1v1h-1zM310 126h1v1h-1zM320 126h1v1h-1zM334 126h1v1h-1zM371 126h1v1h-1zM303 127h1v1h-1zM309 127h1v1h-1zM321 127h1v1h-1zM333 127h1v1h-1zM361 127h2v1h-2zM370 127h1v1h-1zM304 128h5v1h-5zM322 128h1v1h-1zM332 128h1v1h-1zM363 128h1v1h-1zM370 128h1v1h-1zM323 129h2v1h-2zM330 129h2v1h-2zM364 129h1v1h-1zM370 129h1v1h-1zM325 130h5v1h-5zM364 130h1v1h-1zM370 130h1v1h-1zM364 131h1v1h-1zM370 131h1v1h-1zM363 132h1v1h-1zM370 132h1v1h-1zM363 133h1v1h-1zM370 133h1v1h-1zM362 134h1v1h-1zM370 134h1v1h-1zM362 135h1v1h-1zM370 135h1v1h-1zM361 136h1v1h-1zM370 136h1v1h-1zM361 137h1v1h-1zM370 137h1v1h-1zM360 138h1v1h-1zM370 138h1v1h-1zM360 139h15v1h-15zM370 140h1v1h-1zM370 141h1v1h-1zM746 146h1v1h-1zM749 146h1v1h-1zM752 146h1v1h-1zM745 147h2v1h-2zM748 147h2v1h-2zM751 147h1v1h-1zM745 148h1v1h-1zM747 148h2v1h-2zM750 148h2v1h-2zM299 149h1v1h-1zM744 149h1v1h-1zM747 149h1v1h-1zM750 149h1v1h-1zM317 150h1v1h-1zM746 151h1v1h-1zM749 151h1v1h-1zM752 151h1v1h-1zM745 152h2v1h-2zM748 152h2v1h-2zM751 152h1v1h-1zM745 153h1v1h-1zM747 153h2v1h-2zM750 153h2v1h-2zM744 154h1v1h-1zM747 154h1v1h-1zM750 154h1v1h-1zM299 155h1v1h-1zM298 156h1v1h-1zM297 157h1v1h-1zM296 158h1v1h-1zM295 159h1v1h-1zM263 160h1v1h-1zM294 160h1v1h-1zM312 160h1v1h-1zM355 160h1v1h-1zM293 161h1v1h-1zM257 162h1v1h-1zM292 162h1v1h-1zM257 163h1v1h-1zM261 163h1v1h-1zM291 163h1v1h-1zM308 163h1v1h-1zM256 164h1v1h-1zM290 164h1v1h-1zM256 165h1v1h-1zM289 165h1v1h-1zM255 166h1v1h-1zM260 166h1v1h-1zM288 166h1v1h-1zM255 167h1v1h-1zM287 167h1v1h-1zM304 167h1v1h-1zM254 168h1v1h-1zM254 169h1v1h-1zM258 169h1v1h-1zM285 169h1v1h-1zM253 170h1v1h-1zM284 170h1v1h-1zM300 170h1v1h-1zM253 171h1v1h-1zM283 171h1v1h-1zM252 172h1v1h-1zM257 172h1v1h-1zM282 172h1v1h-1zM252 173h1v1h-1zM281 173h1v1h-1zM251 174h1v1h-1zM280 174h1v1h-1zM296 174h1v1h-1zM251 175h1v1h-1zM255 175h1v1h-1zM250 176h1v1h-1zM278 176h1v1h-1zM250 177h1v1h-1zM277 177h1v1h-1zM292 177h1v1h-1zM254 178h1v1h-1zM276 178h1v1h-1zM249 179h1v1h-1zM275 179h1v1h-1zM248 180h1v1h-1zM274 180h1v1h-1zM248 181h1v1h-1zM252 181h1v1h-1zM273 181h1v1h-1zM288 181h1v1h-1zM215 182h4v1h-4zM247 182h1v1h-1zM272 182h1v1h-1zM219 183h7v1h-7zM247 183h1v1h-1zM271 183h1v1h-1zM226 184h7v1h-7zM246 184h1v1h-1zM250 184h1v1h-1zM270 184h1v1h-1zM284 184h1v1h-1zM233 185h6v1h-6zM246 185h1v1h-1zM269 185h1v1h-1zM239 186h7v1h-7zM268 186h1v1h-1zM745 186h1v1h-1zM751 186h1v1h-1zM245 187h8v1h-8zM267 187h1v1h-1zM746 187h1v1h-1zM750 187h1v1h-1zM244 188h1v1h-1zM253 188h7v1h-7zM266 188h1v1h-1zM280 188h1v1h-1zM747 188h3v1h-3zM244 189h1v1h-1zM260 189h7v1h-7zM746 189h1v1h-1zM750 189h1v1h-1zM243 190h1v1h-1zM247 190h1v1h-1zM264 190h1v1h-1zM267 190h7v1h-7zM745 190h1v1h-1zM751 190h1v1h-1zM243 191h1v1h-1zM263 191h1v1h-1zM274 191h6v1h-6zM745 191h1v1h-1zM751 191h1v1h-1zM242 192h1v1h-1zM262 192h1v1h-1zM276 192h1v1h-1zM280 192h7v1h-7zM745 192h1v1h-1zM751 192h1v1h-1zM242 193h1v1h-1zM246 193h1v1h-1zM261 193h1v1h-1zM287 193h7v1h-7zM746 193h1v1h-1zM750 193h1v1h-1zM241 194h1v1h-1zM260 194h1v1h-1zM294 194h7v1h-7zM747 194h3v1h-3zM241 195h1v1h-1zM259 195h1v1h-1zM272 195h1v1h-1zM301 195h7v1h-7zM240 196h1v1h-1zM244 196h1v1h-1zM258 196h1v1h-1zM308 196h7v1h-7zM240 197h1v1h-1zM257 197h1v1h-1zM315 197h6v1h-6zM239 198h1v1h-1zM256 198h1v1h-1zM321 198h7v1h-7zM239 199h1v1h-1zM242 199h2v1h-2zM255 199h1v1h-1zM268 199h1v1h-1zM328 199h7v1h-7zM238 200h1v1h-1zM254 200h1v1h-1zM335 200h7v1h-7zM238 201h1v1h-1zM253 201h1v1h-1zM342 201h7v1h-7zM237 202h1v1h-1zM241 202h1v1h-1zM252 202h1v1h-1zM264 202h1v1h-1zM349 202h6v1h-6zM237 203h1v1h-1zM251 203h1v1h-1zM355 203h7v1h-7zM236 204h1v1h-1zM250 204h1v1h-1zM362 204h7v1h-7zM236 205h1v1h-1zM239 205h1v1h-1zM249 205h1v1h-1zM369 205h7v1h-7zM235 206h1v1h-1zM248 206h1v1h-1zM260 206h1v1h-1zM376 206h7v1h-7zM235 207h1v1h-1zM247 207h1v1h-1zM383 207h7v1h-7zM234 208h1v1h-1zM238 208h1v1h-1zM246 208h1v1h-1zM390 208h6v1h-6zM234 209h1v1h-1zM245 209h1v1h-1zM256 209h1v1h-1zM396 209h7v1h-7zM233 210h1v1h-1zM244 210h1v1h-1zM403 210h7v1h-7zM233 211h1v1h-1zM236 211h1v1h-1zM243 211h1v1h-1zM410 211h4v1h-4zM232 212h1v1h-1zM242 212h1v1h-1zM232 213h1v1h-1zM241 213h1v1h-1zM252 213h1v1h-1zM231 214h1v1h-1zM235 214h1v1h-1zM240 214h1v1h-1zM231 215h1v1h-1zM239 215h1v1h-1zM230 216h1v1h-1zM238 216h1v1h-1zM248 216h1v1h-1zM230 217h1v1h-1zM233 217h1v1h-1zM237 217h1v1h-1zM229 218h1v1h-1zM236 218h1v1h-1zM229 219h1v1h-1zM235 219h1v1h-1zM228 220h1v1h-1zM231 220h2v1h-2zM234 220h1v1h-1zM244 220h1v1h-1zM228 221h1v1h-1zM233 221h1v1h-1zM227 222h1v1h-1zM232 222h1v1h-1zM227 223h1v1h-1zM230 223h2v1h-2zM240 223h1v1h-1zM226 224h1v1h-1zM230 224h1v1h-1zM226 225h1v1h-1zM229 225h1v1h-1zM225 226h1v1h-1zM228 226h1v1h-1zM547 226h3v1h-3zM557 226h3v1h-3zM225 227h1v1h-1zM227 227h1v1h-1zM236 227h1v1h-1zM546 227h1v1h-1zM550 227h1v1h-1zM556 227h1v1h-1zM560 227h1v1h-1zM224 228h1v1h-1zM226 228h1v1h-1zM545 228h1v1h-1zM551 228h1v1h-1zM555 228h1v1h-1zM561 228h1v1h-1zM224 229h2v1h-2zM227 229h1v1h-1zM545 229h1v1h-1zM551 229h1v1h-1zM555 229h1v1h-1zM561 229h1v1h-1zM223 230h2v1h-2zM545 230h1v1h-1zM551 230h1v1h-1zM555 230h1v1h-1zM561 230h1v1h-1zM223 231h1v1h-1zM232 231h1v1h-1zM546 231h1v1h-1zM552 231h1v1h-1zM554 231h1v1h-1zM560 231h1v1h-1zM222 232h1v1h-1zM225 232h1v1h-1zM547 232h1v1h-1zM552 232h1v1h-1zM554 232h1v1h-1zM559 232h1v1h-1zM221 233h2v1h-2zM552 233h1v1h-1zM554 233h1v1h-1zM220 234h2v1h-2zM228 234h1v1h-1zM552 234h1v1h-1zM554 234h1v1h-1zM219 235h1v1h-1zM221 235h1v1h-1zM224 235h1v1h-1zM553 235h1v1h-1zM218 236h1v1h-1zM220 236h1v1h-1zM553 236h1v1h-1zM747 236h3v1h-3zM217 237h1v1h-1zM220 237h1v1h-1zM553 237h1v1h-1zM745 237h2v1h-2zM750 237h2v1h-2zM216 238h1v1h-1zM219 238h1v1h-1zM222 238h1v1h-1zM224 238h1v1h-1zM553 238h1v1h-1zM745 238h1v1h-1zM751 238h1v1h-1zM215 239h1v1h-1zM219 239h1v1h-1zM553 239h1v1h-1zM744 239h1v1h-1zM752 239h1v1h-1zM214 240h1v1h-1zM218 240h1v1h-1zM553 240h1v1h-1zM744 240h1v1h-1zM748 240h1v1h-1zM752 240h1v1h-1zM213 241h1v1h-1zM218 241h1v1h-1zM220 241h2v1h-2zM553 241h1v1h-1zM744 241h1v1h-1zM752 241h1v1h-1zM212 242h1v1h-1zM217 242h1v1h-1zM553 242h1v1h-1zM745 242h1v1h-1zM751 242h1v1h-1zM211 243h1v1h-1zM217 243h1v1h-1zM745 243h2v1h-2zM750 243h2v1h-2zM210 244h1v1h-1zM216 244h1v1h-1zM219 244h1v1h-1zM747 244h3v1h-3zM209 245h1v1h-1zM216 245h1v1h-1zM208 246h1v1h-1zM215 246h1v1h-1zM207 247h1v1h-1zM215 247h1v1h-1zM217 247h1v1h-1zM206 248h1v1h-1zM212 248h1v1h-1zM214 248h1v1h-1zM205 249h1v1h-1zM214 249h1v1h-1zM204 250h1v1h-1zM213 250h1v1h-1zM216 250h1v1h-1zM203 251h1v1h-1zM213 251h1v1h-1zM202 252h1v1h-1zM208 252h1v1h-1zM212 252h1v1h-1zM201 253h1v1h-1zM212 253h1v1h-1zM214 253h1v1h-1zM200 254h1v1h-1zM211 254h1v1h-1zM199 255h1v1h-1zM204 255h1v1h-1zM211 255h1v1h-1zM198 256h1v1h-1zM210 256h1v1h-1zM212 256h2v1h-2zM197 257h1v1h-1zM210 257h1v1h-1zM196 258h1v1h-1zM209 258h1v1h-1zM195 259h1v1h-1zM200 259h1v1h-1zM209 259h1v1h-1zM211 259h1v1h-1zM194 260h1v1h-1zM208 260h1v1h-1zM193 261h1v1h-1zM208 261h1v1h-1zM192 262h1v1h-1zM207 262h1v1h-1zM209 262h2v1h-2zM191 263h1v1h-1zM196 263h1v1h-1zM207 263h1v1h-1zM190 264h1v1h-1zM206 264h1v1h-1zM189 265h1v1h-1zM206 265h1v1h-1zM208 265h1v1h-1zM188 266h1v1h-1zM192 266h1v1h-1zM205 266h1v1h-1zM187 267h1v1h-1zM205 267h1v1h-1zM186 268h1v1h-1zM204 268h1v1h-1zM206 268h1v1h-1zM185 269h1v1h-1zM204 269h1v1h-1zM184 270h1v1h-1zM188 270h1v1h-1zM203 270h1v1h-1zM183 271h1v1h-1zM203 271h1v1h-1zM205 271h1v1h-1zM182 272h1v1h-1zM202 272h1v1h-1zM181 273h1v1h-1zM184 273h1v1h-1zM202 273h1v1h-1zM180 274h1v1h-1zM201 274h1v1h-1zM203 274h1v1h-1zM179 275h1v1h-1zM201 275h1v1h-1zM178 276h1v1h-1zM200 276h1v1h-1zM750 276h3v1h-3zM177 277h1v1h-1zM180 277h1v1h-1zM200 277h3v1h-3zM751 277h2v1h-2zM199 278h1v1h-1zM750 278h1v1h-1zM752 278h1v1h-1zM175 279h1v1h-1zM199 279h1v1h-1zM746 279h2v1h-2zM749 279h1v1h-1zM174 280h1v1h-1zM198 280h1v1h-1zM200 280h1v1h-1zM745 280h1v1h-1zM748 280h1v1h-1zM173 281h1v1h-1zM198 281h1v1h-1zM744 281h1v1h-1zM749 281h1v1h-1zM172 282h1v1h-1zM197 282h1v1h-1zM744 282h1v1h-1zM749 282h1v1h-1zM171 283h1v1h-1zM197 283h3v1h-3zM745 283h1v1h-1zM748 283h1v1h-1zM170 284h1v1h-1zM172 284h1v1h-1zM196 284h1v1h-1zM746 284h2v1h-2zM169 285h1v1h-1zM196 285h1v1h-1zM168 286h1v1h-1zM195 286h1v1h-1zM197 286h1v1h-1zM751 286h1v1h-1zM167 287h2v1h-2zM195 287h1v1h-1zM745 287h2v1h-2zM750 287h1v1h-1zM166 288h1v1h-1zM194 288h1v1h-1zM747 288h1v1h-1zM750 288h1v1h-1zM165 289h1v1h-1zM194 289h2v1h-2zM747 289h1v1h-1zM750 289h1v1h-1zM164 290h1v1h-1zM193 290h1v1h-1zM746 290h1v1h-1zM750 290h1v1h-1zM113 291h1v1h-1zM163 291h2v1h-2zM193 291h1v1h-1zM746 291h1v1h-1zM750 291h1v1h-1zM112 292h1v1h-1zM114 292h1v1h-1zM162 292h1v1h-1zM192 292h3v1h-3zM745 292h1v1h-1zM750 292h1v1h-1zM111 293h1v1h-1zM115 293h1v1h-1zM161 293h1v1h-1zM192 293h1v1h-1zM745 293h8v1h-8zM111 294h1v1h-1zM115 294h1v1h-1zM160 294h1v1h-1zM191 294h1v1h-1zM750 294h1v1h-1zM111 295h1v1h-1zM115 295h1v1h-1zM159 295h2v1h-2zM191 295h2v1h-2zM111 296h1v1h-1zM115 296h1v1h-1zM158 296h1v1h-1zM190 296h1v1h-1zM111 297h1v1h-1zM115 297h1v1h-1zM119 297h2v1h-2zM125 297h2v1h-2zM157 297h1v1h-1zM190 297h1v1h-1zM111 298h1v1h-1zM115 298h1v1h-1zM118 298h1v1h-1zM121 298h1v1h-1zM124 298h1v1h-1zM127 298h1v1h-1zM156 298h1v1h-1zM189 298h3v1h-3zM111 299h5v1h-5zM118 299h1v1h-1zM124 299h1v1h-1zM149 299h1v1h-1zM155 299h1v1h-1zM189 299h1v1h-1zM111 300h1v1h-1zM115 300h1v1h-1zM118 300h1v1h-1zM124 300h1v1h-1zM188 300h1v1h-1zM111 301h1v1h-1zM115 301h1v1h-1zM118 301h1v1h-1zM124 301h1v1h-1zM188 301h2v1h-2zM111 302h1v1h-1zM115 302h1v1h-1zM119 302h2v1h-2zM124 302h1v1h-1zM187 302h1v1h-1zM111 303h1v1h-1zM115 303h1v1h-1zM121 303h1v1h-1zM124 303h1v1h-1zM187 303h1v1h-1zM111 304h1v1h-1zM115 304h1v1h-1zM121 304h1v1h-1zM124 304h1v1h-1zM186 304h3v1h-3zM111 305h1v1h-1zM115 305h1v1h-1zM121 305h1v1h-1zM124 305h1v1h-1zM186 305h1v1h-1zM111 306h1v1h-1zM115 306h1v1h-1zM118 306h1v1h-1zM121 306h1v1h-1zM124 306h1v1h-1zM127 306h1v1h-1zM185 306h1v1h-1zM111 307h1v1h-1zM115 307h1v1h-1zM119 307h2v1h-2zM125 307h2v1h-2zM185 307h2v1h-2zM184 308h1v1h-1zM184 309h1v1h-1zM183 310h2v1h-2zM183 311h1v1h-1zM182 312h1v1h-1zM182 313h2v1h-2zM181 314h1v1h-1zM181 315h1v1h-1zM180 316h2v1h-2zM180 317h1v1h-1zM179 318h1v1h-1zM179 319h2v1h-2zM178 320h1v1h-1zM178 321h1v1h-1zM177 322h2v1h-2zM177 323h1v1h-1zM176 324h1v1h-1zM176 325h2v1h-2zM175 326h1v1h-1zM175 327h1v1h-1zM174 328h2v1h-2zM174 329h1v1h-1zM173 330h1v1h-1zM173 331h1v1h-1zM172 332h1v1h-1zM172 333h1v1h-1zM171 334h2v1h-2zM171 335h1v1h-1zM170 336h1v1h-1zM170 337h1v1h-1zM169 338h1v1h-1zM169 339h1v1h-1zM168 340h2v1h-2zM168 341h1v1h-1zM95 342h1v1h-1zM167 342h1v1h-1zM94 343h2v1h-2zM167 343h1v1h-1zM93 344h1v1h-1zM95 344h1v1h-1zM166 344h1v1h-1zM95 345h1v1h-1zM166 345h1v1h-1zM95 346h1v1h-1zM165 346h1v1h-1zM95 347h1v1h-1zM165 347h1v1h-1zM95 348h1v1h-1zM95 349h1v1h-1zM164 349h1v1h-1zM93 350h5v1h-5zM454 433h5v1h-5zM454 434h1v1h-1zM454 435h1v1h-1zM454 436h1v1h-1zM454 437h4v1h-4zM458 438h1v1h-1zM458 439h1v1h-1zM454 440h1v1h-1zM458 440h1v1h-1zM455 441h3v1h-3zM233 544h5v1h-5zM236 545h2v1h-2zM235 546h1v1h-1zM237 546h1v1h-1zM234 547h1v1h-1zM237 547h1v1h-1zM233 548h1v1h-1zM237 548h1v1h-1zM232 549h1v1h-1zM223 550h1v1h-1zM231 550h1v1h-1zM224 551h1v1h-1zM230 551h1v1h-1zM225 552h1v1h-1zM229 552h1v1h-1zM226 553h1v1h-1zM228 553h1v1h-1zM227 554h1v1h-1zM226 555h1v1h-1zM228 555h1v1h-1zM225 556h1v1h-1zM229 556h1v1h-1zM224 557h1v1h-1zM230 557h1v1h-1zM223 558h1v1h-1zM231 558h1v1h-1zM222 559h1v1h-1zM221 560h1v1h-1z"/>
<path fill="#00ffff" d="M314 157h1v1h-1zM310 158h1v1h-1zM312 158h1v1h-1zM308 159h1v1h-1zM306 160h1v1h-1zM304 161h1v1h-1zM300 162h1v1h-1zM302 162h1v1h-1zM298 163h1v1h-1zM296 164h1v1h-1zM294 165h1v1h-1zM292 166h1v1h-1zM349 166h1v1h-1zM351 166h1v1h-1zM353 166h1v1h-1zM288 167h1v1h-1zM290 167h1v1h-1zM341 167h1v1h-1zM343 167h1v1h-1zM345 167h1v1h-1zM347 167h1v1h-1zM286 168h1v1h-1zM333 168h1v1h-1zM335 168h1v1h-1zM337 168h1v1h-1zM339 168h1v1h-1zM284 169h1v1h-1zM323 169h1v1h-1zM325 169h1v1h-1zM327 169h1v1h-1zM329 169h1v1h-1zM331 169h1v1h-1zM282 170h1v1h-1zM315 170h1v1h-1zM317 170h1v1h-1zM319 170h1v1h-1zM321 170h1v1h-1zM278 171h1v1h-1zM280 171h1v1h-1zM307 171h1v1h-1zM309 171h1v1h-1zM311 171h1v1h-1zM313 171h1v1h-1zM276 172h1v1h-1zM297 172h1v1h-1zM299 172h1v1h-1zM301 172h1v1h-1zM303 172h1v1h-1zM305 172h1v1h-1zM274 173h1v1h-1zM289 173h1v1h-1zM291 173h1v1h-1zM293 173h1v1h-1zM295 173h1v1h-1zM272 174h1v1h-1zM281 174h1v1h-1zM283 174h1v1h-1zM285 174h1v1h-1zM287 174h1v1h-1zM268 175h1v1h-1zM270 175h1v1h-1zM273 175h1v1h-1zM275 175h1v1h-1zM277 175h1v1h-1zM279 175h1v1h-1zM263 176h1v1h-1zM265 176h3v1h-3zM269 176h1v1h-1zM271 176h1v1h-1zM255 177h1v1h-1zM257 177h1v1h-1zM259 177h1v1h-1zM261 177h1v1h-1zM264 177h1v1h-1zM247 178h1v1h-1zM249 178h1v1h-1zM251 178h1v1h-1zM253 178h1v1h-1zM262 178h1v1h-1zM237 179h1v1h-1zM239 179h1v1h-1zM241 179h1v1h-1zM243 179h1v1h-1zM245 179h1v1h-1zM260 179h1v1h-1zM229 180h1v1h-1zM231 180h1v1h-1zM233 180h1v1h-1zM235 180h1v1h-1zM256 180h1v1h-1zM258 180h1v1h-1zM221 181h1v1h-1zM223 181h1v1h-1zM225 181h1v1h-1zM227 181h1v1h-1zM254 181h1v1h-1zM219 182h1v1h-1zM252 182h1v1h-1zM250 183h1v1h-1zM248 184h1v1h-1zM244 185h1v1h-1zM240 187h1v1h-1zM236 188h1v1h-1zM238 188h1v1h-1zM234 189h1v1h-1zM232 190h1v1h-1zM230 191h1v1h-1zM228 192h1v1h-1zM224 193h1v1h-1zM226 193h1v1h-1zM222 194h1v1h-1zM220 195h1v1h-1zM218 196h1v1h-1zM214 197h1v1h-1zM216 197h1v1h-1zM212 198h1v1h-1zM210 199h1v1h-1zM208 200h1v1h-1zM204 201h1v1h-1zM206 201h1v1h-1zM202 202h1v1h-1zM200 203h1v1h-1zM198 204h1v1h-1zM196 205h1v1h-1zM192 206h1v1h-1zM194 206h1v1h-1zM190 207h1v1h-1zM188 208h1v1h-1zM188 209h1v1h-1zM188 210h1v1h-1zM187 211h1v1h-1zM187 212h1v1h-1zM187 213h1v1h-1zM187 214h1v1h-1zM187 215h1v1h-1zM187 216h1v1h-1zM186 217h1v1h-1zM186 218h1v1h-1zM186 219h1v1h-1zM186 220h1v1h-1zM186 221h1v1h-1zM186 222h1v1h-1zM185 223h1v1h-1zM185 224h1v1h-1zM185 225h1v1h-1zM185 226h1v1h-1zM185 227h1v1h-1zM185 228h1v1h-1zM184 229h1v1h-1zM184 230h1v1h-1zM184 231h1v1h-1zM184 232h1v1h-1zM184 233h1v1h-1zM184 234h1v1h-1zM183 235h1v1h-1zM183 236h1v1h-1zM183 237h1v1h-1zM183 238h1v1h-1zM183 239h1v1h-1zM183 240h1v1h-1zM182 241h1v1h-1zM182 242h1v1h-1zM182 243h1v1h-1zM182 244h1v1h-1zM182 245h1v1h-1zM181 246h2v1h-2zM181 247h1v1h-1zM181 248h1v1h-1zM181 249h1v1h-1zM181 250h1v1h-1zM181 251h1v1h-1zM180 252h2v1h-2zM180 253h1v1h-1zM180 254h1v1h-1zM180 255h1v1h-1zM180 256h1v1h-1zM180 257h1v1h-1zM179 258h1v1h-1zM179 259h1v1h-1zM179 260h1v1h-1zM179 261h1v1h-1zM179 262h1v1h-1zM179 263h1v1h-1zM178 264h1v1h-1zM178 265h1v1h-1zM178 266h1v1h-1zM178 267h1v1h-1zM178 268h1v1h-1zM178 269h1v1h-1zM177 270h1v1h-1zM177 271h1v1h-1zM177 272h1v1h-1zM177 273h1v1h-1zM177 274h1v1h-1zM177 275h1v1h-1zM176 276h1v1h-1zM176 277h1v1h-1zM176 278h1v1h-1zM176 279h1v1h-1zM176 280h1v1h-1zM175 281h2v1h-2zM175 282h1v1h-1zM175 283h1v1h-1zM175 284h1v1h-1zM175 285h1v1h-1zM175 286h1v1h-1zM174 287h2v1h-2zM174 288h1v1h-1zM174 289h1v1h-1zM174 290h1v1h-1zM174 291h1v1h-1zM174 292h1v1h-1zM173 293h2v1h-2zM173 294h1v1h-1zM173 295h1v1h-1zM173 296h1v1h-1zM173 297h1v1h-1zM173 298h1v1h-1zM172 299h2v1h-2zM172 300h1v1h-1zM172 301h1v1h-1zM172 302h1v1h-1zM172 303h1v1h-1zM172 304h1v1h-1zM171 305h1v1h-1zM171 306h1v1h-1zM171 307h1v1h-1zM171 308h1v1h-1zM171 309h1v1h-1zM171 310h1v1h-1zM170 311h1v1h-1zM170 312h1v1h-1zM170 313h1v1h-1zM170 314h1v1h-1zM170 315h1v1h-1zM169 316h2v1h-2zM169 317h1v1h-1zM169 318h1v1h-1zM169 319h1v1h-1zM169 320h1v1h-1zM169 321h1v1h-1zM168 322h2v1h-2zM168 323h1v1h-1zM168 324h1v1h-1zM168 325h1v1h-1zM168 326h1v1h-1zM168 327h1v1h-1zM167 328h2v1h-2zM167 329h1v1h-1zM167 330h1v1h-1zM167 331h1v1h-1zM167 332h1v1h-1zM167 333h1v1h-1zM166 334h2v1h-2zM166 335h1v1h-1zM166 336h1v1h-1zM166 337h1v1h-1zM166 338h1v1h-1zM166 339h1v1h-1zM165 340h2v1h-2zM165 341h1v1h-1zM165 342h1v1h-1zM165 343h1v1h-1zM165 344h1v1h-1zM165 345h1v1h-1zM164 346h1v1h-1zM164 347h1v1h-1z"/>
<path fill="#808080" d="M290 61h1v1h-1zM294 61h1v1h-1zM298 61h1v1h-1zM305 61h1v1h-1zM310 61h1v1h-1zM273 62h1v1h-1zM277 62h1v1h-1zM286 62h1v1h-1zM290 62h1v1h-1zM294 62h1v1h-1zM298 62h1v1h-1zM305 62h1v1h-1zM310 62h1v1h-1zM314 62h1v1h-1zM318 62h1v1h-1zM326 62h1v1h-1zM265 63h1v1h-1zM269 63h1v1h-1zM273 63h1v1h-1zM277 63h1v1h-1zM286 63h1v1h-1zM290 63h1v1h-1zM294 63h1v1h-1zM298 63h1v1h-1zM305 63h1v1h-1zM310 63h1v1h-1zM314 63h1v1h-1zM318 63h1v1h-1zM326 63h1v1h-1zM330 63h1v1h-1zM265 64h1v1h-1zM269 64h1v1h-1zM273 64h1v1h-1zM277 64h1v1h-1zM286 64h1v1h-1zM290 64h1v1h-1zM294 64h1v1h-1zM298 64h1v1h-1zM305 64h1v1h-1zM310 64h1v1h-1zM314 64h1v1h-1zM318 64h1v1h-1zM326 64h1v1h-1zM330 64h1v1h-1zM335 64h1v1h-1zM257 65h1v1h-1zM265 65h1v1h-1zM269 65h1v1h-1zM273 65h1v1h-1zM277 65h1v1h-1zM286 65h1v1h-1zM290 65h1v1h-1zM294 65h1v1h-1zM298 65h1v1h-1zM305 65h1v1h-1zM310 65h1v1h-1zM314 65h1v1h-1zM318 65h1v1h-1zM326 65h1v1h-1zM330 65h1v1h-1zM335 65h1v1h-1zM339 65h1v1h-1zM248 66h1v1h-1zM253 66h1v1h-1zM257 66h1v1h-1zM265 66h1v1h-1zM270 66h1v1h-1zM274 66h1v1h-1zM278 66h1v1h-1zM286 66h1v1h-1zM290 66h1v1h-1zM294 66h1v1h-1zM298 66h1v1h-1zM305 66h1v1h-1zM310 66h1v1h-1zM314 66h1v1h-1zM318 66h1v1h-1zM326 66h1v1h-1zM330 66h1v1h-1zM334 66h1v1h-1zM339 66h1v1h-1zM347 66h1v1h-1zM244 67h1v1h-1zM248 67h1v1h-1zM253 67h1v1h-1zM257 67h1v1h-1zM266 67h1v1h-1zM270 67h1v1h-1zM274 67h1v1h-1zM278 67h1v1h-1zM286 67h1v1h-1zM290 67h1v1h-1zM294 67h1v1h-1zM298 67h1v1h-1zM305 67h1v1h-1zM310 67h1v1h-1zM314 67h1v1h-1zM318 67h1v1h-1zM326 67h1v1h-1zM330 67h1v1h-1zM334 67h1v1h-1zM338 67h1v1h-1zM347 67h1v1h-1zM351 67h1v1h-1zM244 68h1v1h-1zM248 68h1v1h-1zM253 68h1v1h-1zM258 68h1v1h-1zM266 68h1v1h-1zM270 68h1v1h-1zM274 68h1v1h-1zM278 68h1v1h-1zM286 68h1v1h-1zM290 68h1v1h-1zM294 68h1v1h-1zM298 68h1v1h-1zM305 68h1v1h-1zM309 68h1v1h-1zM313 68h1v1h-1zM317 68h1v1h-1zM326 68h1v1h-1zM330 68h1v1h-1zM334 68h1v1h-1zM338 68h1v1h-1zM346 68h1v1h-1zM351 68h1v1h-1zM355 68h1v1h-1zM236 69h1v1h-1zM245 69h1v1h-1zM249 69h1v1h-1zM254 69h1v1h-1zM258 69h1v1h-1zM266 69h1v1h-1zM270 69h1v1h-1zM274 69h1v1h-1zM278 69h1v1h-1zM286 69h1v1h-1zM290 69h1v1h-1zM294 69h1v1h-1zM298 69h1v1h-1zM305 69h1v1h-1zM309 69h1v1h-1zM313 69h1v1h-1zM317 69h1v1h-1zM325 69h1v1h-1zM330 69h1v1h-1zM334 69h1v1h-1zM338 69h1v1h-1zM346 69h1v1h-1zM350 69h1v1h-1zM355 69h1v1h-1zM359 69h1v1h-1zM232 70h1v1h-1zM236 70h1v1h-1zM245 70h1v1h-1zM249 70h1v1h-1zM254 70h1v1h-1zM258 70h1v1h-1zM266 70h1v1h-1zM270 70h1v1h-1zM274 70h1v1h-1zM278 70h1v1h-1zM286 70h1v1h-1zM290 70h1v1h-1zM294 70h1v1h-1zM298 70h1v1h-1zM305 70h1v1h-1zM309 70h1v1h-1zM313 70h1v1h-1zM317 70h1v1h-1zM325 70h1v1h-1zM329 70h1v1h-1zM333 70h1v1h-1zM338 70h1v1h-1zM346 70h1v1h-1zM350 70h1v1h-1zM354 70h1v1h-1zM359 70h1v1h-1zM232 71h1v1h-1zM237 71h1v1h-1zM245 71h1v1h-1zM249 71h1v1h-1zM254 71h1v1h-1zM258 71h1v1h-1zM266 71h1v1h-1zM270 71h1v1h-1zM274 71h1v1h-1zM278 71h1v1h-1zM286 71h1v1h-1zM290 71h1v1h-1zM294 71h1v1h-1zM298 71h1v1h-1zM305 71h1v1h-1zM309 71h1v1h-1zM313 71h1v1h-1zM317 71h1v1h-1zM325 71h1v1h-1zM329 71h1v1h-1zM333 71h1v1h-1zM337 71h1v1h-1zM346 71h1v1h-1zM350 71h1v1h-1zM354 71h1v1h-1zM358 71h1v1h-1zM367 71h1v1h-1zM228 72h1v1h-1zM233 72h1v1h-1zM237 72h1v1h-1zM246 72h1v1h-1zM249 72h1v1h-1zM254 72h1v1h-1zM258 72h1v1h-1zM266 72h1v1h-1zM270 72h1v1h-1zM274 72h1v1h-1zM279 72h1v1h-1zM286 72h1v1h-1zM290 72h1v1h-1zM294 72h1v1h-1zM298 72h1v1h-1zM305 72h1v1h-1zM309 72h1v1h-1zM313 72h1v1h-1zM317 72h1v1h-1zM325 72h1v1h-1zM329 72h1v1h-1zM333 72h1v1h-1zM337 72h1v1h-1zM345 72h1v1h-1zM350 72h1v1h-1zM354 72h1v1h-1zM358 72h1v1h-1zM367 72h1v1h-1zM371 72h1v1h-1zM224 73h1v1h-1zM229 73h1v1h-1zM233 73h1v1h-1zM237 73h1v1h-1zM246 73h1v1h-1zM250 73h1v1h-1zM254 73h1v1h-1zM258 73h1v1h-1zM266 73h1v1h-1zM271 73h1v1h-1zM275 73h1v1h-1zM279 73h1v1h-1zM286 73h1v1h-1zM290 73h1v1h-1zM294 73h1v1h-1zM298 73h1v1h-1zM305 73h1v1h-1zM309 73h1v1h-1zM313 73h1v1h-1zM317 73h1v1h-1zM325 73h1v1h-1zM329 73h1v1h-1zM333 73h1v1h-1zM337 73h1v1h-1zM345 73h1v1h-1zM349 73h1v1h-1zM354 73h1v1h-1zM358 73h1v1h-1zM366 73h1v1h-1zM371 73h1v1h-1zM224 74h1v1h-1zM229 74h1v1h-1zM233 74h1v1h-1zM238 74h1v1h-1zM246 74h1v1h-1zM250 74h1v1h-1zM254 74h1v1h-1zM258 74h1v1h-1zM267 74h1v1h-1zM271 74h1v1h-1zM275 74h1v1h-1zM279 74h1v1h-1zM286 74h1v1h-1zM290 74h1v1h-1zM294 74h1v1h-1zM298 74h1v1h-1zM305 74h1v1h-1zM309 74h1v1h-1zM313 74h1v1h-1zM317 74h1v1h-1zM325 74h1v1h-1zM329 74h1v1h-1zM333 74h1v1h-1zM337 74h1v1h-1zM345 74h1v1h-1zM349 74h1v1h-1zM353 74h1v1h-1zM358 74h1v1h-1zM366 74h1v1h-1zM370 74h1v1h-1zM375 74h1v1h-1zM225 75h1v1h-1zM229 75h1v1h-1zM234 75h1v1h-1zM238 75h1v1h-1zM246 75h1v1h-1zM250 75h1v1h-1zM254 75h1v1h-1zM259 75h1v1h-1zM267 75h1v1h-1zM271 75h1v1h-1zM275 75h1v1h-1zM279 75h1v1h-1zM286 75h1v1h-1zM313 75h1v1h-1zM317 75h1v1h-1zM325 75h1v1h-1zM329 75h1v1h-1zM332 75h1v1h-1zM336 75h1v1h-1zM345 75h1v1h-1zM349 75h1v1h-1zM353 75h1v1h-1zM357 75h1v1h-1zM366 75h1v1h-1zM370 75h1v1h-1zM374 75h1v1h-1zM379 75h1v1h-1zM216 76h1v1h-1zM225 76h1v1h-1zM230 76h1v1h-1zM234 76h1v1h-1zM238 76h1v1h-1zM247 76h1v1h-1zM250 76h1v1h-1zM255 76h1v1h-1zM259 76h1v1h-1zM267 76h1v1h-1zM271 76h1v1h-1zM329 76h1v1h-1zM332 76h1v1h-1zM336 76h1v1h-1zM345 76h1v1h-1zM349 76h1v1h-1zM353 76h1v1h-1zM357 76h1v1h-1zM365 76h1v1h-1zM370 76h1v1h-1zM374 76h1v1h-1zM378 76h1v1h-1zM213 77h1v1h-1zM217 77h1v1h-1zM226 77h1v1h-1zM230 77h1v1h-1zM234 77h1v1h-1zM238 77h1v1h-1zM247 77h1v1h-1zM251 77h1v1h-1zM255 77h1v1h-1zM259 77h1v1h-1zM336 77h1v1h-1zM344 77h1v1h-1zM349 77h1v1h-1zM353 77h1v1h-1zM357 77h1v1h-1zM365 77h1v1h-1zM369 77h1v1h-1zM374 77h1v1h-1zM378 77h1v1h-1zM209 78h1v1h-1zM213 78h1v1h-1zM217 78h1v1h-1zM226 78h1v1h-1zM230 78h1v1h-1zM234 78h1v1h-1zM239 78h1v1h-1zM247 78h1v1h-1zM251 78h1v1h-1zM255 78h1v1h-1zM344 78h1v1h-1zM348 78h1v1h-1zM353 78h1v1h-1zM357 78h1v1h-1zM365 78h1v1h-1zM369 78h1v1h-1zM373 78h1v1h-1zM377 78h1v1h-1zM387 78h1v1h-1zM209 79h1v1h-1zM214 79h1v1h-1zM218 79h1v1h-1zM226 79h1v1h-1zM230 79h1v1h-1zM235 79h1v1h-1zM239 79h1v1h-1zM248 79h1v1h-1zM251 79h1v1h-1zM344 79h1v1h-1zM348 79h1v1h-1zM352 79h1v1h-1zM357 79h1v1h-1zM365 79h1v1h-1zM369 79h1v1h-1zM373 79h1v1h-1zM377 79h1v1h-1zM386 79h1v1h-1zM205 80h1v1h-1zM210 80h1v1h-1zM214 80h1v1h-1zM218 80h1v1h-1zM227 80h1v1h-1zM231 80h1v1h-1zM235 80h1v1h-1zM239 80h1v1h-1zM248 80h1v1h-1zM348 80h1v1h-1zM352 80h1v1h-1zM356 80h1v1h-1zM364 80h1v1h-1zM369 80h1v1h-1zM373 80h1v1h-1zM377 80h1v1h-1zM386 80h1v1h-1zM391 80h1v1h-1zM205 81h1v1h-1zM210 81h1v1h-1zM215 81h1v1h-1zM218 81h1v1h-1zM227 81h1v1h-1zM231 81h1v1h-1zM235 81h1v1h-1zM240 81h1v1h-1zM352 81h1v1h-1zM356 81h1v1h-1zM364 81h1v1h-1zM368 81h1v1h-1zM373 81h1v1h-1zM376 81h1v1h-1zM385 81h1v1h-1zM390 81h1v1h-1zM394 81h1v1h-1zM206 82h1v1h-1zM211 82h1v1h-1zM215 82h1v1h-1zM219 82h1v1h-1zM227 82h1v1h-1zM231 82h1v1h-1zM236 82h1v1h-1zM240 82h1v1h-1zM356 82h1v1h-1zM364 82h1v1h-1zM368 82h1v1h-1zM372 82h1v1h-1zM376 82h1v1h-1zM385 82h1v1h-1zM390 82h1v1h-1zM394 82h1v1h-1zM206 83h1v1h-1zM211 83h1v1h-1zM215 83h1v1h-1zM219 83h1v1h-1zM228 83h1v1h-1zM232 83h1v1h-1zM236 83h1v1h-1zM363 83h1v1h-1zM368 83h1v1h-1zM372 83h1v1h-1zM376 83h1v1h-1zM385 83h1v1h-1zM389 83h1v1h-1zM393 83h1v1h-1zM398 83h1v1h-1zM197 84h1v1h-1zM207 84h1v1h-1zM211 84h1v1h-1zM216 84h1v1h-1zM219 84h1v1h-1zM228 84h1v1h-1zM232 84h1v1h-1zM363 84h1v1h-1zM367 84h1v1h-1zM372 84h1v1h-1zM375 84h1v1h-1zM384 84h1v1h-1zM389 84h1v1h-1zM393 84h1v1h-1zM397 84h1v1h-1zM198 85h1v1h-1zM207 85h1v1h-1zM212 85h1v1h-1zM216 85h1v1h-1zM220 85h1v1h-1zM229 85h1v1h-1zM367 85h1v1h-1zM371 85h1v1h-1zM375 85h1v1h-1zM384 85h1v1h-1zM388 85h1v1h-1zM392 85h1v1h-1zM397 85h1v1h-1zM194 86h1v1h-1zM198 86h1v1h-1zM207 86h1v1h-1zM212 86h1v1h-1zM216 86h1v1h-1zM220 86h1v1h-1zM371 86h1v1h-1zM374 86h1v1h-1zM384 86h1v1h-1zM388 86h1v1h-1zM392 86h1v1h-1zM396 86h1v1h-1zM190 87h1v1h-1zM194 87h1v1h-1zM199 87h1v1h-1zM208 87h1v1h-1zM212 87h1v1h-1zM217 87h1v1h-1zM221 87h1v1h-1zM374 87h1v1h-1zM383 87h1v1h-1zM387 87h1v1h-1zM391 87h1v1h-1zM396 87h1v1h-1zM405 87h1v1h-1zM191 88h1v1h-1zM195 88h1v1h-1zM199 88h1v1h-1zM208 88h1v1h-1zM213 88h1v1h-1zM217 88h1v1h-1zM221 88h1v1h-1zM383 88h1v1h-1zM387 88h1v1h-1zM391 88h1v1h-1zM396 88h1v1h-1zM405 88h1v1h-1zM409 88h1v1h-1zM191 89h1v1h-1zM195 89h1v1h-1zM200 89h1v1h-1zM208 89h1v1h-1zM213 89h1v1h-1zM218 89h1v1h-1zM382 89h1v1h-1zM386 89h1v1h-1zM391 89h1v1h-1zM395 89h1v1h-1zM404 89h1v1h-1zM408 89h1v1h-1zM187 90h1v1h-1zM192 90h1v1h-1zM196 90h1v1h-1zM200 90h1v1h-1zM209 90h1v1h-1zM214 90h1v1h-1zM382 90h1v1h-1zM386 90h1v1h-1zM390 90h1v1h-1zM395 90h1v1h-1zM404 90h1v1h-1zM408 90h1v1h-1zM413 90h1v1h-1zM187 91h1v1h-1zM192 91h1v1h-1zM196 91h1v1h-1zM201 91h1v1h-1zM209 91h1v1h-1zM385 91h1v1h-1zM390 91h1v1h-1zM395 91h1v1h-1zM403 91h1v1h-1zM407 91h1v1h-1zM412 91h1v1h-1zM188 92h1v1h-1zM193 92h1v1h-1zM197 92h1v1h-1zM201 92h1v1h-1zM210 92h1v1h-1zM389 92h1v1h-1zM394 92h1v1h-1zM403 92h1v1h-1zM407 92h1v1h-1zM412 92h1v1h-1zM417 92h1v1h-1zM188 93h1v1h-1zM193 93h1v1h-1zM197 93h1v1h-1zM202 93h1v1h-1zM389 93h1v1h-1zM394 93h1v1h-1zM402 93h1v1h-1zM406 93h1v1h-1zM411 93h1v1h-1zM416 93h1v1h-1zM180 94h1v1h-1zM189 94h1v1h-1zM194 94h1v1h-1zM198 94h1v1h-1zM202 94h1v1h-1zM393 94h1v1h-1zM402 94h1v1h-1zM406 94h1v1h-1zM411 94h1v1h-1zM416 94h1v1h-1zM180 95h1v1h-1zM190 95h1v1h-1zM194 95h1v1h-1zM198 95h1v1h-1zM203 95h1v1h-1zM393 95h1v1h-1zM401 95h1v1h-1zM405 95h1v1h-1zM410 95h1v1h-1zM415 95h1v1h-1zM176 96h1v1h-1zM181 96h1v1h-1zM190 96h1v1h-1zM195 96h1v1h-1zM199 96h1v1h-1zM203 96h1v1h-1zM401 96h1v1h-1zM405 96h1v1h-1zM410 96h1v1h-1zM415 96h1v1h-1zM424 96h1v1h-1zM176 97h1v1h-1zM181 97h1v1h-1zM191 97h1v1h-1zM195 97h1v1h-1zM199 97h1v1h-1zM400 97h1v1h-1zM404 97h1v1h-1zM409 97h1v1h-1zM414 97h1v1h-1zM423 97h1v1h-1zM172 98h1v1h-1zM177 98h1v1h-1zM182 98h1v1h-1zM191 98h1v1h-1zM196 98h1v1h-1zM400 98h1v1h-1zM404 98h1v1h-1zM409 98h1v1h-1zM413 98h1v1h-1zM423 98h1v1h-1zM427 98h1v1h-1zM173 99h1v1h-1zM177 99h1v1h-1zM183 99h1v1h-1zM192 99h1v1h-1zM196 99h1v1h-1zM403 99h1v1h-1zM408 99h1v1h-1zM413 99h1v1h-1zM422 99h1v1h-1zM426 99h1v1h-1zM173 100h1v1h-1zM178 100h1v1h-1zM183 100h1v1h-1zM192 100h1v1h-1zM403 100h1v1h-1zM408 100h1v1h-1zM412 100h1v1h-1zM422 100h1v1h-1zM426 100h1v1h-1zM169 101h1v1h-1zM174 101h1v1h-1zM179 101h1v1h-1zM184 101h1v1h-1zM193 101h1v1h-1zM407 101h1v1h-1zM412 101h1v1h-1zM421 101h1v1h-1zM425 101h1v1h-1zM431 101h1v1h-1zM169 102h1v1h-1zM175 102h1v1h-1zM179 102h1v1h-1zM184 102h1v1h-1zM407 102h1v1h-1zM411 102h1v1h-1zM420 102h1v1h-1zM425 102h1v1h-1zM430 102h1v1h-1zM170 103h1v1h-1zM175 103h1v1h-1zM180 103h1v1h-1zM185 103h1v1h-1zM411 103h1v1h-1zM420 103h1v1h-1zM424 103h1v1h-1zM430 103h1v1h-1zM434 103h1v1h-1zM171 104h1v1h-1zM176 104h1v1h-1zM180 104h1v1h-1zM185 104h1v1h-1zM419 104h1v1h-1zM423 104h1v1h-1zM429 104h1v1h-1zM433 104h1v1h-1zM172 105h1v1h-1zM176 105h1v1h-1zM181 105h1v1h-1zM186 105h1v1h-1zM419 105h1v1h-1zM423 105h1v1h-1zM428 105h1v1h-1zM433 105h1v1h-1zM162 106h1v1h-1zM172 106h1v1h-1zM177 106h1v1h-1zM181 106h1v1h-1zM418 106h1v1h-1zM422 106h1v1h-1zM427 106h1v1h-1zM432 106h1v1h-1zM162 107h1v1h-1zM173 107h1v1h-1zM178 107h1v1h-1zM182 107h1v1h-1zM418 107h1v1h-1zM422 107h1v1h-1zM427 107h1v1h-1zM431 107h1v1h-1zM159 108h1v1h-1zM163 108h1v1h-1zM174 108h1v1h-1zM178 108h1v1h-1zM417 108h1v1h-1zM421 108h1v1h-1zM426 108h1v1h-1zM431 108h1v1h-1zM441 108h1v1h-1zM159 109h1v1h-1zM164 109h1v1h-1zM175 109h1v1h-1zM179 109h1v1h-1zM421 109h1v1h-1zM425 109h1v1h-1zM430 109h1v1h-1zM440 109h1v1h-1zM156 110h1v1h-1zM160 110h1v1h-1zM165 110h1v1h-1zM175 110h1v1h-1zM420 110h1v1h-1zM424 110h1v1h-1zM430 110h1v1h-1zM440 110h1v1h-1zM156 111h1v1h-1zM161 111h1v1h-1zM165 111h1v1h-1zM176 111h1v1h-1zM424 111h1v1h-1zM429 111h1v1h-1zM439 111h1v1h-1zM444 111h1v1h-1zM157 112h1v1h-1zM162 112h1v1h-1zM166 112h1v1h-1zM428 112h1v1h-1zM438 112h1v1h-1zM443 112h1v1h-1zM152 113h1v1h-1zM158 113h1v1h-1zM162 113h1v1h-1zM167 113h1v1h-1zM428 113h1v1h-1zM437 113h1v1h-1zM443 113h1v1h-1zM153 114h1v1h-1zM159 114h1v1h-1zM163 114h1v1h-1zM168 114h1v1h-1zM427 114h1v1h-1zM437 114h1v1h-1zM442 114h1v1h-1zM447 114h1v1h-1zM153 115h1v1h-1zM159 115h1v1h-1zM164 115h1v1h-1zM168 115h1v1h-1zM436 115h1v1h-1zM441 115h1v1h-1zM446 115h1v1h-1zM154 116h1v1h-1zM160 116h1v1h-1zM165 116h1v1h-1zM169 116h1v1h-1zM435 116h1v1h-1zM440 116h1v1h-1zM446 116h1v1h-1zM451 116h1v1h-1zM155 117h1v1h-1zM161 117h1v1h-1zM165 117h1v1h-1zM434 117h1v1h-1zM439 117h1v1h-1zM445 117h1v1h-1zM450 117h1v1h-1zM146 118h1v1h-1zM156 118h1v1h-1zM162 118h1v1h-1zM166 118h1v1h-1zM434 118h1v1h-1zM438 118h1v1h-1zM444 118h1v1h-1zM449 118h1v1h-1zM147 119h1v1h-1zM157 119h1v1h-1zM162 119h1v1h-1zM433 119h1v1h-1zM438 119h1v1h-1zM443 119h1v1h-1zM448 119h1v1h-1zM142 120h1v1h-1zM147 120h1v1h-1zM158 120h1v1h-1zM163 120h1v1h-1zM437 120h1v1h-1zM442 120h1v1h-1zM447 120h1v1h-1zM143 121h1v1h-1zM148 121h1v1h-1zM158 121h1v1h-1zM436 121h1v1h-1zM441 121h1v1h-1zM446 121h1v1h-1zM457 121h1v1h-1zM144 122h1v1h-1zM149 122h1v1h-1zM159 122h1v1h-1zM441 122h1v1h-1zM446 122h1v1h-1zM456 122h1v1h-1zM139 123h1v1h-1zM145 123h1v1h-1zM150 123h1v1h-1zM160 123h1v1h-1zM440 123h1v1h-1zM445 123h1v1h-1zM455 123h1v1h-1zM140 124h1v1h-1zM146 124h1v1h-1zM151 124h1v1h-1zM439 124h1v1h-1zM444 124h1v1h-1zM454 124h1v1h-1zM460 124h1v1h-1zM141 125h1v1h-1zM147 125h1v1h-1zM152 125h1v1h-1zM443 125h1v1h-1zM453 125h1v1h-1zM459 125h1v1h-1zM136 126h1v1h-1zM142 126h1v1h-1zM147 126h1v1h-1zM152 126h1v1h-1zM442 126h1v1h-1zM452 126h1v1h-1zM458 126h1v1h-1zM137 127h1v1h-1zM143 127h1v1h-1zM148 127h1v1h-1zM153 127h1v1h-1zM452 127h1v1h-1zM457 127h1v1h-1zM463 127h1v1h-1zM138 128h1v1h-1zM144 128h1v1h-1zM149 128h1v1h-1zM154 128h1v1h-1zM451 128h1v1h-1zM456 128h1v1h-1zM462 128h1v1h-1zM139 129h1v1h-1zM144 129h1v1h-1zM150 129h1v1h-1zM450 129h1v1h-1zM455 129h1v1h-1zM461 129h1v1h-1zM140 130h1v1h-1zM145 130h1v1h-1zM151 130h1v1h-1zM449 130h1v1h-1zM455 130h1v1h-1zM460 130h1v1h-1zM466 130h1v1h-1zM141 131h1v1h-1zM146 131h1v1h-1zM448 131h1v1h-1zM454 131h1v1h-1zM459 131h1v1h-1zM465 131h1v1h-1zM130 132h1v1h-1zM141 132h1v1h-1zM147 132h1v1h-1zM453 132h1v1h-1zM458 132h1v1h-1zM464 132h1v1h-1zM131 133h1v1h-1zM142 133h1v1h-1zM148 133h1v1h-1zM452 133h1v1h-1zM458 133h1v1h-1zM463 133h1v1h-1zM132 134h1v1h-1zM143 134h1v1h-1zM451 134h1v1h-1zM457 134h1v1h-1zM462 134h1v1h-1zM127 135h1v1h-1zM133 135h1v1h-1zM144 135h1v1h-1zM456 135h1v1h-1zM461 135h1v1h-1zM128 136h1v1h-1zM134 136h1v1h-1zM145 136h1v1h-1zM455 136h1v1h-1zM460 136h1v1h-1zM472 136h1v1h-1zM129 137h1v1h-1zM135 137h1v1h-1zM405 137h1v1h-1zM454 137h1v1h-1zM459 137h1v1h-1zM471 137h1v1h-1zM124 138h1v1h-1zM130 138h1v1h-1zM136 138h1v1h-1zM458 138h1v1h-1zM470 138h1v1h-1zM125 139h1v1h-1zM131 139h1v1h-1zM137 139h1v1h-1zM193 139h1v1h-1zM404 139h1v1h-1zM457 139h1v1h-1zM469 139h1v1h-1zM475 139h1v1h-1zM126 140h1v1h-1zM132 140h2v1h-2zM138 140h1v1h-1zM467 140h2v1h-2zM474 140h1v1h-1zM121 141h1v1h-1zM127 141h1v1h-1zM134 141h1v1h-1zM139 141h1v1h-1zM194 141h1v1h-1zM402 141h1v1h-1zM466 141h1v1h-1zM473 141h1v1h-1zM122 142h1v1h-1zM128 142h1v1h-1zM135 142h1v1h-1zM465 142h1v1h-1zM472 142h1v1h-1zM478 142h1v1h-1zM123 143h1v1h-1zM129 143h2v1h-2zM136 143h1v1h-1zM195 143h1v1h-1zM401 143h1v1h-1zM464 143h1v1h-1zM470 143h2v1h-2zM477 143h1v1h-1zM124 144h1v1h-1zM131 144h1v1h-1zM137 144h1v1h-1zM463 144h1v1h-1zM469 144h1v1h-1zM476 144h1v1h-1zM125 145h1v1h-1zM132 145h1v1h-1zM197 145h1v1h-1zM400 145h1v1h-1zM462 145h1v1h-1zM468 145h1v1h-1zM475 145h1v1h-1zM126 146h2v1h-2zM133 146h1v1h-1zM467 146h1v1h-1zM473 146h2v1h-2zM480 146h1v1h-1zM116 147h1v1h-1zM128 147h1v1h-1zM134 147h1v1h-1zM198 147h1v1h-1zM398 147h1v1h-1zM466 147h1v1h-1zM472 147h1v1h-1zM478 147h2v1h-2zM117 148h1v1h-1zM129 148h1v1h-1zM465 148h1v1h-1zM471 148h1v1h-1zM477 148h1v1h-1zM118 149h1v1h-1zM130 149h1v1h-1zM397 149h1v1h-1zM470 149h1v1h-1zM476 149h1v1h-1zM119 150h1v1h-1zM131 150h1v1h-1zM469 150h1v1h-1zM475 150h1v1h-1zM114 151h1v1h-1zM120 151h1v1h-1zM201 151h1v1h-1zM396 151h1v1h-1zM468 151h1v1h-1zM474 151h1v1h-1zM115 152h2v1h-2zM121 152h2v1h-2zM472 152h2v1h-2zM485 152h1v1h-1zM117 153h1v1h-1zM123 153h1v1h-1zM202 153h1v1h-1zM395 153h1v1h-1zM471 153h1v1h-1zM483 153h2v1h-2zM111 154h1v1h-1zM118 154h1v1h-1zM124 154h1v1h-1zM470 154h1v1h-1zM482 154h1v1h-1zM112 155h2v1h-2zM119 155h1v1h-1zM125 155h1v1h-1zM203 155h1v1h-1zM393 155h1v1h-1zM481 155h1v1h-1zM114 156h1v1h-1zM120 156h1v1h-1zM126 156h1v1h-1zM480 156h1v1h-1zM487 156h2v1h-2zM108 157h1v1h-1zM115 157h1v1h-1zM121 157h2v1h-2zM205 157h1v1h-1zM392 157h1v1h-1zM479 157h1v1h-1zM486 157h1v1h-1zM109 158h2v1h-2zM116 158h1v1h-1zM123 158h1v1h-1zM477 158h2v1h-2zM485 158h1v1h-1zM111 159h1v1h-1zM117 159h1v1h-1zM124 159h1v1h-1zM206 159h1v1h-1zM391 159h1v1h-1zM476 159h1v1h-1zM483 159h2v1h-2zM489 159h2v1h-2zM112 160h1v1h-1zM118 160h2v1h-2zM475 160h1v1h-1zM482 160h1v1h-1zM488 160h1v1h-1zM113 161h2v1h-2zM120 161h1v1h-1zM207 161h1v1h-1zM389 161h1v1h-1zM481 161h1v1h-1zM487 161h1v1h-1zM115 162h1v1h-1zM121 162h1v1h-1zM479 162h2v1h-2zM485 162h2v1h-2zM491 162h2v1h-2zM116 163h1v1h-1zM209 163h1v1h-1zM388 163h1v1h-1zM478 163h1v1h-1zM484 163h1v1h-1zM490 163h1v1h-1zM103 164h1v1h-1zM117 164h2v1h-2zM483 164h1v1h-1zM489 164h1v1h-1zM104 165h2v1h-2zM119 165h1v1h-1zM210 165h1v1h-1zM387 165h1v1h-1zM481 165h2v1h-2zM487 165h2v1h-2zM106 166h1v1h-1zM480 166h1v1h-1zM486 166h1v1h-1zM101 167h1v1h-1zM107 167h2v1h-2zM211 167h1v1h-1zM385 167h1v1h-1zM485 167h1v1h-1zM102 168h2v1h-2zM109 168h2v1h-2zM483 168h2v1h-2zM104 169h1v1h-1zM111 169h1v1h-1zM213 169h1v1h-1zM384 169h1v1h-1zM482 169h1v1h-1zM496 169h2v1h-2zM105 170h1v1h-1zM112 170h2v1h-2zM495 170h1v1h-1zM98 171h1v1h-1zM106 171h2v1h-2zM114 171h1v1h-1zM214 171h1v1h-1zM383 171h1v1h-1zM494 171h1v1h-1zM99 172h2v1h-2zM108 172h1v1h-1zM492 172h2v1h-2zM500 172h1v1h-1zM101 173h2v1h-2zM109 173h1v1h-1zM215 173h1v1h-1zM381 173h1v1h-1zM491 173h1v1h-1zM498 173h2v1h-2zM96 174h1v1h-1zM103 174h1v1h-1zM110 174h2v1h-2zM490 174h1v1h-1zM497 174h1v1h-1zM97 175h2v1h-2zM104 175h2v1h-2zM217 175h1v1h-1zM380 175h1v1h-1zM488 175h2v1h-2zM495 175h2v1h-2zM99 176h2v1h-2zM106 176h2v1h-2zM487 176h1v1h-1zM493 176h2v1h-2zM501 176h2v1h-2zM101 177h1v1h-1zM108 177h2v1h-2zM218 177h1v1h-1zM379 177h1v1h-1zM492 177h1v1h-1zM499 177h2v1h-2zM102 178h2v1h-2zM110 178h1v1h-1zM490 178h2v1h-2zM497 178h2v1h-2zM104 179h2v1h-2zM219 179h1v1h-1zM378 179h1v1h-1zM489 179h1v1h-1zM496 179h1v1h-1zM106 180h2v1h-2zM494 180h2v1h-2zM503 180h2v1h-2zM92 181h1v1h-1zM108 181h1v1h-1zM376 181h1v1h-1zM492 181h2v1h-2zM501 181h2v1h-2zM93 182h2v1h-2zM491 182h1v1h-1zM499 182h2v1h-2zM95 183h2v1h-2zM375 183h1v1h-1zM498 183h1v1h-1zM97 184h1v1h-1zM496 184h2v1h-2zM90 185h1v1h-1zM98 185h2v1h-2zM223 185h1v1h-1zM374 185h1v1h-1zM494 185h2v1h-2zM91 186h2v1h-2zM100 186h2v1h-2zM493 186h1v1h-1zM93 187h2v1h-2zM102 187h2v1h-2zM225 187h1v1h-1zM372 187h1v1h-1zM507 187h2v1h-2zM95 188h2v1h-2zM505 188h2v1h-2zM88 189h1v1h-1zM97 189h2v1h-2zM226 189h1v1h-1zM371 189h1v1h-1zM503 189h2v1h-2zM89 190h2v1h-2zM99 190h2v1h-2zM502 190h1v1h-1zM510 190h2v1h-2zM91 191h2v1h-2zM101 191h2v1h-2zM227 191h1v1h-1zM370 191h1v1h-1zM500 191h2v1h-2zM508 191h2v1h-2zM86 192h1v1h-1zM93 192h2v1h-2zM498 192h2v1h-2zM506 192h2v1h-2zM87 193h2v1h-2zM95 193h2v1h-2zM229 193h1v1h-1zM368 193h1v1h-1zM497 193h1v1h-1zM504 193h2v1h-2zM89 194h2v1h-2zM97 194h2v1h-2zM502 194h2v1h-2zM511 194h2v1h-2zM91 195h2v1h-2zM99 195h2v1h-2zM230 195h1v1h-1zM367 195h1v1h-1zM500 195h2v1h-2zM509 195h2v1h-2zM93 196h2v1h-2zM499 196h1v1h-1zM507 196h2v1h-2zM95 197h2v1h-2zM231 197h1v1h-1zM366 197h1v1h-1zM505 197h2v1h-2zM513 197h2v1h-2zM97 198h2v1h-2zM503 198h2v1h-2zM511 198h2v1h-2zM233 199h1v1h-1zM364 199h1v1h-1zM501 199h2v1h-2zM509 199h2v1h-2zM83 200h1v1h-1zM507 200h2v1h-2zM84 201h2v1h-2zM234 201h1v1h-1zM363 201h1v1h-1zM505 201h2v1h-2zM86 202h3v1h-3zM503 202h2v1h-2zM89 203h3v1h-3zM235 203h1v1h-1zM362 203h1v1h-1zM502 203h1v1h-1zM81 204h2v1h-2zM92 204h2v1h-2zM83 205h2v1h-2zM94 205h2v1h-2zM237 205h1v1h-1zM361 205h1v1h-1zM517 205h2v1h-2zM85 206h2v1h-2zM515 206h2v1h-2zM79 207h2v1h-2zM87 207h3v1h-3zM238 207h1v1h-1zM359 207h1v1h-1zM512 207h3v1h-3zM81 208h2v1h-2zM90 208h2v1h-2zM509 208h3v1h-3zM83 209h2v1h-2zM92 209h2v1h-2zM239 209h1v1h-1zM358 209h1v1h-1zM507 209h2v1h-2zM519 209h2v1h-2zM85 210h2v1h-2zM506 210h1v1h-1zM517 210h2v1h-2zM78 211h1v1h-1zM87 211h2v1h-2zM241 211h1v1h-1zM357 211h1v1h-1zM514 211h3v1h-3zM79 212h2v1h-2zM89 212h2v1h-2zM511 212h3v1h-3zM81 213h3v1h-3zM91 213h1v1h-1zM242 213h1v1h-1zM355 213h1v1h-1zM509 213h2v1h-2zM520 213h2v1h-2zM84 214h3v1h-3zM125 214h1v1h-1zM473 214h1v1h-1zM508 214h1v1h-1zM518 214h2v1h-2zM87 215h2v1h-2zM127 215h1v1h-1zM243 215h1v1h-1zM354 215h1v1h-1zM471 215h1v1h-1zM515 215h3v1h-3zM89 216h2v1h-2zM129 216h1v1h-1zM469 216h1v1h-1zM512 216h3v1h-3zM522 216h1v1h-1zM131 217h1v1h-1zM245 217h1v1h-1zM353 217h1v1h-1zM467 217h1v1h-1zM510 217h2v1h-2zM520 217h2v1h-2zM133 218h1v1h-1zM465 218h1v1h-1zM509 218h1v1h-1zM517 218h3v1h-3zM75 219h1v1h-1zM135 219h1v1h-1zM246 219h1v1h-1zM351 219h1v1h-1zM463 219h1v1h-1zM514 219h3v1h-3zM76 220h2v1h-2zM137 220h1v1h-1zM461 220h1v1h-1zM512 220h2v1h-2zM78 221h3v1h-3zM139 221h1v1h-1zM247 221h1v1h-1zM350 221h1v1h-1zM459 221h1v1h-1zM510 221h2v1h-2zM81 222h3v1h-3zM141 222h1v1h-1zM457 222h1v1h-1zM74 223h1v1h-1zM84 223h2v1h-2zM143 223h1v1h-1zM248 223h1v1h-1zM349 223h1v1h-1zM455 223h1v1h-1zM75 224h3v1h-3zM86 224h2v1h-2zM145 224h1v1h-1zM453 224h1v1h-1zM524 224h2v1h-2zM78 225h4v1h-4zM147 225h1v1h-1zM250 225h1v1h-1zM347 225h1v1h-1zM451 225h1v1h-1zM522 225h2v1h-2zM82 226h3v1h-3zM149 226h1v1h-1zM449 226h1v1h-1zM519 226h3v1h-3zM72 227h2v1h-2zM85 227h2v1h-2zM151 227h1v1h-1zM251 227h1v1h-1zM346 227h1v1h-1zM447 227h1v1h-1zM516 227h3v1h-3zM74 228h3v1h-3zM153 228h1v1h-1zM445 228h1v1h-1zM514 228h2v1h-2zM526 228h1v1h-1zM77 229h4v1h-4zM155 229h1v1h-1zM252 229h1v1h-1zM345 229h1v1h-1zM443 229h1v1h-1zM513 229h1v1h-1zM523 229h3v1h-3zM81 230h3v1h-3zM157 230h1v1h-1zM441 230h1v1h-1zM519 230h4v1h-4zM71 231h2v1h-2zM84 231h2v1h-2zM159 231h1v1h-1zM254 231h1v1h-1zM343 231h1v1h-1zM439 231h1v1h-1zM516 231h3v1h-3zM73 232h3v1h-3zM161 232h1v1h-1zM437 232h1v1h-1zM514 232h2v1h-2zM527 232h2v1h-2zM76 233h4v1h-4zM163 233h1v1h-1zM255 233h1v1h-1zM342 233h1v1h-1zM435 233h1v1h-1zM524 233h3v1h-3zM80 234h3v1h-3zM165 234h1v1h-1zM433 234h1v1h-1zM520 234h4v1h-4zM83 235h2v1h-2zM167 235h1v1h-1zM169 235h1v1h-1zM256 235h1v1h-1zM341 235h1v1h-1zM429 235h1v1h-1zM431 235h1v1h-1zM517 235h3v1h-3zM171 236h1v1h-1zM427 236h1v1h-1zM515 236h2v1h-2zM528 236h2v1h-2zM173 237h1v1h-1zM258 237h1v1h-1zM340 237h1v1h-1zM425 237h1v1h-1zM525 237h3v1h-3zM175 238h1v1h-1zM423 238h1v1h-1zM521 238h4v1h-4zM69 239h2v1h-2zM177 239h1v1h-1zM259 239h1v1h-1zM338 239h1v1h-1zM421 239h1v1h-1zM518 239h3v1h-3zM71 240h4v1h-4zM179 240h1v1h-1zM419 240h1v1h-1zM516 240h2v1h-2zM75 241h5v1h-5zM181 241h1v1h-1zM260 241h1v1h-1zM337 241h1v1h-1zM417 241h1v1h-1zM80 242h3v1h-3zM183 242h1v1h-1zM415 242h1v1h-1zM68 243h2v1h-2zM185 243h1v1h-1zM262 243h1v1h-1zM336 243h1v1h-1zM413 243h1v1h-1zM70 244h4v1h-4zM187 244h1v1h-1zM411 244h1v1h-1zM530 244h2v1h-2zM74 245h5v1h-5zM189 245h1v1h-1zM263 245h1v1h-1zM334 245h1v1h-1zM409 245h1v1h-1zM527 245h3v1h-3zM79 246h3v1h-3zM191 246h1v1h-1zM407 246h1v1h-1zM523 246h4v1h-4zM67 247h2v1h-2zM193 247h1v1h-1zM264 247h1v1h-1zM333 247h1v1h-1zM405 247h1v1h-1zM520 247h3v1h-3zM69 248h4v1h-4zM195 248h1v1h-1zM403 248h1v1h-1zM518 248h2v1h-2zM530 248h3v1h-3zM73 249h5v1h-5zM197 249h1v1h-1zM266 249h1v1h-1zM332 249h1v1h-1zM401 249h1v1h-1zM526 249h4v1h-4zM78 250h3v1h-3zM199 250h1v1h-1zM399 250h1v1h-1zM522 250h4v1h-4zM66 251h2v1h-2zM201 251h1v1h-1zM267 251h1v1h-1zM330 251h1v1h-1zM397 251h1v1h-1zM519 251h3v1h-3zM68 252h4v1h-4zM203 252h1v1h-1zM395 252h1v1h-1zM72 253h5v1h-5zM205 253h1v1h-1zM268 253h1v1h-1zM329 253h1v1h-1zM393 253h1v1h-1zM530 253h3v1h-3zM77 254h3v1h-3zM207 254h1v1h-1zM391 254h1v1h-1zM523 254h7v1h-7zM209 255h1v1h-1zM270 255h1v1h-1zM328 255h1v1h-1zM389 255h1v1h-1zM520 255h3v1h-3zM211 256h1v1h-1zM387 256h1v1h-1zM213 257h1v1h-1zM271 257h1v1h-1zM326 257h1v1h-1zM385 257h1v1h-1zM531 257h3v1h-3zM215 258h1v1h-1zM383 258h1v1h-1zM524 258h7v1h-7zM65 259h2v1h-2zM217 259h1v1h-1zM272 259h1v1h-1zM325 259h1v1h-1zM381 259h1v1h-1zM521 259h3v1h-3zM67 260h4v1h-4zM219 260h1v1h-1zM379 260h1v1h-1zM71 261h4v1h-4zM221 261h1v1h-1zM274 261h1v1h-1zM324 261h1v1h-1zM377 261h1v1h-1zM75 262h3v1h-3zM223 262h1v1h-1zM375 262h1v1h-1zM64 263h2v1h-2zM225 263h1v1h-1zM275 263h1v1h-1zM323 263h1v1h-1zM373 263h1v1h-1zM66 264h4v1h-4zM227 264h1v1h-1zM371 264h1v1h-1zM70 265h5v1h-5zM229 265h1v1h-1zM276 265h1v1h-1zM321 265h1v1h-1zM369 265h1v1h-1zM532 265h4v1h-4zM75 266h2v1h-2zM231 266h1v1h-1zM367 266h1v1h-1zM525 266h7v1h-7zM233 267h1v1h-1zM278 267h1v1h-1zM320 267h1v1h-1zM365 267h1v1h-1zM522 267h3v1h-3zM63 268h7v1h-7zM235 268h1v1h-1zM363 268h1v1h-1zM70 269h7v1h-7zM237 269h1v1h-1zM279 269h1v1h-1zM319 269h1v1h-1zM361 269h1v1h-1zM533 269h3v1h-3zM239 270h1v1h-1zM359 270h1v1h-1zM526 270h7v1h-7zM241 271h1v1h-1zM280 271h1v1h-1zM317 271h1v1h-1zM357 271h1v1h-1zM522 271h4v1h-4zM62 272h7v1h-7zM243 272h1v1h-1zM355 272h1v1h-1zM69 273h7v1h-7zM245 273h1v1h-1zM282 273h1v1h-1zM316 273h1v1h-1zM353 273h1v1h-1zM533 273h4v1h-4zM247 274h1v1h-1zM351 274h1v1h-1zM526 274h7v1h-7zM249 275h1v1h-1zM283 275h1v1h-1zM315 275h1v1h-1zM349 275h1v1h-1zM523 275h3v1h-3zM251 276h1v1h-1zM347 276h1v1h-1zM253 277h1v1h-1zM284 277h1v1h-1zM313 277h1v1h-1zM345 277h1v1h-1zM533 277h4v1h-4zM255 278h1v1h-1zM257 278h1v1h-1zM341 278h1v1h-1zM343 278h1v1h-1zM527 278h6v1h-6zM259 279h1v1h-1zM286 279h1v1h-1zM312 279h1v1h-1zM339 279h1v1h-1zM523 279h4v1h-4zM62 280h6v1h-6zM261 280h1v1h-1zM337 280h1v1h-1zM68 281h8v1h-8zM263 281h1v1h-1zM287 281h1v1h-1zM311 281h1v1h-1zM335 281h1v1h-1zM265 282h1v1h-1zM333 282h1v1h-1zM267 283h1v1h-1zM288 283h1v1h-1zM309 283h1v1h-1zM331 283h1v1h-1zM62 284h6v1h-6zM269 284h1v1h-1zM329 284h1v1h-1zM68 285h8v1h-8zM271 285h1v1h-1zM290 285h1v1h-1zM308 285h1v1h-1zM327 285h1v1h-1zM273 286h1v1h-1zM325 286h1v1h-1zM523 286h14v1h-14zM275 287h1v1h-1zM291 287h1v1h-1zM307 287h1v1h-1zM323 287h1v1h-1zM61 288h7v1h-7zM277 288h1v1h-1zM321 288h1v1h-1zM68 289h7v1h-7zM279 289h1v1h-1zM292 289h1v1h-1zM306 289h1v1h-1zM319 289h1v1h-1zM281 290h1v1h-1zM317 290h1v1h-1zM524 290h14v1h-14zM283 291h1v1h-1zM294 291h1v1h-1zM304 291h1v1h-1zM315 291h1v1h-1zM285 292h1v1h-1zM313 292h1v1h-1zM61 293h14v1h-14zM287 293h1v1h-1zM295 293h1v1h-1zM303 293h1v1h-1zM311 293h1v1h-1zM289 294h1v1h-1zM309 294h1v1h-1zM524 294h14v1h-14zM291 295h1v1h-1zM296 295h1v1h-1zM302 295h1v1h-1zM307 295h1v1h-1zM293 296h1v1h-1zM305 296h1v1h-1zM295 297h1v1h-1zM298 297h1v1h-1zM300 297h1v1h-1zM303 297h1v1h-1zM297 298h1v1h-1zM301 298h1v1h-1zM524 298h14v1h-14zM299 299h1v1h-1zM61 300h14v1h-14zM297 300h1v1h-1zM301 300h1v1h-1zM295 301h1v1h-1zM298 301h1v1h-1zM300 301h1v1h-1zM303 301h1v1h-1zM293 302h1v1h-1zM305 302h1v1h-1zM291 303h1v1h-1zM296 303h1v1h-1zM302 303h1v1h-1zM307 303h1v1h-1zM61 304h14v1h-14zM289 304h1v1h-1zM309 304h1v1h-1zM287 305h1v1h-1zM295 305h1v1h-1zM303 305h1v1h-1zM311 305h1v1h-1zM524 305h14v1h-14zM285 306h1v1h-1zM313 306h1v1h-1zM283 307h1v1h-1zM294 307h1v1h-1zM304 307h1v1h-1zM315 307h1v1h-1zM61 308h14v1h-14zM281 308h1v1h-1zM317 308h1v1h-1zM279 309h1v1h-1zM292 309h1v1h-1zM306 309h1v1h-1zM319 309h1v1h-1zM524 309h7v1h-7zM277 310h1v1h-1zM321 310h1v1h-1zM531 310h7v1h-7zM275 311h1v1h-1zM291 311h1v1h-1zM307 311h1v1h-1zM323 311h1v1h-1zM62 312h14v1h-14zM273 312h1v1h-1zM325 312h1v1h-1zM271 313h1v1h-1zM290 313h1v1h-1zM308 313h1v1h-1zM327 313h1v1h-1zM523 313h7v1h-7zM269 314h1v1h-1zM329 314h1v1h-1zM530 314h7v1h-7zM267 315h1v1h-1zM289 315h1v1h-1zM310 315h1v1h-1zM331 315h1v1h-1zM265 316h1v1h-1zM333 316h1v1h-1zM263 317h1v1h-1zM287 317h1v1h-1zM311 317h1v1h-1zM335 317h1v1h-1zM523 317h7v1h-7zM261 318h1v1h-1zM337 318h1v1h-1zM530 318h7v1h-7zM72 319h4v1h-4zM259 319h1v1h-1zM286 319h1v1h-1zM312 319h1v1h-1zM339 319h1v1h-1zM66 320h6v1h-6zM255 320h1v1h-1zM257 320h1v1h-1zM341 320h1v1h-1zM343 320h1v1h-1zM62 321h4v1h-4zM253 321h1v1h-1zM285 321h1v1h-1zM314 321h1v1h-1zM345 321h1v1h-1zM251 322h1v1h-1zM347 322h1v1h-1zM73 323h3v1h-3zM249 323h1v1h-1zM283 323h1v1h-1zM315 323h1v1h-1zM349 323h1v1h-1zM66 324h7v1h-7zM247 324h1v1h-1zM351 324h1v1h-1zM62 325h4v1h-4zM245 325h1v1h-1zM282 325h1v1h-1zM316 325h1v1h-1zM353 325h1v1h-1zM523 325h6v1h-6zM243 326h1v1h-1zM355 326h1v1h-1zM529 326h8v1h-8zM73 327h4v1h-4zM241 327h1v1h-1zM281 327h1v1h-1zM318 327h1v1h-1zM357 327h1v1h-1zM66 328h7v1h-7zM239 328h1v1h-1zM359 328h1v1h-1zM63 329h3v1h-3zM237 329h1v1h-1zM279 329h1v1h-1zM319 329h1v1h-1zM361 329h1v1h-1zM522 329h7v1h-7zM235 330h1v1h-1zM363 330h1v1h-1zM529 330h7v1h-7zM74 331h3v1h-3zM233 331h1v1h-1zM278 331h1v1h-1zM320 331h1v1h-1zM365 331h1v1h-1zM67 332h7v1h-7zM231 332h1v1h-1zM367 332h1v1h-1zM522 332h2v1h-2zM63 333h4v1h-4zM229 333h1v1h-1zM277 333h1v1h-1zM322 333h1v1h-1zM369 333h1v1h-1zM524 333h4v1h-4zM227 334h1v1h-1zM371 334h1v1h-1zM528 334h5v1h-5zM225 335h1v1h-1zM275 335h1v1h-1zM323 335h1v1h-1zM373 335h1v1h-1zM533 335h2v1h-2zM223 336h1v1h-1zM375 336h1v1h-1zM521 336h3v1h-3zM221 337h1v1h-1zM274 337h1v1h-1zM324 337h1v1h-1zM377 337h1v1h-1zM524 337h4v1h-4zM219 338h1v1h-1zM379 338h1v1h-1zM528 338h4v1h-4zM75 339h4v1h-4zM217 339h1v1h-1zM273 339h1v1h-1zM326 339h1v1h-1zM381 339h1v1h-1zM532 339h2v1h-2zM68 340h7v1h-7zM215 340h1v1h-1zM383 340h1v1h-1zM65 341h3v1h-3zM213 341h1v1h-1zM272 341h1v1h-1zM327 341h1v1h-1zM385 341h1v1h-1zM211 342h1v1h-1zM387 342h1v1h-1zM76 343h4v1h-4zM209 343h1v1h-1zM270 343h1v1h-1zM328 343h1v1h-1zM389 343h1v1h-1zM69 344h7v1h-7zM207 344h1v1h-1zM391 344h1v1h-1zM519 344h3v1h-3zM66 345h3v1h-3zM205 345h1v1h-1zM269 345h1v1h-1zM330 345h1v1h-1zM393 345h1v1h-1zM522 345h4v1h-4zM138 346h2v1h-2zM203 346h1v1h-1zM395 346h1v1h-1zM526 346h5v1h-5zM77 347h3v1h-3zM140 347h2v1h-2zM201 347h1v1h-1zM268 347h1v1h-1zM331 347h1v1h-1zM397 347h1v1h-1zM531 347h2v1h-2zM73 348h4v1h-4zM142 348h3v1h-3zM199 348h1v1h-1zM399 348h1v1h-1zM518 348h3v1h-3zM69 349h4v1h-4zM145 349h2v1h-2zM197 349h1v1h-1zM266 349h1v1h-1zM332 349h1v1h-1zM401 349h1v1h-1zM521 349h4v1h-4zM67 350h2v1h-2zM79 350h2v1h-2zM147 350h3v1h-3zM195 350h1v1h-1zM403 350h1v1h-1zM525 350h5v1h-5zM76 351h3v1h-3zM150 351h2v1h-2zM193 351h1v1h-1zM265 351h1v1h-1zM334 351h1v1h-1zM405 351h1v1h-1zM530 351h2v1h-2zM72 352h4v1h-4zM152 352h2v1h-2zM191 352h1v1h-1zM407 352h1v1h-1zM517 352h3v1h-3zM69 353h3v1h-3zM153 353h1v1h-1zM189 353h1v1h-1zM264 353h1v1h-1zM335 353h1v1h-1zM409 353h1v1h-1zM520 353h4v1h-4zM68 354h1v1h-1zM152 354h1v1h-1zM187 354h1v1h-1zM411 354h1v1h-1zM524 354h5v1h-5zM151 355h1v1h-1zM185 355h1v1h-1zM262 355h1v1h-1zM336 355h1v1h-1zM413 355h1v1h-1zM529 355h2v1h-2zM150 356h1v1h-1zM183 356h1v1h-1zM415 356h1v1h-1zM516 356h3v1h-3zM149 357h1v1h-1zM181 357h1v1h-1zM261 357h1v1h-1zM338 357h1v1h-1zM417 357h1v1h-1zM519 357h4v1h-4zM81 358h2v1h-2zM148 358h1v1h-1zM179 358h1v1h-1zM419 358h1v1h-1zM523 358h5v1h-5zM78 359h3v1h-3zM147 359h1v1h-1zM177 359h1v1h-1zM260 359h1v1h-1zM339 359h1v1h-1zM421 359h1v1h-1zM528 359h2v1h-2zM74 360h4v1h-4zM146 360h1v1h-1zM175 360h1v1h-1zM423 360h1v1h-1zM71 361h3v1h-3zM145 361h1v1h-1zM173 361h1v1h-1zM258 361h1v1h-1zM340 361h1v1h-1zM425 361h1v1h-1zM69 362h2v1h-2zM82 362h2v1h-2zM144 362h1v1h-1zM171 362h1v1h-1zM427 362h1v1h-1zM79 363h3v1h-3zM167 363h1v1h-1zM169 363h1v1h-1zM257 363h1v1h-1zM342 363h1v1h-1zM429 363h1v1h-1zM431 363h1v1h-1zM514 363h2v1h-2zM75 364h4v1h-4zM165 364h1v1h-1zM433 364h1v1h-1zM516 364h3v1h-3zM72 365h3v1h-3zM163 365h1v1h-1zM256 365h1v1h-1zM343 365h1v1h-1zM435 365h1v1h-1zM519 365h4v1h-4zM70 366h2v1h-2zM83 366h2v1h-2zM161 366h1v1h-1zM437 366h1v1h-1zM523 366h3v1h-3zM80 367h3v1h-3zM159 367h1v1h-1zM255 367h1v1h-1zM344 367h1v1h-1zM439 367h1v1h-1zM513 367h2v1h-2zM526 367h2v1h-2zM76 368h4v1h-4zM157 368h1v1h-1zM441 368h1v1h-1zM515 368h3v1h-3zM73 369h3v1h-3zM85 369h1v1h-1zM155 369h1v1h-1zM253 369h1v1h-1zM346 369h1v1h-1zM443 369h1v1h-1zM518 369h4v1h-4zM72 370h1v1h-1zM83 370h2v1h-2zM153 370h1v1h-1zM445 370h1v1h-1zM522 370h3v1h-3zM80 371h3v1h-3zM151 371h1v1h-1zM252 371h1v1h-1zM347 371h1v1h-1zM447 371h1v1h-1zM512 371h2v1h-2zM525 371h2v1h-2zM77 372h3v1h-3zM149 372h1v1h-1zM449 372h1v1h-1zM514 372h3v1h-3zM75 373h2v1h-2zM147 373h1v1h-1zM251 373h1v1h-1zM348 373h1v1h-1zM451 373h1v1h-1zM517 373h4v1h-4zM73 374h2v1h-2zM145 374h1v1h-1zM453 374h1v1h-1zM511 374h2v1h-2zM521 374h3v1h-3zM143 375h1v1h-1zM249 375h1v1h-1zM350 375h1v1h-1zM455 375h1v1h-1zM513 375h2v1h-2zM524 375h1v1h-1zM141 376h1v1h-1zM457 376h1v1h-1zM515 376h3v1h-3zM87 377h2v1h-2zM139 377h1v1h-1zM248 377h1v1h-1zM351 377h1v1h-1zM459 377h1v1h-1zM518 377h3v1h-3zM85 378h2v1h-2zM137 378h1v1h-1zM461 378h1v1h-1zM521 378h2v1h-2zM82 379h3v1h-3zM135 379h1v1h-1zM247 379h1v1h-1zM352 379h1v1h-1zM463 379h1v1h-1zM523 379h1v1h-1zM79 380h3v1h-3zM89 380h1v1h-1zM133 380h1v1h-1zM465 380h1v1h-1zM77 381h2v1h-2zM87 381h2v1h-2zM131 381h1v1h-1zM245 381h1v1h-1zM353 381h1v1h-1zM467 381h1v1h-1zM76 382h1v1h-1zM84 382h3v1h-3zM129 382h1v1h-1zM469 382h1v1h-1zM508 382h2v1h-2zM81 383h3v1h-3zM127 383h1v1h-1zM244 383h1v1h-1zM355 383h1v1h-1zM471 383h1v1h-1zM510 383h2v1h-2zM79 384h2v1h-2zM90 384h1v1h-1zM125 384h1v1h-1zM473 384h1v1h-1zM512 384h3v1h-3zM77 385h2v1h-2zM88 385h2v1h-2zM243 385h1v1h-1zM356 385h1v1h-1zM507 385h1v1h-1zM515 385h3v1h-3zM85 386h3v1h-3zM508 386h2v1h-2zM518 386h2v1h-2zM82 387h3v1h-3zM241 387h1v1h-1zM357 387h1v1h-1zM510 387h2v1h-2zM520 387h1v1h-1zM80 388h2v1h-2zM92 388h1v1h-1zM512 388h2v1h-2zM79 389h1v1h-1zM90 389h2v1h-2zM240 389h1v1h-1zM359 389h1v1h-1zM505 389h2v1h-2zM514 389h2v1h-2zM87 390h3v1h-3zM507 390h2v1h-2zM516 390h2v1h-2zM84 391h3v1h-3zM239 391h1v1h-1zM360 391h1v1h-1zM509 391h2v1h-2zM518 391h1v1h-1zM82 392h2v1h-2zM511 392h3v1h-3zM81 393h1v1h-1zM237 393h1v1h-1zM361 393h1v1h-1zM503 393h2v1h-2zM514 393h2v1h-2zM505 394h2v1h-2zM516 394h2v1h-2zM95 395h2v1h-2zM236 395h1v1h-1zM363 395h1v1h-1zM507 395h3v1h-3zM93 396h2v1h-2zM510 396h3v1h-3zM91 397h2v1h-2zM235 397h1v1h-1zM364 397h1v1h-1zM513 397h2v1h-2zM89 398h2v1h-2zM515 398h1v1h-1zM87 399h2v1h-2zM96 399h2v1h-2zM234 399h1v1h-1zM365 399h1v1h-1zM85 400h2v1h-2zM94 400h2v1h-2zM500 400h1v1h-1zM84 401h1v1h-1zM92 401h2v1h-2zM232 401h1v1h-1zM367 401h1v1h-1zM501 401h2v1h-2zM90 402h2v1h-2zM98 402h2v1h-2zM503 402h2v1h-2zM88 403h2v1h-2zM96 403h2v1h-2zM231 403h1v1h-1zM368 403h1v1h-1zM498 403h1v1h-1zM505 403h2v1h-2zM86 404h2v1h-2zM94 404h2v1h-2zM499 404h2v1h-2zM507 404h2v1h-2zM92 405h2v1h-2zM101 405h1v1h-1zM230 405h1v1h-1zM369 405h1v1h-1zM501 405h2v1h-2zM509 405h2v1h-2zM90 406h2v1h-2zM99 406h2v1h-2zM503 406h2v1h-2zM511 406h1v1h-1zM88 407h2v1h-2zM97 407h2v1h-2zM228 407h1v1h-1zM371 407h1v1h-1zM496 407h1v1h-1zM505 407h2v1h-2zM95 408h2v1h-2zM497 408h2v1h-2zM507 408h2v1h-2zM94 409h1v1h-1zM227 409h1v1h-1zM372 409h1v1h-1zM499 409h2v1h-2zM509 409h2v1h-2zM92 410h2v1h-2zM501 410h2v1h-2zM90 411h2v1h-2zM226 411h1v1h-1zM373 411h1v1h-1zM495 411h2v1h-2zM503 411h2v1h-2zM105 412h1v1h-1zM497 412h2v1h-2zM505 412h2v1h-2zM103 413h2v1h-2zM224 413h1v1h-1zM375 413h1v1h-1zM499 413h1v1h-1zM507 413h2v1h-2zM101 414h2v1h-2zM500 414h2v1h-2zM99 415h2v1h-2zM223 415h1v1h-1zM376 415h1v1h-1zM502 415h2v1h-2zM98 416h1v1h-1zM107 416h1v1h-1zM504 416h2v1h-2zM96 417h2v1h-2zM105 417h2v1h-2zM222 417h1v1h-1zM377 417h1v1h-1zM490 417h1v1h-1zM506 417h1v1h-1zM94 418h2v1h-2zM103 418h2v1h-2zM491 418h2v1h-2zM101 419h2v1h-2zM109 419h1v1h-1zM220 419h1v1h-1zM379 419h1v1h-1zM493 419h2v1h-2zM100 420h1v1h-1zM107 420h2v1h-2zM488 420h1v1h-1zM495 420h1v1h-1zM98 421h2v1h-2zM106 421h1v1h-1zM219 421h1v1h-1zM380 421h1v1h-1zM489 421h2v1h-2zM496 421h2v1h-2zM96 422h2v1h-2zM104 422h2v1h-2zM111 422h1v1h-1zM491 422h2v1h-2zM498 422h2v1h-2zM102 423h2v1h-2zM109 423h2v1h-2zM218 423h1v1h-1zM381 423h1v1h-1zM493 423h1v1h-1zM500 423h2v1h-2zM101 424h1v1h-1zM108 424h1v1h-1zM487 424h2v1h-2zM494 424h2v1h-2zM502 424h1v1h-1zM99 425h2v1h-2zM107 425h1v1h-1zM217 425h1v1h-1zM383 425h1v1h-1zM489 425h1v1h-1zM496 425h2v1h-2zM98 426h1v1h-1zM105 426h2v1h-2zM490 426h1v1h-1zM498 426h2v1h-2zM104 427h1v1h-1zM215 427h1v1h-1zM384 427h1v1h-1zM387 427h1v1h-1zM484 427h1v1h-1zM491 427h2v1h-2zM500 427h1v1h-1zM103 428h1v1h-1zM388 428h1v1h-1zM485 428h2v1h-2zM493 428h1v1h-1zM101 429h2v1h-2zM116 429h1v1h-1zM214 429h1v1h-1zM385 429h1v1h-1zM388 429h1v1h-1zM487 429h1v1h-1zM494 429h1v1h-1zM114 430h2v1h-2zM389 430h1v1h-1zM488 430h2v1h-2zM495 430h2v1h-2zM113 431h1v1h-1zM213 431h1v1h-1zM387 431h1v1h-1zM390 431h1v1h-1zM490 431h2v1h-2zM497 431h1v1h-1zM112 432h1v1h-1zM118 432h1v1h-1zM391 432h1v1h-1zM492 432h1v1h-1zM110 433h2v1h-2zM116 433h2v1h-2zM211 433h1v1h-1zM388 433h1v1h-1zM391 433h1v1h-1zM479 433h1v1h-1zM493 433h2v1h-2zM109 434h1v1h-1zM115 434h1v1h-1zM392 434h1v1h-1zM480 434h2v1h-2zM495 434h1v1h-1zM108 435h1v1h-1zM114 435h1v1h-1zM120 435h1v1h-1zM210 435h1v1h-1zM389 435h1v1h-1zM393 435h1v1h-1zM482 435h1v1h-1zM106 436h2v1h-2zM112 436h2v1h-2zM118 436h2v1h-2zM393 436h1v1h-1zM477 436h1v1h-1zM483 436h1v1h-1zM111 437h1v1h-1zM117 437h1v1h-1zM209 437h1v1h-1zM391 437h1v1h-1zM394 437h1v1h-1zM478 437h1v1h-1zM484 437h2v1h-2zM110 438h1v1h-1zM116 438h1v1h-1zM123 438h1v1h-1zM479 438h2v1h-2zM486 438h1v1h-1zM108 439h2v1h-2zM114 439h2v1h-2zM122 439h1v1h-1zM207 439h1v1h-1zM392 439h1v1h-1zM474 439h1v1h-1zM481 439h1v1h-1zM487 439h1v1h-1zM113 440h1v1h-1zM120 440h2v1h-2zM475 440h1v1h-1zM482 440h1v1h-1zM488 440h2v1h-2zM112 441h1v1h-1zM119 441h1v1h-1zM206 441h1v1h-1zM393 441h1v1h-1zM476 441h2v1h-2zM483 441h1v1h-1zM490 441h1v1h-1zM110 442h2v1h-2zM118 442h1v1h-1zM472 442h1v1h-1zM478 442h1v1h-1zM484 442h1v1h-1zM117 443h1v1h-1zM205 443h1v1h-1zM473 443h1v1h-1zM479 443h1v1h-1zM485 443h2v1h-2zM116 444h1v1h-1zM128 444h1v1h-1zM474 444h1v1h-1zM480 444h1v1h-1zM487 444h1v1h-1zM114 445h2v1h-2zM127 445h1v1h-1zM203 445h1v1h-1zM396 445h1v1h-1zM475 445h1v1h-1zM481 445h1v1h-1zM113 446h1v1h-1zM125 446h2v1h-2zM476 446h1v1h-1zM482 446h2v1h-2zM124 447h1v1h-1zM130 447h1v1h-1zM202 447h1v1h-1zM397 447h1v1h-1zM477 447h2v1h-2zM484 447h1v1h-1zM123 448h1v1h-1zM129 448h1v1h-1zM467 448h1v1h-1zM479 448h1v1h-1zM122 449h1v1h-1zM128 449h1v1h-1zM201 449h1v1h-1zM399 449h1v1h-1zM468 449h1v1h-1zM480 449h1v1h-1zM121 450h1v1h-1zM127 450h1v1h-1zM133 450h1v1h-1zM469 450h1v1h-1zM481 450h1v1h-1zM119 451h2v1h-2zM125 451h2v1h-2zM132 451h1v1h-1zM200 451h1v1h-1zM400 451h1v1h-1zM464 451h1v1h-1zM470 451h1v1h-1zM482 451h1v1h-1zM118 452h1v1h-1zM124 452h1v1h-1zM131 452h1v1h-1zM465 452h1v1h-1zM471 452h1v1h-1zM123 453h1v1h-1zM130 453h1v1h-1zM136 453h1v1h-1zM198 453h1v1h-1zM401 453h1v1h-1zM466 453h1v1h-1zM472 453h2v1h-2zM122 454h1v1h-1zM128 454h2v1h-2zM135 454h1v1h-1zM461 454h1v1h-1zM467 454h1v1h-1zM474 454h1v1h-1zM121 455h1v1h-1zM127 455h1v1h-1zM134 455h1v1h-1zM197 455h1v1h-1zM403 455h1v1h-1zM462 455h1v1h-1zM468 455h1v1h-1zM475 455h1v1h-1zM120 456h1v1h-1zM126 456h1v1h-1zM133 456h1v1h-1zM463 456h1v1h-1zM469 456h2v1h-2zM476 456h1v1h-1zM125 457h1v1h-1zM131 457h2v1h-2zM196 457h1v1h-1zM404 457h1v1h-1zM459 457h1v1h-1zM464 457h1v1h-1zM471 457h1v1h-1zM477 457h1v1h-1zM124 458h1v1h-1zM130 458h1v1h-1zM460 458h1v1h-1zM465 458h1v1h-1zM472 458h1v1h-1zM123 459h1v1h-1zM129 459h1v1h-1zM141 459h1v1h-1zM194 459h1v1h-1zM405 459h1v1h-1zM461 459h1v1h-1zM466 459h2v1h-2zM473 459h1v1h-1zM128 460h1v1h-1zM140 460h1v1h-1zM462 460h1v1h-1zM468 460h1v1h-1zM474 460h1v1h-1zM127 461h1v1h-1zM139 461h1v1h-1zM144 461h1v1h-1zM193 461h1v1h-1zM463 461h1v1h-1zM469 461h1v1h-1zM126 462h1v1h-1zM138 462h1v1h-1zM143 462h1v1h-1zM453 462h1v1h-1zM464 462h1v1h-1zM470 462h1v1h-1zM137 463h1v1h-1zM142 463h1v1h-1zM454 463h1v1h-1zM465 463h1v1h-1zM471 463h1v1h-1zM136 464h1v1h-1zM141 464h1v1h-1zM147 464h1v1h-1zM455 464h1v1h-1zM466 464h1v1h-1zM135 465h1v1h-1zM140 465h1v1h-1zM146 465h1v1h-1zM450 465h1v1h-1zM456 465h1v1h-1zM467 465h1v1h-1zM134 466h1v1h-1zM139 466h1v1h-1zM145 466h1v1h-1zM451 466h1v1h-1zM457 466h1v1h-1zM468 466h1v1h-1zM133 467h1v1h-1zM139 467h1v1h-1zM144 467h1v1h-1zM150 467h1v1h-1zM452 467h1v1h-1zM458 467h1v1h-1zM132 468h1v1h-1zM138 468h1v1h-1zM143 468h1v1h-1zM149 468h1v1h-1zM447 468h1v1h-1zM453 468h1v1h-1zM458 468h1v1h-1zM137 469h1v1h-1zM142 469h1v1h-1zM148 469h1v1h-1zM448 469h1v1h-1zM454 469h1v1h-1zM459 469h1v1h-1zM136 470h1v1h-1zM142 470h1v1h-1zM147 470h1v1h-1zM444 470h1v1h-1zM449 470h1v1h-1zM455 470h1v1h-1zM460 470h1v1h-1zM135 471h1v1h-1zM141 471h1v1h-1zM146 471h1v1h-1zM445 471h1v1h-1zM450 471h1v1h-1zM455 471h1v1h-1zM461 471h1v1h-1zM140 472h1v1h-1zM145 472h1v1h-1zM156 472h1v1h-1zM446 472h1v1h-1zM451 472h1v1h-1zM456 472h1v1h-1zM462 472h1v1h-1zM139 473h1v1h-1zM145 473h1v1h-1zM155 473h1v1h-1zM446 473h1v1h-1zM452 473h1v1h-1zM457 473h1v1h-1zM138 474h1v1h-1zM144 474h1v1h-1zM154 474h1v1h-1zM159 474h1v1h-1zM447 474h1v1h-1zM452 474h1v1h-1zM458 474h1v1h-1zM143 475h1v1h-1zM153 475h1v1h-1zM158 475h1v1h-1zM438 475h1v1h-1zM448 475h1v1h-1zM453 475h1v1h-1zM459 475h1v1h-1zM142 476h1v1h-1zM152 476h1v1h-1zM157 476h1v1h-1zM439 476h1v1h-1zM449 476h1v1h-1zM454 476h1v1h-1zM141 477h1v1h-1zM151 477h1v1h-1zM157 477h1v1h-1zM162 477h1v1h-1zM440 477h1v1h-1zM450 477h1v1h-1zM455 477h1v1h-1zM151 478h1v1h-1zM156 478h1v1h-1zM161 478h1v1h-1zM435 478h1v1h-1zM440 478h1v1h-1zM451 478h1v1h-1zM456 478h1v1h-1zM150 479h1v1h-1zM155 479h1v1h-1zM160 479h1v1h-1zM165 479h1v1h-1zM436 479h1v1h-1zM441 479h1v1h-1zM451 479h1v1h-1zM149 480h1v1h-1zM154 480h1v1h-1zM160 480h1v1h-1zM164 480h1v1h-1zM432 480h1v1h-1zM436 480h1v1h-1zM442 480h1v1h-1zM452 480h1v1h-1zM148 481h1v1h-1zM153 481h1v1h-1zM159 481h1v1h-1zM164 481h1v1h-1zM433 481h1v1h-1zM437 481h1v1h-1zM443 481h1v1h-1zM147 482h1v1h-1zM152 482h1v1h-1zM158 482h1v1h-1zM163 482h1v1h-1zM429 482h1v1h-1zM433 482h1v1h-1zM438 482h1v1h-1zM444 482h1v1h-1zM152 483h1v1h-1zM157 483h1v1h-1zM162 483h1v1h-1zM430 483h1v1h-1zM434 483h1v1h-1zM439 483h1v1h-1zM445 483h1v1h-1zM151 484h1v1h-1zM156 484h1v1h-1zM161 484h1v1h-1zM171 484h1v1h-1zM430 484h1v1h-1zM435 484h1v1h-1zM439 484h1v1h-1zM445 484h1v1h-1zM155 485h1v1h-1zM161 485h1v1h-1zM170 485h1v1h-1zM431 485h1v1h-1zM436 485h1v1h-1zM440 485h1v1h-1zM446 485h1v1h-1zM155 486h1v1h-1zM160 486h1v1h-1zM170 486h1v1h-1zM432 486h1v1h-1zM436 486h1v1h-1zM441 486h1v1h-1zM154 487h1v1h-1zM159 487h1v1h-1zM169 487h1v1h-1zM174 487h1v1h-1zM422 487h1v1h-1zM433 487h1v1h-1zM437 487h1v1h-1zM442 487h1v1h-1zM158 488h1v1h-1zM168 488h1v1h-1zM174 488h1v1h-1zM178 488h1v1h-1zM423 488h1v1h-1zM433 488h1v1h-1zM438 488h1v1h-1zM442 488h1v1h-1zM158 489h1v1h-1zM168 489h1v1h-1zM173 489h1v1h-1zM177 489h1v1h-1zM419 489h1v1h-1zM423 489h1v1h-1zM434 489h1v1h-1zM439 489h1v1h-1zM157 490h1v1h-1zM167 490h1v1h-1zM172 490h1v1h-1zM177 490h1v1h-1zM181 490h1v1h-1zM420 490h1v1h-1zM424 490h1v1h-1zM435 490h1v1h-1zM439 490h1v1h-1zM167 491h1v1h-1zM171 491h1v1h-1zM176 491h1v1h-1zM180 491h1v1h-1zM416 491h1v1h-1zM420 491h1v1h-1zM425 491h1v1h-1zM436 491h1v1h-1zM166 492h1v1h-1zM171 492h1v1h-1zM176 492h1v1h-1zM180 492h1v1h-1zM417 492h1v1h-1zM421 492h1v1h-1zM426 492h1v1h-1zM436 492h1v1h-1zM165 493h1v1h-1zM170 493h1v1h-1zM175 493h1v1h-1zM179 493h1v1h-1zM412 493h1v1h-1zM417 493h1v1h-1zM422 493h1v1h-1zM426 493h1v1h-1zM165 494h1v1h-1zM169 494h1v1h-1zM174 494h1v1h-1zM179 494h1v1h-1zM413 494h1v1h-1zM418 494h1v1h-1zM422 494h1v1h-1zM427 494h1v1h-1zM164 495h1v1h-1zM168 495h1v1h-1zM174 495h1v1h-1zM178 495h1v1h-1zM187 495h1v1h-1zM413 495h1v1h-1zM418 495h1v1h-1zM423 495h1v1h-1zM428 495h1v1h-1zM168 496h1v1h-1zM173 496h1v1h-1zM177 496h1v1h-1zM187 496h1v1h-1zM191 496h1v1h-1zM414 496h1v1h-1zM419 496h1v1h-1zM423 496h1v1h-1zM429 496h1v1h-1zM167 497h1v1h-1zM173 497h1v1h-1zM177 497h1v1h-1zM186 497h1v1h-1zM190 497h1v1h-1zM405 497h1v1h-1zM414 497h1v1h-1zM420 497h1v1h-1zM424 497h1v1h-1zM429 497h1v1h-1zM172 498h1v1h-1zM176 498h1v1h-1zM186 498h1v1h-1zM190 498h1v1h-1zM195 498h1v1h-1zM406 498h1v1h-1zM415 498h1v1h-1zM420 498h1v1h-1zM425 498h1v1h-1zM172 499h1v1h-1zM176 499h1v1h-1zM185 499h1v1h-1zM189 499h1v1h-1zM194 499h1v1h-1zM402 499h1v1h-1zM406 499h1v1h-1zM416 499h1v1h-1zM421 499h1v1h-1zM425 499h1v1h-1zM171 500h1v1h-1zM175 500h1v1h-1zM184 500h1v1h-1zM189 500h1v1h-1zM194 500h1v1h-1zM198 500h1v1h-1zM403 500h1v1h-1zM407 500h1v1h-1zM416 500h1v1h-1zM421 500h1v1h-1zM426 500h1v1h-1zM175 501h1v1h-1zM184 501h1v1h-1zM188 501h1v1h-1zM193 501h1v1h-1zM197 501h1v1h-1zM399 501h1v1h-1zM403 501h1v1h-1zM407 501h1v1h-1zM417 501h1v1h-1zM422 501h1v1h-1zM174 502h1v1h-1zM183 502h1v1h-1zM188 502h1v1h-1zM193 502h1v1h-1zM197 502h1v1h-1zM395 502h1v1h-1zM399 502h1v1h-1zM404 502h1v1h-1zM408 502h1v1h-1zM417 502h1v1h-1zM422 502h1v1h-1zM183 503h1v1h-1zM187 503h1v1h-1zM192 503h1v1h-1zM196 503h1v1h-1zM205 503h1v1h-1zM396 503h1v1h-1zM400 503h1v1h-1zM404 503h1v1h-1zM409 503h1v1h-1zM418 503h1v1h-1zM182 504h1v1h-1zM187 504h1v1h-1zM192 504h1v1h-1zM196 504h1v1h-1zM205 504h1v1h-1zM396 504h1v1h-1zM400 504h1v1h-1zM405 504h1v1h-1zM409 504h1v1h-1zM418 504h1v1h-1zM182 505h1v1h-1zM186 505h1v1h-1zM191 505h1v1h-1zM195 505h1v1h-1zM204 505h1v1h-1zM209 505h1v1h-1zM397 505h1v1h-1zM401 505h1v1h-1zM405 505h1v1h-1zM410 505h1v1h-1zM181 506h1v1h-1zM186 506h1v1h-1zM191 506h1v1h-1zM195 506h1v1h-1zM204 506h1v1h-1zM209 506h1v1h-1zM388 506h1v1h-1zM397 506h1v1h-1zM401 506h1v1h-1zM406 506h1v1h-1zM410 506h1v1h-1zM185 507h1v1h-1zM190 507h1v1h-1zM194 507h1v1h-1zM203 507h1v1h-1zM208 507h1v1h-1zM213 507h1v1h-1zM389 507h1v1h-1zM398 507h1v1h-1zM402 507h1v1h-1zM406 507h1v1h-1zM411 507h1v1h-1zM185 508h1v1h-1zM190 508h1v1h-1zM194 508h1v1h-1zM203 508h1v1h-1zM208 508h1v1h-1zM212 508h1v1h-1zM216 508h1v1h-1zM384 508h1v1h-1zM389 508h1v1h-1zM398 508h1v1h-1zM402 508h1v1h-1zM407 508h1v1h-1zM411 508h1v1h-1zM189 509h1v1h-1zM193 509h1v1h-1zM203 509h1v1h-1zM207 509h1v1h-1zM212 509h1v1h-1zM216 509h1v1h-1zM380 509h1v1h-1zM385 509h1v1h-1zM390 509h1v1h-1zM399 509h1v1h-1zM403 509h1v1h-1zM407 509h1v1h-1zM189 510h1v1h-1zM193 510h1v1h-1zM202 510h1v1h-1zM207 510h1v1h-1zM211 510h1v1h-1zM215 510h1v1h-1zM377 510h1v1h-1zM381 510h1v1h-1zM385 510h1v1h-1zM390 510h1v1h-1zM399 510h1v1h-1zM403 510h1v1h-1zM408 510h1v1h-1zM192 511h1v1h-1zM202 511h1v1h-1zM206 511h1v1h-1zM211 511h1v1h-1zM215 511h1v1h-1zM224 511h1v1h-1zM377 511h1v1h-1zM381 511h1v1h-1zM386 511h1v1h-1zM390 511h1v1h-1zM400 511h1v1h-1zM404 511h1v1h-1zM192 512h1v1h-1zM202 512h1v1h-1zM206 512h1v1h-1zM210 512h1v1h-1zM214 512h1v1h-1zM224 512h1v1h-1zM227 512h1v1h-1zM378 512h1v1h-1zM382 512h1v1h-1zM386 512h1v1h-1zM391 512h1v1h-1zM400 512h1v1h-1zM404 512h1v1h-1zM201 513h1v1h-1zM206 513h1v1h-1zM210 513h1v1h-1zM214 513h1v1h-1zM223 513h1v1h-1zM227 513h1v1h-1zM231 513h1v1h-1zM369 513h1v1h-1zM378 513h1v1h-1zM382 513h1v1h-1zM386 513h1v1h-1zM391 513h1v1h-1zM401 513h1v1h-1zM201 514h1v1h-1zM205 514h1v1h-1zM209 514h1v1h-1zM214 514h1v1h-1zM223 514h1v1h-1zM226 514h1v1h-1zM231 514h1v1h-1zM235 514h1v1h-1zM366 514h1v1h-1zM370 514h1v1h-1zM379 514h1v1h-1zM382 514h1v1h-1zM387 514h1v1h-1zM391 514h1v1h-1zM401 514h1v1h-1zM200 515h1v1h-1zM205 515h1v1h-1zM209 515h1v1h-1zM213 515h1v1h-1zM222 515h1v1h-1zM226 515h1v1h-1zM230 515h1v1h-1zM235 515h1v1h-1zM362 515h1v1h-1zM366 515h1v1h-1zM370 515h1v1h-1zM379 515h1v1h-1zM383 515h1v1h-1zM387 515h1v1h-1zM392 515h1v1h-1zM204 516h1v1h-1zM208 516h1v1h-1zM213 516h1v1h-1zM222 516h1v1h-1zM226 516h1v1h-1zM230 516h1v1h-1zM234 516h1v1h-1zM242 516h1v1h-1zM358 516h1v1h-1zM362 516h1v1h-1zM367 516h1v1h-1zM371 516h1v1h-1zM379 516h1v1h-1zM383 516h1v1h-1zM387 516h1v1h-1zM392 516h1v1h-1zM204 517h1v1h-1zM208 517h1v1h-1zM213 517h1v1h-1zM222 517h1v1h-1zM225 517h1v1h-1zM230 517h1v1h-1zM234 517h1v1h-1zM242 517h1v1h-1zM246 517h1v1h-1zM358 517h1v1h-1zM363 517h1v1h-1zM367 517h1v1h-1zM371 517h1v1h-1zM380 517h1v1h-1zM383 517h1v1h-1zM388 517h1v1h-1zM393 517h1v1h-1zM207 518h1v1h-1zM212 518h1v1h-1zM221 518h1v1h-1zM225 518h1v1h-1zM229 518h1v1h-1zM234 518h1v1h-1zM242 518h1v1h-1zM246 518h1v1h-1zM250 518h1v1h-1zM350 518h1v1h-1zM359 518h1v1h-1zM363 518h1v1h-1zM367 518h1v1h-1zM371 518h1v1h-1zM380 518h1v1h-1zM384 518h1v1h-1zM388 518h1v1h-1zM207 519h1v1h-1zM212 519h1v1h-1zM221 519h1v1h-1zM225 519h1v1h-1zM229 519h1v1h-1zM233 519h1v1h-1zM241 519h1v1h-1zM246 519h1v1h-1zM250 519h1v1h-1zM254 519h1v1h-1zM343 519h1v1h-1zM347 519h1v1h-1zM350 519h1v1h-1zM359 519h1v1h-1zM363 519h1v1h-1zM368 519h1v1h-1zM372 519h1v1h-1zM380 519h1v1h-1zM384 519h1v1h-1zM389 519h1v1h-1zM211 520h1v1h-1zM221 520h1v1h-1zM225 520h1v1h-1zM229 520h1v1h-1zM233 520h1v1h-1zM241 520h1v1h-1zM245 520h1v1h-1zM250 520h1v1h-1zM254 520h1v1h-1zM339 520h1v1h-1zM343 520h1v1h-1zM347 520h1v1h-1zM351 520h1v1h-1zM359 520h1v1h-1zM364 520h1v1h-1zM368 520h1v1h-1zM372 520h1v1h-1zM381 520h1v1h-1zM385 520h1v1h-1zM220 521h1v1h-1zM224 521h1v1h-1zM229 521h1v1h-1zM233 521h1v1h-1zM241 521h1v1h-1zM245 521h1v1h-1zM249 521h1v1h-1zM254 521h1v1h-1zM262 521h1v1h-1zM339 521h1v1h-1zM343 521h1v1h-1zM347 521h1v1h-1zM351 521h1v1h-1zM360 521h1v1h-1zM364 521h1v1h-1zM368 521h1v1h-1zM372 521h1v1h-1zM381 521h1v1h-1zM385 521h1v1h-1zM220 522h1v1h-1zM224 522h1v1h-1zM228 522h1v1h-1zM233 522h1v1h-1zM241 522h1v1h-1zM245 522h1v1h-1zM249 522h1v1h-1zM253 522h1v1h-1zM262 522h1v1h-1zM266 522h1v1h-1zM269 522h1v1h-1zM327 522h1v1h-1zM331 522h1v1h-1zM339 522h1v1h-1zM343 522h1v1h-1zM348 522h1v1h-1zM351 522h1v1h-1zM360 522h1v1h-1zM364 522h1v1h-1zM368 522h1v1h-1zM373 522h1v1h-1zM382 522h1v1h-1zM219 523h1v1h-1zM224 523h1v1h-1zM228 523h1v1h-1zM232 523h1v1h-1zM240 523h1v1h-1zM245 523h1v1h-1zM249 523h1v1h-1zM253 523h1v1h-1zM262 523h1v1h-1zM266 523h1v1h-1zM269 523h1v1h-1zM273 523h1v1h-1zM281 523h1v1h-1zM285 523h1v1h-1zM312 523h1v1h-1zM319 523h1v1h-1zM323 523h1v1h-1zM327 523h1v1h-1zM331 523h1v1h-1zM339 523h1v1h-1zM344 523h1v1h-1zM348 523h1v1h-1zM352 523h1v1h-1zM360 523h1v1h-1zM364 523h1v1h-1zM369 523h1v1h-1zM373 523h1v1h-1zM223 524h1v1h-1zM228 524h1v1h-1zM232 524h1v1h-1zM240 524h1v1h-1zM244 524h1v1h-1zM249 524h1v1h-1zM253 524h1v1h-1zM261 524h1v1h-1zM265 524h1v1h-1zM269 524h1v1h-1zM273 524h1v1h-1zM281 524h1v1h-1zM285 524h1v1h-1zM289 524h1v1h-1zM293 524h1v1h-1zM300 524h1v1h-1zM304 524h1v1h-1zM308 524h1v1h-1zM312 524h1v1h-1zM319 524h1v1h-1zM323 524h1v1h-1zM327 524h1v1h-1zM331 524h1v1h-1zM340 524h1v1h-1zM344 524h1v1h-1zM348 524h1v1h-1zM352 524h1v1h-1zM360 524h1v1h-1zM365 524h1v1h-1zM369 524h1v1h-1zM374 524h1v1h-1zM227 525h1v1h-1zM232 525h1v1h-1zM240 525h1v1h-1zM244 525h1v1h-1zM248 525h1v1h-1zM253 525h1v1h-1zM261 525h1v1h-1zM265 525h1v1h-1zM269 525h1v1h-1zM273 525h1v1h-1zM281 525h1v1h-1zM285 525h1v1h-1zM289 525h1v1h-1zM293 525h1v1h-1zM300 525h1v1h-1zM304 525h1v1h-1zM308 525h1v1h-1zM312 525h1v1h-1zM319 525h1v1h-1zM323 525h1v1h-1zM327 525h1v1h-1zM332 525h1v1h-1zM340 525h1v1h-1zM344 525h1v1h-1zM348 525h1v1h-1zM352 525h1v1h-1zM361 525h1v1h-1zM365 525h1v1h-1zM369 525h1v1h-1zM374 525h1v1h-1zM227 526h1v1h-1zM231 526h1v1h-1zM240 526h1v1h-1zM244 526h1v1h-1zM248 526h1v1h-1zM252 526h1v1h-1zM261 526h1v1h-1zM265 526h1v1h-1zM269 526h1v1h-1zM273 526h1v1h-1zM281 526h1v1h-1zM285 526h1v1h-1zM289 526h1v1h-1zM293 526h1v1h-1zM300 526h1v1h-1zM304 526h1v1h-1zM308 526h1v1h-1zM312 526h1v1h-1zM319 526h1v1h-1zM324 526h1v1h-1zM328 526h1v1h-1zM332 526h1v1h-1zM340 526h1v1h-1zM344 526h1v1h-1zM349 526h1v1h-1zM352 526h1v1h-1zM361 526h1v1h-1zM365 526h1v1h-1zM370 526h1v1h-1zM231 527h1v1h-1zM240 527h1v1h-1zM244 527h1v1h-1zM248 527h1v1h-1zM252 527h1v1h-1zM261 527h1v1h-1zM265 527h1v1h-1zM269 527h1v1h-1zM273 527h1v1h-1zM281 527h1v1h-1zM285 527h1v1h-1zM289 527h1v1h-1zM293 527h1v1h-1zM300 527h1v1h-1zM304 527h1v1h-1zM308 527h1v1h-1zM312 527h1v1h-1zM320 527h1v1h-1zM324 527h1v1h-1zM328 527h1v1h-1zM332 527h1v1h-1zM340 527h1v1h-1zM344 527h1v1h-1zM349 527h1v1h-1zM353 527h1v1h-1zM361 527h1v1h-1zM366 527h1v1h-1zM239 528h1v1h-1zM244 528h1v1h-1zM248 528h1v1h-1zM252 528h1v1h-1zM260 528h1v1h-1zM264 528h1v1h-1zM269 528h1v1h-1zM273 528h1v1h-1zM281 528h1v1h-1zM285 528h1v1h-1zM289 528h1v1h-1zM293 528h1v1h-1zM300 528h1v1h-1zM304 528h1v1h-1zM308 528h1v1h-1zM312 528h1v1h-1zM320 528h1v1h-1zM324 528h1v1h-1zM328 528h1v1h-1zM332 528h1v1h-1zM340 528h1v1h-1zM344 528h1v1h-1zM349 528h1v1h-1zM353 528h1v1h-1zM362 528h1v1h-1zM366 528h1v1h-1zM239 529h1v1h-1zM243 529h1v1h-1zM248 529h1v1h-1zM252 529h1v1h-1zM260 529h1v1h-1zM264 529h1v1h-1zM268 529h1v1h-1zM272 529h1v1h-1zM281 529h1v1h-1zM285 529h1v1h-1zM289 529h1v1h-1zM293 529h1v1h-1zM300 529h1v1h-1zM304 529h1v1h-1zM308 529h1v1h-1zM312 529h1v1h-1zM320 529h1v1h-1zM324 529h1v1h-1zM328 529h1v1h-1zM332 529h1v1h-1zM340 529h1v1h-1zM344 529h1v1h-1zM349 529h1v1h-1zM353 529h1v1h-1zM362 529h1v1h-1zM243 530h1v1h-1zM247 530h1v1h-1zM252 530h1v1h-1zM260 530h1v1h-1zM264 530h1v1h-1zM268 530h1v1h-1zM272 530h1v1h-1zM280 530h1v1h-1zM284 530h1v1h-1zM289 530h1v1h-1zM293 530h1v1h-1zM300 530h1v1h-1zM304 530h1v1h-1zM308 530h1v1h-1zM312 530h1v1h-1zM320 530h1v1h-1zM324 530h1v1h-1zM328 530h1v1h-1zM332 530h1v1h-1zM340 530h1v1h-1zM345 530h1v1h-1zM350 530h1v1h-1zM354 530h1v1h-1zM247 531h1v1h-1zM251 531h1v1h-1zM260 531h1v1h-1zM264 531h1v1h-1zM268 531h1v1h-1zM272 531h1v1h-1zM280 531h1v1h-1zM284 531h1v1h-1zM288 531h1v1h-1zM293 531h1v1h-1zM300 531h1v1h-1zM304 531h1v1h-1zM308 531h1v1h-1zM312 531h1v1h-1zM320 531h1v1h-1zM324 531h1v1h-1zM328 531h1v1h-1zM332 531h1v1h-1zM341 531h1v1h-1zM345 531h1v1h-1zM350 531h1v1h-1zM251 532h1v1h-1zM259 532h1v1h-1zM264 532h1v1h-1zM268 532h1v1h-1zM272 532h1v1h-1zM280 532h1v1h-1zM284 532h1v1h-1zM288 532h1v1h-1zM293 532h1v1h-1zM300 532h1v1h-1zM304 532h1v1h-1zM308 532h1v1h-1zM312 532h1v1h-1zM320 532h1v1h-1zM324 532h1v1h-1zM328 532h1v1h-1zM333 532h1v1h-1zM341 532h1v1h-1zM345 532h1v1h-1zM259 533h1v1h-1zM263 533h1v1h-1zM268 533h1v1h-1zM272 533h1v1h-1zM280 533h1v1h-1zM284 533h1v1h-1zM288 533h1v1h-1zM293 533h1v1h-1zM300 533h1v1h-1zM304 533h1v1h-1zM308 533h1v1h-1zM312 533h1v1h-1zM321 533h1v1h-1zM325 533h1v1h-1zM329 533h1v1h-1zM333 533h1v1h-1zM341 533h1v1h-1zM263 534h1v1h-1zM268 534h1v1h-1zM272 534h1v1h-1zM280 534h1v1h-1zM284 534h1v1h-1zM288 534h1v1h-1zM293 534h1v1h-1zM300 534h1v1h-1zM304 534h1v1h-1zM308 534h1v1h-1zM312 534h1v1h-1zM321 534h1v1h-1zM325 534h1v1h-1zM329 534h1v1h-1zM333 534h1v1h-1zM268 535h1v1h-1zM272 535h1v1h-1zM280 535h1v1h-1zM284 535h1v1h-1zM288 535h1v1h-1zM293 535h1v1h-1zM300 535h1v1h-1zM304 535h1v1h-1zM308 535h1v1h-1zM312 535h1v1h-1zM321 535h1v1h-1zM325 535h1v1h-1zM329 535h1v1h-1zM333 535h1v1h-1zM272 536h1v1h-1zM280 536h1v1h-1zM284 536h1v1h-1zM288 536h1v1h-1zM293 536h1v1h-1zM300 536h1v1h-1zM304 536h1v1h-1zM308 536h1v1h-1zM312 536h1v1h-1zM321 536h1v1h-1zM325 536h1v1h-1zM288 537h1v1h-1zM293 537h1v1h-1zM300 537h1v1h-1zM304 537h1v1h-1zM308 537h1v1h-1z"/>
<path fill="#ffff00" d="M235 94h1v1h-1zM242 94h3v1h-3zM234 95h2v1h-2zM241 95h1v1h-1zM245 95h1v1h-1zM233 96h1v1h-1zM235 96h1v1h-1zM241 96h1v1h-1zM245 96h1v1h-1zM235 97h1v1h-1zM241 97h1v1h-1zM245 97h1v1h-1zM235 98h1v1h-1zM241 98h1v1h-1zM245 98h1v1h-1zM235 99h1v1h-1zM241 99h1v1h-1zM245 99h1v1h-1zM235 100h1v1h-1zM241 100h1v1h-1zM245 100h1v1h-1zM235 101h1v1h-1zM241 101h1v1h-1zM245 101h1v1h-1zM233 102h5v1h-5zM242 102h3v1h-3zM481 108h1v1h-1zM493 108h1v1h-1zM482 109h1v1h-1zM492 109h1v1h-1zM482 110h1v1h-1zM492 110h1v1h-1zM283 111h1v1h-1zM291 111h1v1h-1zM295 111h4v1h-4zM483 111h2v1h-2zM490 111h2v1h-2zM283 112h2v1h-2zM290 112h2v1h-2zM294 112h1v1h-1zM299 112h1v1h-1zM485 112h5v1h-5zM283 113h1v1h-1zM285 113h1v1h-1zM289 113h1v1h-1zM291 113h1v1h-1zM294 113h1v1h-1zM299 113h1v1h-1zM483 113h2v1h-2zM490 113h2v1h-2zM283 114h1v1h-1zM286 114h1v1h-1zM288 114h1v1h-1zM291 114h1v1h-1zM294 114h1v1h-1zM482 114h1v1h-1zM492 114h1v1h-1zM283 115h1v1h-1zM287 115h1v1h-1zM291 115h1v1h-1zM294 115h1v1h-1zM482 115h1v1h-1zM492 115h1v1h-1zM283 116h1v1h-1zM287 116h1v1h-1zM291 116h1v1h-1zM294 116h1v1h-1zM481 116h1v1h-1zM493 116h1v1h-1zM283 117h1v1h-1zM287 117h1v1h-1zM291 117h1v1h-1zM294 117h1v1h-1zM481 117h1v1h-1zM493 117h1v1h-1zM283 118h1v1h-1zM287 118h1v1h-1zM291 118h1v1h-1zM294 118h1v1h-1zM481 118h1v1h-1zM493 118h1v1h-1zM747 118h3v1h-3zM283 119h1v1h-1zM287 119h1v1h-1zM291 119h1v1h-1zM294 119h1v1h-1zM481 119h1v1h-1zM493 119h1v1h-1zM746 119h1v1h-1zM750 119h1v1h-1zM283 120h1v1h-1zM287 120h1v1h-1zM291 120h1v1h-1zM294 120h1v1h-1zM481 120h1v1h-1zM493 120h1v1h-1zM746 120h1v1h-1zM750 120h1v1h-1zM283 121h1v1h-1zM287 121h1v1h-1zM291 121h1v1h-1zM294 121h1v1h-1zM482 121h1v1h-1zM492 121h1v1h-1zM744 121h4v1h-4zM749 121h4v1h-4zM283 122h1v1h-1zM287 122h1v1h-1zM291 122h1v1h-1zM294 122h1v1h-1zM482 122h1v1h-1zM492 122h1v1h-1zM283 123h1v1h-1zM287 123h1v1h-1zM291 123h1v1h-1zM294 123h1v1h-1zM483 123h2v1h-2zM490 123h2v1h-2zM744 123h9v1h-9zM283 124h1v1h-1zM287 124h1v1h-1zM291 124h1v1h-1zM294 124h1v1h-1zM485 124h5v1h-5zM283 125h1v1h-1zM287 125h1v1h-1zM291 125h1v1h-1zM294 125h1v1h-1zM299 125h1v1h-1zM283 126h1v1h-1zM287 126h1v1h-1zM291 126h1v1h-1zM294 126h1v1h-1zM299 126h1v1h-1zM283 127h1v1h-1zM287 127h1v1h-1zM291 127h1v1h-1zM295 127h4v1h-4zM300 155h1v1h-1zM304 155h1v1h-1zM308 156h1v1h-1zM312 156h1v1h-1zM316 156h1v1h-1zM744 156h1v1h-1zM752 156h1v1h-1zM745 157h1v1h-1zM751 157h1v1h-1zM746 158h1v1h-1zM750 158h1v1h-1zM746 159h1v1h-1zM750 159h1v1h-1zM260 160h3v1h-3zM744 160h9v1h-9zM258 161h2v1h-2zM746 161h1v1h-1zM750 161h1v1h-1zM746 162h1v1h-1zM750 162h1v1h-1zM745 163h1v1h-1zM751 163h1v1h-1zM744 164h1v1h-1zM752 164h1v1h-1zM747 197h3v1h-3zM745 198h2v1h-2zM750 198h2v1h-2zM744 199h1v1h-1zM749 199h1v1h-1zM752 199h1v1h-1zM745 200h2v1h-2zM749 200h1v1h-1zM752 200h1v1h-1zM744 201h1v1h-1zM747 201h1v1h-1zM750 201h2v1h-2zM744 202h1v1h-1zM747 202h1v1h-1zM752 202h1v1h-1zM745 203h2v1h-2zM750 203h2v1h-2zM747 204h3v1h-3zM38 221h1v1h-1zM42 221h1v1h-1zM46 221h1v1h-1zM39 222h1v1h-1zM41 222h1v1h-1zM43 222h1v1h-1zM45 222h1v1h-1zM47 222h1v1h-1zM40 223h1v1h-1zM44 223h1v1h-1zM48 223h1v1h-1zM52 223h1v1h-1zM40 224h1v1h-1zM44 224h1v1h-1zM48 224h1v1h-1zM51 224h2v1h-2zM40 225h1v1h-1zM44 225h1v1h-1zM48 225h1v1h-1zM50 225h1v1h-1zM52 225h1v1h-1zM40 226h1v1h-1zM44 226h1v1h-1zM48 226h2v1h-2zM52 226h1v1h-1zM40 227h1v1h-1zM44 227h1v1h-1zM48 227h1v1h-1zM52 227h1v1h-1zM40 228h1v1h-1zM44 228h1v1h-1zM48 228h1v1h-1zM52 228h1v1h-1zM40 229h1v1h-1zM44 229h1v1h-1zM48 229h1v1h-1zM52 229h1v1h-1zM40 230h1v1h-1zM44 230h1v1h-1zM48 230h1v1h-1zM52 230h1v1h-1zM40 231h1v1h-1zM44 231h1v1h-1zM48 231h1v1h-1zM52 231h1v1h-1zM40 232h1v1h-1zM44 232h1v1h-1zM48 232h1v1h-1zM52 232h1v1h-1zM40 233h1v1h-1zM44 233h1v1h-1zM48 233h1v1h-1zM52 233h1v1h-1zM40 234h1v1h-1zM44 234h1v1h-1zM49 234h1v1h-1zM51 234h1v1h-1zM40 235h1v1h-1zM44 235h1v1h-1zM50 235h1v1h-1zM49 236h1v1h-1zM51 236h1v1h-1zM48 237h1v1h-1zM52 237h1v1h-1zM747 296h1v1h-1zM745 297h5v1h-5zM747 298h1v1h-1zM747 299h1v1h-1zM749 299h2v1h-2zM747 300h2v1h-2zM751 300h1v1h-1zM747 301h1v1h-1zM751 301h1v1h-1zM747 302h1v1h-1zM750 302h1v1h-1zM747 303h1v1h-1zM750 303h1v1h-1zM751 304h1v1h-1zM124 341h1v1h-1zM124 342h1v1h-1zM502 342h3v1h-3zM120 343h9v1h-9zM501 343h1v1h-1zM505 343h1v1h-1zM124 344h1v1h-1zM501 344h1v1h-1zM124 345h1v1h-1zM501 345h1v1h-1zM124 346h1v1h-1zM501 346h4v1h-4zM124 347h1v1h-1zM128 347h3v1h-3zM501 347h1v1h-1zM505 347h1v1h-1zM124 348h1v1h-1zM127 348h1v1h-1zM131 348h1v1h-1zM501 348h1v1h-1zM505 348h1v1h-1zM124 349h3v1h-3zM132 349h1v1h-1zM501 349h1v1h-1zM505 349h1v1h-1zM124 350h1v1h-1zM132 350h1v1h-1zM158 350h1v1h-1zM502 350h3v1h-3zM124 351h1v1h-1zM132 351h1v1h-1zM124 352h1v1h-1zM131 352h1v1h-1zM124 353h1v1h-1zM130 353h1v1h-1zM124 354h1v1h-1zM130 354h1v1h-1zM124 355h1v1h-1zM130 355h1v1h-1zM131 356h1v1h-1zM132 357h1v1h-1zM141 434h3v1h-3zM140 435h1v1h-1zM144 435h1v1h-1zM144 436h1v1h-1zM144 437h1v1h-1zM143 438h1v1h-1zM142 439h1v1h-1zM141 440h1v1h-1zM140 441h1v1h-1zM140 442h5v1h-5zM358 545h1v1h-1zM364 545h1v1h-1zM368 545h3v1h-3zM357 546h2v1h-2zM364 546h2v1h-2zM367 546h1v1h-1zM371 546h1v1h-1zM356 547h1v1h-1zM358 547h1v1h-1zM364 547h1v1h-1zM366 547h1v1h-1zM372 547h1v1h-1zM358 548h1v1h-1zM363 548h1v1h-1zM365 548h1v1h-1zM372 548h1v1h-1zM358 549h1v1h-1zM362 549h1v1h-1zM366 549h1v1h-1zM372 549h1v1h-1zM358 550h1v1h-1zM362 550h1v1h-1zM367 550h1v1h-1zM371 550h1v1h-1zM358 551h1v1h-1zM362 551h1v1h-1zM368 551h1v1h-1zM370 551h1v1h-1zM358 552h1v1h-1zM362 552h1v1h-1zM369 552h1v1h-1zM358 553h1v1h-1zM362 553h1v1h-1zM370 553h1v1h-1zM359 554h1v1h-1zM361 554h1v1h-1zM371 554h1v1h-1zM360 555h1v1h-1zM372 555h1v1h-1zM360 556h1v1h-1zM372 556h1v1h-1zM360 557h1v1h-1zM372 557h1v1h-1zM360 558h1v1h-1zM372 558h1v1h-1zM360 559h1v1h-1zM372 559h1v1h-1zM371 560h1v1h-1zM370 561h1v1h-1z"/>
<path fill="#00ff00" d="M363 38h1v1h-1zM377 38h1v1h-1zM364 39h1v1h-1zM376 39h1v1h-1zM365 40h11v1h-11zM367 41h1v1h-1zM373 41h1v1h-1zM367 42h1v1h-1zM373 42h1v1h-1zM367 43h1v1h-1zM373 43h1v1h-1zM367 44h1v1h-1zM373 44h1v1h-1zM367 45h1v1h-1zM373 45h1v1h-1zM367 46h1v1h-1zM373 46h1v1h-1zM367 47h1v1h-1zM373 47h1v1h-1zM367 48h1v1h-1zM373 48h1v1h-1zM367 49h1v1h-1zM373 49h1v1h-1zM367 50h1v1h-1zM373 50h1v1h-1zM367 51h1v1h-1zM373 51h1v1h-1zM365 52h11v1h-11zM364 53h1v1h-1zM376 53h1v1h-1zM363 54h1v1h-1zM377 54h1v1h-1zM258 115h1v1h-1zM266 115h1v1h-1zM259 116h1v1h-1zM265 116h1v1h-1zM260 117h5v1h-5zM259 118h1v1h-1zM265 118h1v1h-1zM258 119h1v1h-1zM266 119h1v1h-1zM238 120h1v1h-1zM250 120h1v1h-1zM258 120h1v1h-1zM266 120h1v1h-1zM239 121h1v1h-1zM249 121h1v1h-1zM258 121h1v1h-1zM266 121h1v1h-1zM240 122h1v1h-1zM248 122h1v1h-1zM258 122h1v1h-1zM266 122h1v1h-1zM240 123h1v1h-1zM248 123h1v1h-1zM258 123h1v1h-1zM266 123h1v1h-1zM240 124h1v1h-1zM244 124h1v1h-1zM248 124h1v1h-1zM259 124h1v1h-1zM265 124h1v1h-1zM240 125h1v1h-1zM244 125h1v1h-1zM248 125h1v1h-1zM260 125h5v1h-5zM240 126h9v1h-9zM262 126h1v1h-1zM744 126h1v1h-1zM746 126h1v1h-1zM748 126h1v1h-1zM240 127h1v1h-1zM244 127h1v1h-1zM248 127h1v1h-1zM262 127h1v1h-1zM745 127h1v1h-1zM747 127h1v1h-1zM749 127h1v1h-1zM240 128h1v1h-1zM244 128h1v1h-1zM248 128h1v1h-1zM262 128h1v1h-1zM745 128h1v1h-1zM747 128h1v1h-1zM749 128h1v1h-1zM239 129h1v1h-1zM244 129h1v1h-1zM249 129h1v1h-1zM258 129h9v1h-9zM745 129h1v1h-1zM747 129h1v1h-1zM749 129h1v1h-1zM238 130h1v1h-1zM244 130h1v1h-1zM250 130h1v1h-1zM262 130h1v1h-1zM745 130h1v1h-1zM747 130h1v1h-1zM749 130h1v1h-1zM244 131h1v1h-1zM262 131h1v1h-1zM745 131h1v1h-1zM747 131h1v1h-1zM749 131h1v1h-1zM243 132h3v1h-3zM745 132h1v1h-1zM747 132h1v1h-1zM749 132h1v1h-1zM752 132h1v1h-1zM242 133h1v1h-1zM246 133h1v1h-1zM745 133h1v1h-1zM747 133h1v1h-1zM749 133h1v1h-1zM752 133h1v1h-1zM242 134h1v1h-1zM246 134h1v1h-1zM750 134h2v1h-2zM242 135h1v1h-1zM246 135h1v1h-1zM243 136h3v1h-3zM261 154h1v1h-1zM257 156h1v1h-1zM138 157h1v1h-1zM146 157h1v1h-1zM137 158h2v1h-2zM145 158h2v1h-2zM314 158h1v1h-1zM136 159h1v1h-1zM138 159h1v1h-1zM144 159h1v1h-1zM146 159h1v1h-1zM138 160h1v1h-1zM146 160h1v1h-1zM313 160h1v1h-1zM138 161h1v1h-1zM146 161h1v1h-1zM138 162h1v1h-1zM146 162h1v1h-1zM311 162h1v1h-1zM138 163h1v1h-1zM146 163h1v1h-1zM138 164h1v1h-1zM146 164h1v1h-1zM310 164h1v1h-1zM136 165h5v1h-5zM144 165h5v1h-5zM308 166h1v1h-1zM745 166h2v1h-2zM750 166h2v1h-2zM744 167h1v1h-1zM747 167h1v1h-1zM749 167h1v1h-1zM752 167h1v1h-1zM307 168h1v1h-1zM744 168h1v1h-1zM747 168h1v1h-1zM749 168h1v1h-1zM752 168h1v1h-1zM745 169h1v1h-1zM747 169h1v1h-1zM749 169h1v1h-1zM751 169h1v1h-1zM305 170h1v1h-1zM748 170h1v1h-1zM748 171h1v1h-1zM748 172h1v1h-1zM748 173h1v1h-1zM302 174h1v1h-1zM748 174h1v1h-1zM300 176h1v1h-1zM299 178h1v1h-1zM297 180h1v1h-1zM439 181h5v1h-5zM295 182h2v1h-2zM438 182h1v1h-1zM444 182h1v1h-1zM437 183h1v1h-1zM445 183h1v1h-1zM294 184h1v1h-1zM437 184h1v1h-1zM445 184h1v1h-1zM437 185h1v1h-1zM445 185h1v1h-1zM292 186h1v1h-1zM437 186h1v1h-1zM445 186h1v1h-1zM437 187h1v1h-1zM445 187h1v1h-1zM291 188h1v1h-1zM438 188h1v1h-1zM444 188h1v1h-1zM439 189h5v1h-5zM289 190h1v1h-1zM441 190h1v1h-1zM441 191h1v1h-1zM288 192h1v1h-1zM441 192h1v1h-1zM437 193h9v1h-9zM286 194h1v1h-1zM441 194h1v1h-1zM441 195h1v1h-1zM284 196h2v1h-2zM441 196h1v1h-1zM441 197h1v1h-1zM283 198h1v1h-1zM281 200h1v1h-1zM280 202h1v1h-1zM278 204h1v1h-1zM276 206h2v1h-2zM747 206h3v1h-3zM746 207h1v1h-1zM750 207h1v1h-1zM275 208h1v1h-1zM417 208h1v1h-1zM745 208h1v1h-1zM751 208h1v1h-1zM745 209h1v1h-1zM751 209h1v1h-1zM273 210h1v1h-1zM745 210h1v1h-1zM751 210h1v1h-1zM746 211h1v1h-1zM750 211h1v1h-1zM272 212h1v1h-1zM744 212h1v1h-1zM746 212h1v1h-1zM750 212h1v1h-1zM745 213h1v1h-1zM751 213h1v1h-1zM270 214h1v1h-1zM752 214h1v1h-1zM269 216h1v1h-1zM267 218h1v1h-1zM265 220h2v1h-2zM264 222h1v1h-1zM262 224h1v1h-1zM261 226h1v1h-1zM259 228h1v1h-1zM257 230h2v1h-2zM256 232h1v1h-1zM254 234h2v1h-2zM253 236h1v1h-1zM251 238h1v1h-1zM250 240h1v1h-1zM248 242h1v1h-1zM246 244h2v1h-2zM245 246h1v1h-1zM243 248h2v1h-2zM501 248h5v1h-5zM505 249h1v1h-1zM242 250h1v1h-1zM505 250h1v1h-1zM504 251h1v1h-1zM240 252h1v1h-1zM503 252h1v1h-1zM502 253h1v1h-1zM238 254h2v1h-2zM501 254h1v1h-1zM501 255h1v1h-1zM237 256h1v1h-1zM501 256h1v1h-1zM746 256h1v1h-1zM750 256h1v1h-1zM747 257h3v1h-3zM235 258h2v1h-2zM746 258h1v1h-1zM750 258h1v1h-1zM746 259h1v1h-1zM750 259h1v1h-1zM234 260h1v1h-1zM746 260h1v1h-1zM750 260h1v1h-1zM747 261h3v1h-3zM232 262h2v1h-2zM748 262h1v1h-1zM746 263h5v1h-5zM231 264h1v1h-1zM748 264h1v1h-1zM229 266h1v1h-1zM747 266h3v1h-3zM746 267h1v1h-1zM750 267h1v1h-1zM227 268h2v1h-2zM746 268h1v1h-1zM750 268h1v1h-1zM746 269h1v1h-1zM750 269h1v1h-1zM226 270h1v1h-1zM747 270h3v1h-3zM748 271h1v1h-1zM224 272h2v1h-2zM746 272h5v1h-5zM748 273h1v1h-1zM223 274h1v1h-1zM748 274h1v1h-1zM221 276h1v1h-1zM219 278h2v1h-2zM218 280h1v1h-1zM216 282h2v1h-2zM215 284h1v1h-1zM213 286h2v1h-2zM212 288h1v1h-1zM210 290h1v1h-1zM208 292h2v1h-2zM207 294h1v1h-1zM205 296h2v1h-2zM204 298h1v1h-1zM202 300h2v1h-2zM200 302h2v1h-2zM199 304h1v1h-1zM197 306h2v1h-2zM745 306h1v1h-1zM751 306h1v1h-1zM746 307h1v1h-1zM750 307h1v1h-1zM196 308h1v1h-1zM746 308h1v1h-1zM748 308h1v1h-1zM750 308h1v1h-1zM746 309h5v1h-5zM194 310h2v1h-2zM746 310h1v1h-1zM748 310h1v1h-1zM750 310h1v1h-1zM745 311h1v1h-1zM748 311h1v1h-1zM751 311h1v1h-1zM193 312h1v1h-1zM747 312h3v1h-3zM747 313h1v1h-1zM749 313h1v1h-1zM191 314h2v1h-2zM748 314h1v1h-1zM189 316h2v1h-2zM188 318h1v1h-1zM186 320h2v1h-2zM185 322h1v1h-1zM183 324h2v1h-2zM181 326h2v1h-2zM180 328h2v1h-2zM178 330h2v1h-2zM177 332h1v1h-1zM175 334h2v1h-2zM174 336h1v1h-1zM172 338h2v1h-2zM170 340h2v1h-2zM169 342h2v1h-2zM167 344h2v1h-2zM166 346h1v1h-1zM164 348h2v1h-2zM43 360h5v1h-5zM42 361h1v1h-1zM48 361h1v1h-1zM41 362h1v1h-1zM49 362h1v1h-1zM41 363h1v1h-1zM49 363h1v1h-1zM41 364h1v1h-1zM49 364h1v1h-1zM42 365h1v1h-1zM48 365h1v1h-1zM37 366h7v1h-7zM47 366h7v1h-7zM37 370h17v1h-17zM478 479h1v1h-1zM484 479h1v1h-1zM490 479h1v1h-1zM477 480h2v1h-2zM483 480h2v1h-2zM489 480h1v1h-1zM477 481h1v1h-1zM479 481h1v1h-1zM483 481h1v1h-1zM485 481h1v1h-1zM489 481h1v1h-1zM476 482h1v1h-1zM479 482h1v1h-1zM482 482h1v1h-1zM485 482h1v1h-1zM488 482h1v1h-1zM475 483h1v1h-1zM479 483h1v1h-1zM481 483h1v1h-1zM485 483h1v1h-1zM487 483h1v1h-1zM475 484h1v1h-1zM480 484h2v1h-2zM486 484h2v1h-2zM474 485h1v1h-1zM480 485h1v1h-1zM486 485h1v1h-1zM478 489h1v1h-1zM484 489h1v1h-1zM490 489h1v1h-1zM477 490h2v1h-2zM483 490h2v1h-2zM489 490h1v1h-1zM477 491h1v1h-1zM479 491h1v1h-1zM483 491h1v1h-1zM485 491h1v1h-1zM489 491h1v1h-1zM476 492h1v1h-1zM479 492h1v1h-1zM482 492h1v1h-1zM485 492h1v1h-1zM488 492h1v1h-1zM475 493h1v1h-1zM479 493h1v1h-1zM481 493h1v1h-1zM485 493h1v1h-1zM487 493h1v1h-1zM475 494h1v1h-1zM480 494h2v1h-2zM486 494h2v1h-2zM474 495h1v1h-1zM480 495h1v1h-1zM486 495h1v1h-1zM238 496h3v1h-3zM237 497h1v1h-1zM241 497h1v1h-1zM241 498h1v1h-1zM241 499h1v1h-1zM239 500h2v1h-2zM241 501h1v1h-1zM241 502h1v1h-1zM237 503h1v1h-1zM241 503h1v1h-1zM238 504h3v1h-3z"/>
<path fill="#008080" d="M747 336h3v1h-3zM746 337h1v1h-1zM750 337h1v1h-1zM745 338h1v1h-1zM751 338h1v1h-1zM745 339h1v1h-1zM751 339h1v1h-1zM745 340h1v1h-1zM751 340h1v1h-1zM746 341h1v1h-1zM750 341h1v1h-1zM745 342h2v1h-2zM750 342h2v1h-2zM744 343h1v1h-1zM746 343h1v1h-1zM750 343h1v1h-1zM752 343h1v1h-1zM745 344h1v1h-1zM751 344h1v1h-1zM384 422h1v1h-1zM399 439h5v1h-5zM398 440h1v1h-1zM404 440h1v1h-1zM397 441h1v1h-1zM405 441h1v1h-1zM396 442h1v1h-1zM406 442h1v1h-1zM395 443h1v1h-1zM407 443h1v1h-1zM395 444h1v1h-1zM407 444h1v1h-1zM395 445h1v1h-1zM407 445h1v1h-1zM395 446h1v1h-1zM407 446h1v1h-1zM395 447h1v1h-1zM407 447h1v1h-1zM396 448h1v1h-1zM406 448h1v1h-1zM397 449h1v1h-1zM405 449h1v1h-1zM397 450h1v1h-1zM405 450h1v1h-1zM395 451h3v1h-3zM405 451h3v1h-3zM394 452h1v1h-1zM397 452h1v1h-1zM405 452h1v1h-1zM408 452h1v1h-1zM393 453h1v1h-1zM397 453h1v1h-1zM405 453h1v1h-1zM409 453h1v1h-1zM394 454h1v1h-1zM396 454h1v1h-1zM406 454h1v1h-1zM408 454h1v1h-1zM395 455h1v1h-1zM407 455h1v1h-1z"/>
<path fill="#0000ff" d="M232 38h5v1h-5zM229 39h3v1h-3zM237 39h1v1h-1zM228 40h1v1h-1zM238 40h3v1h-3zM227 41h1v1h-1zM237 41h1v1h-1zM241 41h1v1h-1zM226 42h1v1h-1zM236 42h1v1h-1zM242 42h1v1h-1zM236 43h1v1h-1zM242 43h1v1h-1zM228 44h3v1h-3zM236 44h1v1h-1zM242 44h1v1h-1zM227 45h1v1h-1zM231 45h1v1h-1zM237 45h1v1h-1zM241 45h1v1h-1zM226 46h1v1h-1zM232 46h1v1h-1zM238 46h3v1h-3zM226 47h1v1h-1zM232 47h1v1h-1zM226 48h1v1h-1zM232 48h1v1h-1zM242 48h1v1h-1zM227 49h1v1h-1zM231 49h1v1h-1zM241 49h1v1h-1zM228 50h3v1h-3zM240 50h1v1h-1zM231 51h1v1h-1zM237 51h3v1h-3zM232 52h5v1h-5zM745 136h1v1h-1zM748 136h1v1h-1zM750 136h2v1h-2zM744 137h2v1h-2zM748 137h2v1h-2zM752 137h1v1h-1zM745 138h1v1h-1zM747 138h1v1h-1zM749 138h1v1h-1zM752 138h1v1h-1zM745 139h1v1h-1zM747 139h1v1h-1zM750 139h2v1h-2zM745 140h1v1h-1zM747 140h1v1h-1zM751 140h1v1h-1zM746 141h1v1h-1zM752 141h1v1h-1zM746 142h1v1h-1zM752 142h1v1h-1zM746 143h1v1h-1zM752 143h1v1h-1zM751 144h1v1h-1zM190 145h5v1h-5zM189 146h1v1h-1zM195 146h2v1h-2zM188 147h1v1h-1zM197 147h1v1h-1zM189 148h1v1h-1zM198 148h1v1h-1zM190 149h1v1h-1zM199 149h1v1h-1zM191 150h1v1h-1zM199 150h1v1h-1zM191 151h1v1h-1zM200 151h1v1h-1zM192 152h1v1h-1zM200 152h1v1h-1zM192 153h1v1h-1zM200 153h1v1h-1zM192 154h1v1h-1zM200 154h1v1h-1zM191 155h1v1h-1zM200 155h1v1h-1zM191 156h1v1h-1zM199 156h1v1h-1zM455 156h3v1h-3zM190 157h1v1h-1zM199 157h1v1h-1zM454 157h1v1h-1zM458 157h1v1h-1zM189 158h1v1h-1zM198 158h1v1h-1zM454 158h1v1h-1zM458 158h1v1h-1zM188 159h1v1h-1zM197 159h1v1h-1zM454 159h1v1h-1zM458 159h1v1h-1zM189 160h1v1h-1zM195 160h2v1h-2zM455 160h3v1h-3zM190 161h5v1h-5zM454 161h1v1h-1zM458 161h1v1h-1zM454 162h1v1h-1zM458 162h1v1h-1zM454 163h1v1h-1zM458 163h1v1h-1zM455 164h3v1h-3zM745 176h2v1h-2zM750 176h2v1h-2zM154 177h1v1h-1zM159 177h3v1h-3zM166 177h1v1h-1zM212 177h1v1h-1zM744 177h1v1h-1zM747 177h1v1h-1zM749 177h1v1h-1zM752 177h1v1h-1zM154 178h1v1h-1zM158 178h1v1h-1zM162 178h1v1h-1zM166 178h1v1h-1zM744 178h1v1h-1zM747 178h1v1h-1zM749 178h1v1h-1zM752 178h1v1h-1zM154 179h1v1h-1zM158 179h1v1h-1zM162 179h1v1h-1zM166 179h1v1h-1zM745 179h1v1h-1zM747 179h1v1h-1zM749 179h1v1h-1zM751 179h1v1h-1zM154 180h1v1h-1zM158 180h1v1h-1zM162 180h1v1h-1zM166 180h1v1h-1zM748 180h1v1h-1zM154 181h1v1h-1zM159 181h3v1h-3zM166 181h1v1h-1zM748 181h1v1h-1zM155 182h1v1h-1zM165 182h1v1h-1zM748 182h1v1h-1zM155 183h1v1h-1zM165 183h1v1h-1zM748 183h1v1h-1zM156 184h2v1h-2zM163 184h2v1h-2zM748 184h1v1h-1zM158 185h5v1h-5zM160 186h1v1h-1zM160 187h1v1h-1zM160 188h1v1h-1zM156 189h9v1h-9zM160 190h1v1h-1zM160 191h1v1h-1zM160 192h1v1h-1zM160 193h1v1h-1zM184 204h1v1h-1zM744 216h1v1h-1zM746 216h1v1h-1zM748 216h1v1h-1zM745 217h1v1h-1zM747 217h1v1h-1zM749 217h3v1h-3zM745 218h1v1h-1zM747 218h1v1h-1zM749 218h1v1h-1zM751 218h1v1h-1zM745 219h1v1h-1zM747 219h1v1h-1zM749 219h1v1h-1zM751 219h1v1h-1zM745 220h1v1h-1zM747 220h1v1h-1zM749 220h1v1h-1zM751 220h1v1h-1zM745 221h1v1h-1zM747 221h1v1h-1zM749 221h1v1h-1zM751 221h1v1h-1zM745 222h1v1h-1zM747 222h1v1h-1zM749 222h1v1h-1zM751 222h1v1h-1zM745 223h1v1h-1zM747 223h1v1h-1zM750 223h1v1h-1zM749 224h1v1h-1zM751 224h1v1h-1zM746 246h3v1h-3zM745 247h1v1h-1zM749 247h2v1h-2zM91 248h1v1h-1zM98 248h3v1h-3zM746 248h1v1h-1zM750 248h1v1h-1zM90 249h2v1h-2zM97 249h1v1h-1zM101 249h1v1h-1zM747 249h1v1h-1zM751 249h1v1h-1zM89 250h1v1h-1zM91 250h1v1h-1zM101 250h1v1h-1zM747 250h1v1h-1zM751 250h1v1h-1zM91 251h1v1h-1zM101 251h1v1h-1zM747 251h1v1h-1zM751 251h1v1h-1zM91 252h1v1h-1zM100 252h1v1h-1zM746 252h1v1h-1zM750 252h1v1h-1zM91 253h1v1h-1zM99 253h1v1h-1zM745 253h1v1h-1zM749 253h2v1h-2zM91 254h1v1h-1zM98 254h1v1h-1zM746 254h3v1h-3zM91 255h1v1h-1zM97 255h1v1h-1zM89 256h5v1h-5zM97 256h5v1h-5zM745 316h1v1h-1zM748 316h1v1h-1zM751 316h1v1h-1zM744 317h2v1h-2zM747 317h3v1h-3zM751 317h2v1h-2zM745 318h1v1h-1zM748 318h1v1h-1zM751 318h1v1h-1zM746 319h1v1h-1zM748 319h1v1h-1zM750 319h1v1h-1zM747 320h3v1h-3zM748 321h1v1h-1zM746 322h5v1h-5zM748 323h1v1h-1zM748 324h1v1h-1zM745 326h1v1h-1zM748 326h1v1h-1zM751 326h1v1h-1zM745 327h1v1h-1zM747 327h1v1h-1zM749 327h1v1h-1zM751 327h1v1h-1zM745 328h1v1h-1zM748 328h1v1h-1zM751 328h1v1h-1zM746 329h1v1h-1zM750 329h1v1h-1zM747 330h3v1h-3zM748 331h1v1h-1zM746 332h5v1h-5zM748 333h1v1h-1zM748 334h1v1h-1zM159 351h1v1h-1zM127 359h1v1h-1zM133 359h1v1h-1zM139 359h1v1h-1zM127 360h1v1h-1zM133 360h1v1h-1zM139 360h1v1h-1zM126 361h3v1h-3zM131 361h5v1h-5zM138 361h3v1h-3zM544 361h1v1h-1zM560 361h1v1h-1zM127 362h1v1h-1zM133 362h1v1h-1zM139 362h1v1h-1zM545 362h1v1h-1zM559 362h1v1h-1zM127 363h1v1h-1zM133 363h1v1h-1zM139 363h1v1h-1zM546 363h1v1h-1zM558 363h1v1h-1zM128 364h1v1h-1zM133 364h1v1h-1zM138 364h1v1h-1zM547 364h1v1h-1zM557 364h1v1h-1zM128 365h1v1h-1zM133 365h1v1h-1zM138 365h1v1h-1zM547 365h1v1h-1zM557 365h1v1h-1zM129 366h2v1h-2zM133 366h1v1h-1zM136 366h2v1h-2zM548 366h1v1h-1zM556 366h1v1h-1zM131 367h5v1h-5zM548 367h1v1h-1zM556 367h1v1h-1zM133 368h1v1h-1zM548 368h1v1h-1zM556 368h1v1h-1zM133 369h1v1h-1zM544 369h17v1h-17zM133 370h1v1h-1zM548 370h1v1h-1zM556 370h1v1h-1zM129 371h9v1h-9zM548 371h1v1h-1zM556 371h1v1h-1zM133 372h1v1h-1zM548 372h1v1h-1zM556 372h1v1h-1zM133 373h1v1h-1zM547 373h1v1h-1zM557 373h1v1h-1zM133 374h1v1h-1zM547 374h1v1h-1zM557 374h1v1h-1zM133 375h1v1h-1zM546 375h1v1h-1zM558 375h1v1h-1zM545 376h1v1h-1zM559 376h1v1h-1zM544 377h1v1h-1zM560 377h1v1h-1zM103 474h1v1h-1zM107 474h1v1h-1zM111 474h1v1h-1zM104 475h1v1h-1zM106 475h1v1h-1zM108 475h1v1h-1zM110 475h1v1h-1zM112 475h1v1h-1zM105 476h1v1h-1zM109 476h1v1h-1zM113 476h1v1h-1zM105 477h1v1h-1zM109 477h1v1h-1zM113 477h1v1h-1zM105 478h1v1h-1zM109 478h1v1h-1zM113 478h1v1h-1zM105 479h1v1h-1zM109 479h1v1h-1zM113 479h1v1h-1zM105 480h1v1h-1zM109 480h1v1h-1zM113 480h1v1h-1zM105 481h1v1h-1zM109 481h1v1h-1zM113 481h1v1h-1zM105 482h1v1h-1zM109 482h1v1h-1zM113 482h1v1h-1zM105 483h1v1h-1zM109 483h1v1h-1zM113 483h1v1h-1zM105 484h1v1h-1zM109 484h1v1h-1zM113 484h1v1h-1zM105 485h1v1h-1zM109 485h1v1h-1zM113 485h1v1h-1zM118 485h1v1h-1zM105 486h1v1h-1zM109 486h1v1h-1zM113 486h1v1h-1zM117 486h3v1h-3zM105 487h1v1h-1zM109 487h1v1h-1zM113 487h1v1h-1zM118 487h1v1h-1zM105 488h1v1h-1zM109 488h1v1h-1zM113 488h1v1h-1zM118 488h1v1h-1zM114 489h1v1h-1zM117 489h1v1h-1zM115 490h2v1h-2zM357 496h1v1h-1zM360 496h1v1h-1zM357 497h1v1h-1zM360 497h1v1h-1zM357 498h1v1h-1zM360 498h1v1h-1zM357 499h1v1h-1zM360 499h1v1h-1zM357 500h5v1h-5zM360 501h1v1h-1zM360 502h1v1h-1zM360 503h1v1h-1zM360 504h1v1h-1z"/>
</svg><div id="side"><div class="ln" style="top:7.30px"><span style="color:#ffffff">Astrolog&#160;5.40</span></div><div class="ln" style="top:17.30px"><span style="color:#c0c0c0">""</span></div><div class="ln" style="top:27.30px"><span style="color:#c0c0c0">Mon&#160;June&#160;15,&#160;1953</span></div><div class="ln" style="top:37.30px"><span style="color:#c0c0c0">12:45pm&#160;(ST&#160;+8:00&#160;GMT)</span></div><div class="ln" style="top:47.30px"><span style="color:#c0c0c0">""</span></div><div class="ln" style="top:57.30px"><span style="color:#c0c0c0">116°25E&#160;39°55N</span></div><div class="ln" style="top:67.30px"><span style="color:#c0c0c0">Placidus&#160;houses.</span></div><div class="ln" style="top:77.30px"><span style="color:#c0c0c0">Tropical,&#160;Geocentric.</span></div><div class="ln" style="top:87.30px"><span style="color:#c0c0c0">Julian&#160;Day&#160;=&#160;2434543.6979</span></div><div class="ln" style="top:107.30px"><span style="color:#ff0000">&#160;1st&#160;house:</span><span style="color:#c0c0c0">&#160;</span><span style="color:#00ff00">&#160;0Lib40</span></div><div class="ln" style="top:117.30px"><span style="color:#ffff00">&#160;2nd&#160;house:</span><span style="color:#c0c0c0">&#160;</span><span style="color:#00ff00">26Lib54</span></div><div class="ln" style="top:127.30px"><span style="color:#00ff00">&#160;3rd&#160;house:</span><span style="color:#c0c0c0">&#160;</span><span style="color:#0000ff">27Sco21</span></div><div class="ln" style="top:137.30px"><span style="color:#0000ff">&#160;4th&#160;house:</span><span style="color:#c0c0c0">&#160;</span><span style="color:#ffff00">&#160;0Cap46</span></div><div class="ln" style="top:147.30px"><span style="color:#ff0000">&#160;5th&#160;house:</span><span style="color:#c0c0c0">&#160;</span><span style="color:#00ff00">&#160;4Aqu10</span></div><div class="ln" style="top:157.30px"><span style="color:#ffff00">&#160;6th&#160;house:</span><span style="color:#c0c0c0">&#160;</span><span style="color:#0000ff">&#160;4Pis33</span></div><div class="ln" style="top:167.30px"><span style="color:#00ff00">&#160;7th&#160;house:</span><span style="color:#c0c0c0">&#160;</span><span style="color:#ff0000">&#160;0Ari40</span></div><div class="ln" style="top:177.30px"><span style="color:#0000ff">&#160;8th&#160;house:</span><span style="color:#c0c0c0">&#160;</span><span style="color:#ff0000">26Ari54</span></div><div class="ln" style="top:187.30px"><span style="color:#ff0000">&#160;9th&#160;house:</span><span style="color:#c0c0c0">&#160;</span><span style="color:#ffff00">27Tau21</span></div><div class="ln" style="top:197.30px"><span style="color:#ffff00">10th&#160;house:</span><span style="color:#c0c0c0">&#160;</span><span style="color:#0000ff">&#160;0Can46</span></div><div class="ln" style="top:207.30px"><span style="color:#00ff00">11th&#160;house:</span><span style="color:#c0c0c0">&#160;</span><span style="color:#ff0000">&#160;4Leo10</span></div><div class="ln" style="top:217.30px"><span style="color:#0000ff">12th&#160;house:</span><span style="color:#c0c0c0">&#160;</span><span style="color:#ffff00">&#160;4Vir33</span></div><div class="ln" style="top:237.30px"><span style="color:#ff0000">&#160;Sun:</span><span style="color:#c0c0c0">&#160;</span><span style="color:#00ff00">23Gem47</span><span style="color:#ffffff">&#160;</span><span style="color:#c0c0c0">&#160;-&#160;0°00'</span></div><div class="ln" style="top:247.30px"><span style="color:#0000ff">Moon:</span><span style="color:#c0c0c0">&#160;</span><span style="color:#ff0000">&#160;6Leo19</span><span style="color:#ffffff">&#160;</span><span style="color:#c0c0c0">&#160;-&#160;0°14'</span></div><div class="ln" style="top:257.30px"><span style="color:#00ff00">Merc:</span><span style="color:#c0c0c0">&#160;</span><span style="color:#0000ff">15Can24</span><span style="color:#ffffff">&#160;</span><span style="color:#c0c0c0">&#160;+&#160;1°55'</span></div><div class="ln" style="top:267.30px"><span style="color:#00ff00">Venu:</span><span style="color:#c0c0c0">&#160;</span><span style="color:#ffff00">&#160;8Tau17</span><span style="color:#ffffff">&#160;</span><span style="color:#c0c0c0">&#160;-&#160;2°47'</span></div><div class="ln" style="top:277.30px"><span style="color:#ff0000">Mars:</span><span style="color:#c0c0c0">&#160;</span><span style="color:#0000ff">&#160;0Can42</span><span style="color:#ffffff">&#160;</span><span style="color:#c0c0c0">&#160;+&#160;0°49'</span></div><div class="ln" style="top:287.30px"><span style="color:#ff0000">Jupi:</span><span style="color:#c0c0c0">&#160;</span><span style="color:#00ff00">&#160;8Gem32</span><span style="color:#ffffff">&#160;</span><span style="color:#c0c0c0">&#160;-&#160;0°37'</span></div><div class="ln" style="top:297.30px"><span style="color:#ffff00">Satu:</span><span style="color:#c0c0c0">&#160;</span><span style="color:#00ff00">20Lib36</span><span style="color:#ffffff">R</span><span style="color:#c0c0c0">&#160;+&#160;2°37'</span></div><div class="ln" style="top:307.30px"><span style="color:#00ff00">Uran:</span><span style="color:#c0c0c0">&#160;</span><span style="color:#0000ff">17Can12</span><span style="color:#ffffff">&#160;</span><span style="color:#c0c0c0">&#160;+&#160;0°25'</span></div><div class="ln" style="top:317.30px"><span style="color:#0000ff">Nept:</span><span style="color:#c0c0c0">&#160;</span><span style="color:#00ff00">21Lib11</span><span style="color:#ffffff">R</span><span style="color:#c0c0c0">&#160;+&#160;1°43'</span></div><div class="ln" style="top:327.30px"><span style="color:#0000ff">Plut:</span><span style="color:#c0c0c0">&#160;</span><span style="color:#ff0000">21Leo13</span><span style="color:#ffffff">&#160;</span><span style="color:#c0c0c0">&#160;+&#160;9°23'</span></div><div class="ln" style="top:337.30px"><span style="color:#008080">Node:</span><span style="color:#c0c0c0">&#160;</span><span style="color:#00ff00">&#160;5Aqu20</span><span style="color:#ffffff">R</span><span style="color:#c0c0c0">&#160;+&#160;0°00'</span></div><div class="ln" style="top:357.30px"><span style="color:#c0c0c0">Fire:&#160;2,&#160;Earth:&#160;1,</span></div><div class="ln" style="top:367.30px"><span style="color:#c0c0c0">Air&#160;:&#160;6,&#160;Water:&#160;4</span></div><div class="ln" style="top:377.30px"><span style="color:#c0c0c0">Car:&#160;7,&#160;Fix:&#160;4,&#160;Mut:&#160;2</span></div><div class="ln" style="top:387.30px"><span style="color:#c0c0c0">Yang:&#160;8,&#160;Yin:&#160;5</span></div><div class="ln" style="top:397.30px"><span style="color:#c0c0c0">M:&#160;8,&#160;N:&#160;3,&#160;A:&#160;6,&#160;D:&#160;5</span></div><div class="ln" style="top:407.30px"><span style="color:#c0c0c0">Ang:&#160;4,&#160;Suc:&#160;4,&#160;Cad:&#160;3</span></div><div class="ln" style="top:417.30px"><span style="color:#c0c0c0">Learn:&#160;9,&#160;Share:&#160;4</span></div></div></body></html>
